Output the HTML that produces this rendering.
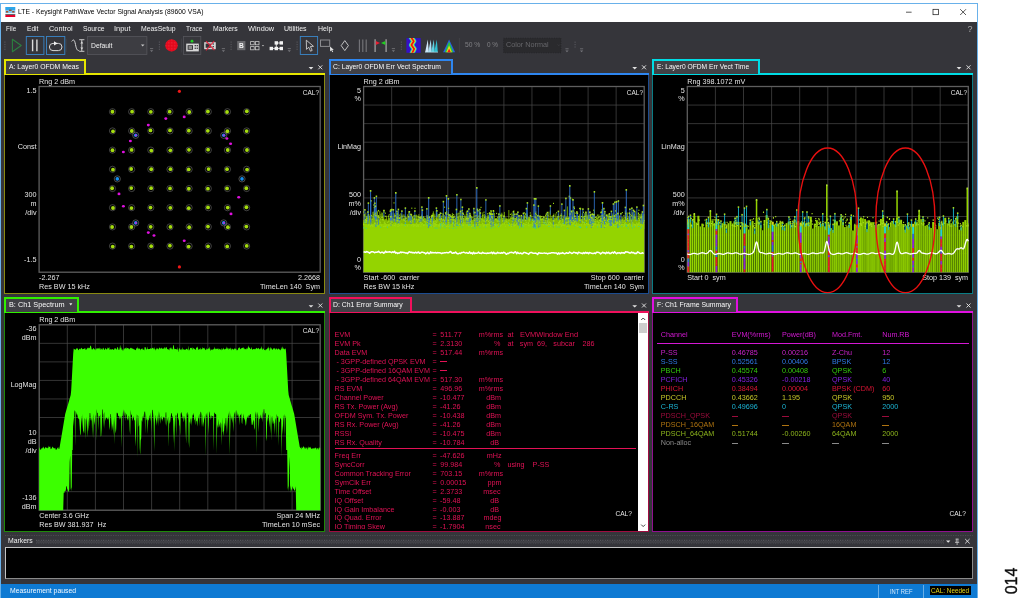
<!DOCTYPE html>
<html><head><meta charset="utf-8"><title>LTE - Keysight PathWave Vector Signal Analysis (89600 VSA)</title>
<style>
html,body{margin:0;padding:0;background:#fff;}
body{width:1024px;height:601px;position:relative;overflow:hidden;font-family:"Liberation Sans",sans-serif;}
.t{position:absolute;white-space:pre;line-height:1;display:block;}
.b{position:absolute;box-sizing:border-box;}
svg{position:absolute;left:0;top:0;overflow:visible;}
#root{position:absolute;left:0;top:0;width:1024px;height:601px;will-change:transform;}
</style></head><body><div id="root">
<div class="b" style="left:0.00px;top:3.00px;width:978.00px;height:595.00px;background:#35353a;border:1px solid #69b1ea;"></div>
<div class="b" style="left:1.00px;top:4.00px;width:976.00px;height:18.00px;background:#ffffff;"></div>
<svg width="1024" height="601"><g><rect x="5.3" y="7" width="10" height="3" fill="#2ea6ea"/><rect x="5.3" y="10" width="10" height="3" fill="#7fc4ee"/><rect x="6" y="11" width="2.2" height="1.6" fill="#a0522d"/><rect x="12.2" y="11" width="2.2" height="1.6" fill="#a0522d"/><rect x="9" y="9.6" width="2.6" height="1.4" fill="#8b5a3c"/><rect x="5.3" y="13" width="10" height="1.2" fill="#e8f4fb"/><rect x="5.3" y="14.2" width="10" height="0.9" fill="#40484c"/><rect x="5.3" y="15.1" width="10" height="1.9" rx="0.6" fill="#e4002b"/></g></svg>
<span class="t" style="top:8.30px;font-size:7.5px;color:#000;left:18.20px;transform:scaleX(0.9007);transform-origin:0 0;">LTE - Keysight PathWave Vector Signal Analysis (89600 VSA)</span>
<svg width="1024" height="601" fill="none" stroke="#111" stroke-width="0.7"><path d="M906 12.2h5.6"/><rect x="933" y="9.3" width="5.4" height="5.4"/><path d="M960.2 9.2l5.8 5.8M966 9.2l-5.8 5.8"/></svg>
<span class="t" style="top:24.69px;font-size:7.4px;color:#f1f1f1;left:5.70px;transform:scaleX(0.8554);transform-origin:0 0;">File</span>
<span class="t" style="top:24.69px;font-size:7.4px;color:#f1f1f1;left:26.70px;transform:scaleX(0.8940);transform-origin:0 0;">Edit</span>
<span class="t" style="top:24.69px;font-size:7.4px;color:#f1f1f1;left:48.90px;transform:scaleX(0.9935);transform-origin:0 0;">Control</span>
<span class="t" style="top:24.69px;font-size:7.4px;color:#f1f1f1;left:82.50px;transform:scaleX(0.9212);transform-origin:0 0;">Source</span>
<span class="t" style="top:24.69px;font-size:7.4px;color:#f1f1f1;left:114.30px;transform:scaleX(1.0025);transform-origin:0 0;">Input</span>
<span class="t" style="top:24.69px;font-size:7.4px;color:#f1f1f1;left:141.00px;transform:scaleX(0.9269);transform-origin:0 0;">MeasSetup</span>
<span class="t" style="top:24.69px;font-size:7.4px;color:#f1f1f1;left:186.00px;transform:scaleX(0.8851);transform-origin:0 0;">Trace</span>
<span class="t" style="top:24.69px;font-size:7.4px;color:#f1f1f1;left:212.70px;transform:scaleX(0.9280);transform-origin:0 0;">Markers</span>
<span class="t" style="top:24.69px;font-size:7.4px;color:#f1f1f1;left:247.90px;transform:scaleX(0.9955);transform-origin:0 0;">Window</span>
<span class="t" style="top:24.69px;font-size:7.4px;color:#f1f1f1;left:284.40px;transform:scaleX(0.9477);transform-origin:0 0;">Utilities</span>
<span class="t" style="top:24.69px;font-size:7.4px;color:#f1f1f1;left:317.70px;transform:scaleX(0.9396);transform-origin:0 0;">Help</span>
<span class="t" style="top:25.13px;font-size:9px;color:#a8a8a8;left:967.50px;">?</span>
<svg width="1024" height="601"><defs><pattern id="dots" width="1.5" height="1.5" patternUnits="userSpaceOnUse"><rect width="0.6" height="0.6" fill="#ff5060" opacity="0.55"/></pattern></defs><rect x="4.3" y="41.5" width="1.2" height="1.2" fill="#55555a"/><rect x="4.3" y="43.9" width="1.2" height="1.2" fill="#55555a"/><rect x="4.3" y="46.3" width="1.2" height="1.2" fill="#55555a"/><rect x="4.3" y="48.7" width="1.2" height="1.2" fill="#55555a"/><path d="M12.4 39.3L21.2 45.5L12.4 51.7Z" fill="none" stroke="#2c8040" stroke-width="1.1" stroke-linejoin="round"/><rect x="26.3" y="36.5" width="17.6" height="18" fill="#35353a" stroke="#3a86c8" stroke-width="0.9"/><path d="M32.6 39.6v11.6M36.9 39.6v11.6" stroke="#dcdcdc" stroke-width="1.4"/><rect x="46.5" y="36.5" width="18.3" height="18" fill="#35353a" stroke="#3a86c8" stroke-width="0.9"/><rect x="49.4" y="43.4" width="12.6" height="7.2" rx="3.6" fill="none" stroke="#d8d8d8" stroke-width="1"/><path d="M54 41.3l3.6 2.1L54 45.6z" fill="#f0f0f0"/><path d="M66.5 39v13" stroke="#3f3f46" stroke-width="0.7"/><path d="M71.7 41.4c1.8-2.6 2.9-1.6 3.8 3.2s2.2 6.6 3.6 5.8" fill="none" stroke="#d8d8d8" stroke-width="1"/><path d="M79.2 39.7h5.2M79.2 51.3h5.2M81.8 39.9v11.2" stroke="#d8d8d8" stroke-width="0.9"/><path d="M80.3 43.4l1.5-2.2 1.5 2.2zM80.3 47.6l1.5 2.2 1.5-2.2z" fill="#d8d8d8"/><rect x="87.4" y="36.6" width="59.5" height="17.8" fill="#3d3d42" stroke="#56565c" stroke-width="0.8"/><path d="M140.9 44.4h3.6l-1.8 2.2z" fill="#c8c8c8"/><path d="M150.0 48.6h3.2" stroke="#77777c" stroke-width="0.8"/><path d="M150.0 50.2h3.2l-1.6 1.8z" fill="#77777c"/><rect x="158.8" y="41.5" width="1.2" height="1.2" fill="#55555a"/><rect x="158.8" y="43.9" width="1.2" height="1.2" fill="#55555a"/><rect x="158.8" y="46.3" width="1.2" height="1.2" fill="#55555a"/><rect x="158.8" y="48.7" width="1.2" height="1.2" fill="#55555a"/><circle cx="171.5" cy="45.4" r="6.2" fill="#e3081c"/><circle cx="171.5" cy="45.4" r="6.2" fill="url(#dots)"/><path d="M181.7 38.5v14" stroke="#46464c" stroke-width="0.7"/><rect x="183.4" y="36.5" width="17.4" height="18" fill="#37373c" stroke="#56565c" stroke-width="0.8"/><circle cx="192" cy="41.2" r="1.4" fill="#22d022"/><rect x="186.2" y="43.6" width="12.6" height="7.8" fill="#d6d6d6"/><rect x="187.6" y="45.2" width="5.4" height="4.6" fill="#37373c"/><rect x="188.6" y="46" width="3.4" height="3" fill="#8a8a8a"/><rect x="194.6" y="45" width="1.3" height="1.3" fill="#37373c"/><rect x="196.6" y="45" width="1.3" height="1.3" fill="#37373c"/><rect x="194.6" y="47.6" width="1.3" height="1.3" fill="#37373c"/><rect x="196.6" y="47.6" width="1.3" height="1.3" fill="#37373c"/><rect x="204.2" y="42.2" width="11.6" height="7" fill="#d6d6d6"/><rect x="205.6" y="43.6" width="5.2" height="4.2" fill="#35353a"/><rect x="212.6" y="43.4" width="1.3" height="1.3" fill="#35353a"/><rect x="212.6" y="46" width="1.3" height="1.3" fill="#35353a"/><path d="M206 41.2l8.4 9M214.2 41l-8.2 9.4" stroke="#e3203a" stroke-width="1.1"/><path d="M221.8 48.6h3.2" stroke="#77777c" stroke-width="0.8"/><path d="M221.8 50.2h3.2l-1.6 1.8z" fill="#77777c"/><rect x="230.5" y="41.5" width="1.2" height="1.2" fill="#55555a"/><rect x="230.5" y="43.9" width="1.2" height="1.2" fill="#55555a"/><rect x="230.5" y="46.3" width="1.2" height="1.2" fill="#55555a"/><rect x="230.5" y="48.7" width="1.2" height="1.2" fill="#55555a"/><rect x="237.2" y="41" width="8.2" height="9.2" fill="#6a6a6e"/><rect x="250.6" y="41.6" width="3.6" height="3.2" fill="none" stroke="#c8c8c8" stroke-width="0.8"/><rect x="250.6" y="46.6" width="3.6" height="3.2" fill="none" stroke="#c8c8c8" stroke-width="0.8"/><rect x="255.4" y="41.6" width="3.6" height="3.2" fill="none" stroke="#c8c8c8" stroke-width="0.8"/><rect x="255.4" y="46.6" width="3.6" height="3.2" fill="none" stroke="#c8c8c8" stroke-width="0.8"/><path d="M261.8 45h2.4l-1.2 1.4z" fill="#b0b0b0"/><path d="M271.5 48.4h9.6M276.3 43v5.4M276.3 43h4.8" stroke="#e8e8e8" stroke-width="0.9" fill="none"/><rect x="269.6" y="46.8" width="3.4" height="3.4" fill="#f2f2f2"/><rect x="274.6" y="46.8" width="3.4" height="3.4" fill="#f2f2f2"/><rect x="279.6" y="46.8" width="3.4" height="3.4" fill="#f2f2f2"/><rect x="274.6" y="41.2" width="3.4" height="3.4" fill="#f2f2f2"/><rect x="279.6" y="41.2" width="3.4" height="3.4" fill="#f2f2f2"/><path d="M287.7 48.6h3.2" stroke="#77777c" stroke-width="0.8"/><path d="M287.7 50.2h3.2l-1.6 1.8z" fill="#77777c"/><rect x="296.5" y="41.5" width="1.2" height="1.2" fill="#55555a"/><rect x="296.5" y="43.9" width="1.2" height="1.2" fill="#55555a"/><rect x="296.5" y="46.3" width="1.2" height="1.2" fill="#55555a"/><rect x="296.5" y="48.7" width="1.2" height="1.2" fill="#55555a"/><rect x="300.3" y="36.5" width="17.3" height="18" fill="#35353a" stroke="#3a86c8" stroke-width="0.9"/><path d="M306.3 40.2l0.2 9.2 2.2-2.2 1.8 4 1.7-0.8-1.8-3.9 3.1-0.2z" fill="#35353a" stroke="#e0e0e0" stroke-width="0.8" stroke-linejoin="round"/><rect x="320.5" y="40" width="9.2" height="6.4" fill="none" stroke="#8c8c90" stroke-width="1"/><path d="M330 46.4l0.1 5 1.2-1.1 1 2 0.9-0.5-1-1.9 1.6-0.1z" fill="#e0e0e0"/><path d="M344.8 40.6l3.6 5-3.6 5-3.6-5z" fill="none" stroke="#d0d0d0" stroke-width="0.9"/><path d="M359.4 39.4v12.6" stroke="#77777b" stroke-width="1.1"/><path d="M362.8 39.4v12.6" stroke="#77777b" stroke-width="1.1"/><path d="M366.2 39.4v12.6" stroke="#77777b" stroke-width="1.1"/><path d="M375.1 39.2v12.8M386.1 39.2v12.8" stroke="#a0a0a0" stroke-width="1.3"/><path d="M375.8 41l4.2 2-4.2 2z" fill="#e81c30"/><path d="M385.4 41l-4.4 2 4.4 2z" fill="#20d020"/><path d="M391.79999999999995 48.6h3.2" stroke="#77777c" stroke-width="0.8"/><path d="M391.79999999999995 50.2h3.2l-1.6 1.8z" fill="#77777c"/><rect x="400.8" y="41.5" width="1.2" height="1.2" fill="#55555a"/><rect x="400.8" y="43.9" width="1.2" height="1.2" fill="#55555a"/><rect x="400.8" y="46.3" width="1.2" height="1.2" fill="#55555a"/><rect x="400.8" y="48.7" width="1.2" height="1.2" fill="#55555a"/><rect x="406.4" y="38.1" width="14.3" height="14.7" fill="#3510c8"/><clipPath id="cpz"><rect x="406.4" y="38.1" width="14.3" height="14.7"/></clipPath><g clip-path="url(#cpz)"><path d="M410.6 36.6l3.2 4.6-2.4 3.8 2.8 3.9-2.6 5.4" fill="none" stroke="#20c8c8" stroke-width="5.0" stroke-linejoin="round"/><path d="M410.6 36.6l3.2 4.6-2.4 3.8 2.8 3.9-2.6 5.4" fill="none" stroke="#e8e020" stroke-width="3.3" stroke-linejoin="round"/><path d="M410.6 36.6l3.2 4.6-2.4 3.8 2.8 3.9-2.6 5.4" fill="none" stroke="#f01010" stroke-width="1.7" stroke-linejoin="round"/></g><path d="M425.2 52l2.6-12.6 1 12.6z" fill="#d0e8f8"/><path d="M428.2 52l2.6-12.6 1 12.6z" fill="#a8dcf0"/><path d="M431.2 52l2.6-12.6 1 12.6z" fill="#60d0e0"/><path d="M434.2 52l2.6-12.6 1 12.6z" fill="#30c0d0"/><path d="M425 52.2h13" stroke="#b0e0f0" stroke-width="0.7"/><path d="M449.1 39.4l6 12.8h-12z" fill="#2860e0"/><path d="M449.1 41.6l4.2 10.6h-8.4z" fill="#28c838"/><path d="M449.1 45.4l2.8 6.8h-5.6z" fill="#e8d820"/><path d="M449.1 48.6l1.7 3.6h-3.4z" fill="#f01818"/><path d="M459.4 38v14.6" stroke="#46464c" stroke-width="0.7"/><rect x="503.6" y="38.2" width="57.4" height="14.6" fill="#2a2a2d" stroke="#222225" stroke-width="0.8" stroke-dasharray="0.8 1.6"/><path d="M557.6 44.4l1.2 1.4 1.2-1.4" fill="none" stroke="#3c3c40" stroke-width="0.7"/><path d="M565.4 48.8h3.2" stroke="#77777c" stroke-width="0.8"/><path d="M565.4 50.4h3.2l-1.6 1.8z" fill="#77777c"/><rect x="574.5" y="41.6" width="1.2" height="1.2" fill="#55555a"/><rect x="574.5" y="44.0" width="1.2" height="1.2" fill="#55555a"/><rect x="574.5" y="46.4" width="1.2" height="1.2" fill="#55555a"/><path d="M580.0 48.8h3.2" stroke="#77777c" stroke-width="0.8"/><path d="M580.0 50.4h3.2l-1.6 1.8z" fill="#77777c"/></svg>
<span class="t" style="top:41.56px;font-size:7.2px;color:#f1f1f1;left:91.00px;transform:scaleX(0.9424);transform-origin:0 0;">Default</span>
<span class="t" style="top:42.76px;font-size:6.6px;color:#f4f4f4;left:238.90px;font-weight:bold;">B</span>
<span class="t" style="top:41.26px;font-size:7.2px;color:#808084;left:464.70px;transform:scaleX(0.9323);transform-origin:0 0;">50 %</span>
<span class="t" style="top:41.26px;font-size:7.2px;color:#808084;left:487.00px;transform:scaleX(0.8866);transform-origin:0 0;">0 %</span>
<span class="t" style="top:41.46px;font-size:7.2px;color:#66666a;left:506.00px;transform:scaleX(1.0045);transform-origin:0 0;">Color Normal</span>
<div class="b" style="left:4.00px;top:73.80px;width:321.20px;height:220.20px;background:#000;border:1px solid #8a8a10;border-top:none;"></div>
<div class="b" style="left:4.00px;top:72.70px;width:321.20px;height:2.20px;background:#e6e600;"></div>
<div class="b" style="left:4.00px;top:59.00px;width:82.20px;height:15.30px;background:#414146;border:2px solid #e6e600;border-bottom:none;"></div>
<span class="t" style="top:62.52px;font-size:7.6px;color:#fafafa;left:8.90px;transform:scaleX(0.9008);transform-origin:0 0;">A: Layer0 OFDM Meas</span>
<svg width="1024" height="601"><path d="M308.6 67.0h4.8l-2.4 2.4z" fill="#e0e0e0"/><path d="M318.3 65.3l4.0 4.0M322.3 65.3l-4.0 4.0" stroke="#e8e8e8" stroke-width="0.9"/></svg>
<div class="b" style="left:328.50px;top:73.80px;width:320.70px;height:220.20px;background:#000;border:1px solid #1c4c90;border-top:none;"></div>
<div class="b" style="left:328.50px;top:72.70px;width:320.70px;height:2.20px;background:#2e86f0;"></div>
<div class="b" style="left:328.50px;top:59.00px;width:124.50px;height:15.30px;background:#414146;border:2px solid #2e86f0;border-bottom:none;"></div>
<span class="t" style="top:62.52px;font-size:7.6px;color:#fafafa;left:333.40px;transform:scaleX(0.8910);transform-origin:0 0;">C: Layer0 OFDM Err Vect Spectrum</span>
<svg width="1024" height="601"><path d="M632.3000000000001 67.0h4.8l-2.4 2.4z" fill="#e0e0e0"/><path d="M642.0 65.3l4.0 4.0M646.0 65.3l-4.0 4.0" stroke="#e8e8e8" stroke-width="0.9"/></svg>
<div class="b" style="left:652.00px;top:73.80px;width:321.40px;height:220.20px;background:#000;border:1px solid #0a7c84;border-top:none;"></div>
<div class="b" style="left:652.00px;top:72.70px;width:321.40px;height:2.20px;background:#00dce4;"></div>
<div class="b" style="left:652.00px;top:59.00px;width:108.20px;height:15.30px;background:#414146;border:2px solid #00dce4;border-bottom:none;"></div>
<span class="t" style="top:62.52px;font-size:7.6px;color:#fafafa;left:656.90px;transform:scaleX(0.8803);transform-origin:0 0;">E: Layer0 OFDM Err Vect Time</span>
<svg width="1024" height="601"><path d="M956.6 67.0h4.8l-2.4 2.4z" fill="#e0e0e0"/><path d="M966.5 65.3l4.0 4.0M970.5 65.3l-4.0 4.0" stroke="#e8e8e8" stroke-width="0.9"/></svg>
<div class="b" style="left:4.00px;top:312.00px;width:321.20px;height:220.00px;background:#000;border:1px solid #1e8a08;border-top:none;"></div>
<div class="b" style="left:4.00px;top:310.90px;width:321.20px;height:2.20px;background:#30f000;"></div>
<div class="b" style="left:4.00px;top:297.20px;width:75.20px;height:15.30px;background:#414146;border:2px solid #30f000;border-bottom:none;"></div>
<span class="t" style="top:300.72px;font-size:7.6px;color:#fafafa;left:8.90px;transform:scaleX(0.9608);transform-origin:0 0;">B: Ch1 Spectrum</span>
<svg width="1024" height="601"><path d="M308.6 305.2h4.8l-2.4 2.4z" fill="#e0e0e0"/><path d="M318.3 303.5l4.0 4.0M322.3 303.5l-4.0 4.0" stroke="#e8e8e8" stroke-width="0.9"/></svg>
<div class="b" style="left:328.50px;top:312.00px;width:320.70px;height:220.00px;background:#000;border:1px solid #a00c40;border-top:none;"></div>
<div class="b" style="left:328.50px;top:310.90px;width:320.70px;height:2.20px;background:#f0105c;"></div>
<div class="b" style="left:328.50px;top:297.20px;width:83.30px;height:15.30px;background:#414146;border:2px solid #f0105c;border-bottom:none;"></div>
<span class="t" style="top:300.72px;font-size:7.6px;color:#fafafa;left:333.40px;transform:scaleX(0.9032);transform-origin:0 0;">D: Ch1 Error Summary</span>
<svg width="1024" height="601"><path d="M632.3000000000001 305.2h4.8l-2.4 2.4z" fill="#e0e0e0"/><path d="M642.0 303.5l4.0 4.0M646.0 303.5l-4.0 4.0" stroke="#e8e8e8" stroke-width="0.9"/></svg>
<div class="b" style="left:652.00px;top:312.00px;width:321.40px;height:220.00px;background:#000;border:1px solid #901090;border-top:none;"></div>
<div class="b" style="left:652.00px;top:310.90px;width:321.40px;height:2.20px;background:#e010e0;"></div>
<div class="b" style="left:652.00px;top:297.20px;width:85.60px;height:15.30px;background:#414146;border:2px solid #e010e0;border-bottom:none;"></div>
<span class="t" style="top:300.72px;font-size:7.6px;color:#fafafa;left:656.90px;transform:scaleX(0.9079);transform-origin:0 0;">F: Ch1 Frame Summary</span>
<svg width="1024" height="601"><path d="M956.6 305.2h4.8l-2.4 2.4z" fill="#e0e0e0"/><path d="M966.5 303.5l4.0 4.0M970.5 303.5l-4.0 4.0" stroke="#e8e8e8" stroke-width="0.9"/></svg>
<svg width="1024" height="601"><path d="M69.2 303.2h3.2l-1.6 2.2z" fill="#e8e8e8"/></svg>
<svg width="1024" height="601"><circle cx="112.50" cy="111.70" r="3.1" fill="none" stroke="#6a6a6a" stroke-width="0.6"/><circle cx="112.45" cy="111.76" r="1.9" fill="#a4dc10"/><circle cx="131.66" cy="111.70" r="3.1" fill="none" stroke="#6a6a6a" stroke-width="0.6"/><circle cx="132.08" cy="111.67" r="1.9" fill="#a4dc10"/><circle cx="150.82" cy="111.70" r="3.1" fill="none" stroke="#6a6a6a" stroke-width="0.6"/><circle cx="150.83" cy="111.79" r="1.9" fill="#a4dc10"/><circle cx="169.98" cy="111.70" r="3.1" fill="none" stroke="#6a6a6a" stroke-width="0.6"/><circle cx="169.66" cy="111.71" r="1.9" fill="#a4dc10"/><circle cx="189.14" cy="111.70" r="3.1" fill="none" stroke="#6a6a6a" stroke-width="0.6"/><circle cx="189.27" cy="111.99" r="1.9" fill="#a4dc10"/><circle cx="208.30" cy="111.70" r="3.1" fill="none" stroke="#6a6a6a" stroke-width="0.6"/><circle cx="207.89" cy="111.50" r="1.9" fill="#a4dc10"/><circle cx="227.46" cy="111.70" r="3.1" fill="none" stroke="#6a6a6a" stroke-width="0.6"/><circle cx="227.05" cy="112.01" r="1.9" fill="#a4dc10"/><circle cx="246.62" cy="111.70" r="3.1" fill="none" stroke="#6a6a6a" stroke-width="0.6"/><circle cx="246.81" cy="111.24" r="1.9" fill="#a4dc10"/><circle cx="112.50" cy="130.90" r="3.1" fill="none" stroke="#6a6a6a" stroke-width="0.6"/><circle cx="112.98" cy="131.36" r="1.9" fill="#a4dc10"/><circle cx="131.66" cy="130.90" r="3.1" fill="none" stroke="#6a6a6a" stroke-width="0.6"/><circle cx="131.81" cy="131.02" r="1.9" fill="#a4dc10"/><circle cx="150.82" cy="130.90" r="3.1" fill="none" stroke="#6a6a6a" stroke-width="0.6"/><circle cx="150.48" cy="130.42" r="1.9" fill="#a4dc10"/><circle cx="169.98" cy="130.90" r="3.1" fill="none" stroke="#6a6a6a" stroke-width="0.6"/><circle cx="170.01" cy="130.46" r="1.9" fill="#a4dc10"/><circle cx="189.14" cy="130.90" r="3.1" fill="none" stroke="#6a6a6a" stroke-width="0.6"/><circle cx="188.83" cy="130.64" r="1.9" fill="#a4dc10"/><circle cx="208.30" cy="130.90" r="3.1" fill="none" stroke="#6a6a6a" stroke-width="0.6"/><circle cx="207.83" cy="130.86" r="1.9" fill="#a4dc10"/><circle cx="227.46" cy="130.90" r="3.1" fill="none" stroke="#6a6a6a" stroke-width="0.6"/><circle cx="227.40" cy="131.24" r="1.9" fill="#a4dc10"/><circle cx="246.62" cy="130.90" r="3.1" fill="none" stroke="#6a6a6a" stroke-width="0.6"/><circle cx="246.64" cy="131.04" r="1.9" fill="#a4dc10"/><circle cx="112.50" cy="150.10" r="3.1" fill="none" stroke="#6a6a6a" stroke-width="0.6"/><circle cx="112.50" cy="150.26" r="1.9" fill="#a4dc10"/><circle cx="131.66" cy="150.10" r="3.1" fill="none" stroke="#6a6a6a" stroke-width="0.6"/><circle cx="131.62" cy="149.88" r="1.9" fill="#a4dc10"/><circle cx="150.82" cy="150.10" r="3.1" fill="none" stroke="#6a6a6a" stroke-width="0.6"/><circle cx="151.32" cy="150.60" r="1.9" fill="#a4dc10"/><circle cx="169.98" cy="150.10" r="3.1" fill="none" stroke="#6a6a6a" stroke-width="0.6"/><circle cx="170.32" cy="150.31" r="1.9" fill="#a4dc10"/><circle cx="189.14" cy="150.10" r="3.1" fill="none" stroke="#6a6a6a" stroke-width="0.6"/><circle cx="188.96" cy="149.83" r="1.9" fill="#a4dc10"/><circle cx="208.30" cy="150.10" r="3.1" fill="none" stroke="#6a6a6a" stroke-width="0.6"/><circle cx="208.09" cy="149.67" r="1.9" fill="#a4dc10"/><circle cx="227.46" cy="150.10" r="3.1" fill="none" stroke="#6a6a6a" stroke-width="0.6"/><circle cx="227.73" cy="150.00" r="1.9" fill="#a4dc10"/><circle cx="246.62" cy="150.10" r="3.1" fill="none" stroke="#6a6a6a" stroke-width="0.6"/><circle cx="246.97" cy="149.99" r="1.9" fill="#a4dc10"/><circle cx="112.50" cy="169.30" r="3.1" fill="none" stroke="#6a6a6a" stroke-width="0.6"/><circle cx="112.96" cy="169.65" r="1.9" fill="#a4dc10"/><circle cx="131.66" cy="169.30" r="3.1" fill="none" stroke="#6a6a6a" stroke-width="0.6"/><circle cx="131.16" cy="169.01" r="1.9" fill="#a4dc10"/><circle cx="150.82" cy="169.30" r="3.1" fill="none" stroke="#6a6a6a" stroke-width="0.6"/><circle cx="151.23" cy="169.27" r="1.9" fill="#a4dc10"/><circle cx="169.98" cy="169.30" r="3.1" fill="none" stroke="#6a6a6a" stroke-width="0.6"/><circle cx="170.46" cy="169.20" r="1.9" fill="#a4dc10"/><circle cx="189.14" cy="169.30" r="3.1" fill="none" stroke="#6a6a6a" stroke-width="0.6"/><circle cx="188.71" cy="169.43" r="1.9" fill="#a4dc10"/><circle cx="208.30" cy="169.30" r="3.1" fill="none" stroke="#6a6a6a" stroke-width="0.6"/><circle cx="208.58" cy="169.07" r="1.9" fill="#a4dc10"/><circle cx="227.46" cy="169.30" r="3.1" fill="none" stroke="#6a6a6a" stroke-width="0.6"/><circle cx="227.05" cy="169.13" r="1.9" fill="#a4dc10"/><circle cx="246.62" cy="169.30" r="3.1" fill="none" stroke="#6a6a6a" stroke-width="0.6"/><circle cx="247.08" cy="169.56" r="1.9" fill="#a4dc10"/><circle cx="112.50" cy="188.50" r="3.1" fill="none" stroke="#6a6a6a" stroke-width="0.6"/><circle cx="112.12" cy="188.25" r="1.9" fill="#a4dc10"/><circle cx="131.66" cy="188.50" r="3.1" fill="none" stroke="#6a6a6a" stroke-width="0.6"/><circle cx="131.26" cy="188.06" r="1.9" fill="#a4dc10"/><circle cx="150.82" cy="188.50" r="3.1" fill="none" stroke="#6a6a6a" stroke-width="0.6"/><circle cx="151.12" cy="188.18" r="1.9" fill="#a4dc10"/><circle cx="169.98" cy="188.50" r="3.1" fill="none" stroke="#6a6a6a" stroke-width="0.6"/><circle cx="170.04" cy="188.45" r="1.9" fill="#a4dc10"/><circle cx="189.14" cy="188.50" r="3.1" fill="none" stroke="#6a6a6a" stroke-width="0.6"/><circle cx="188.83" cy="188.73" r="1.9" fill="#a4dc10"/><circle cx="208.30" cy="188.50" r="3.1" fill="none" stroke="#6a6a6a" stroke-width="0.6"/><circle cx="207.93" cy="188.64" r="1.9" fill="#a4dc10"/><circle cx="227.46" cy="188.50" r="3.1" fill="none" stroke="#6a6a6a" stroke-width="0.6"/><circle cx="227.08" cy="188.42" r="1.9" fill="#a4dc10"/><circle cx="246.62" cy="188.50" r="3.1" fill="none" stroke="#6a6a6a" stroke-width="0.6"/><circle cx="246.33" cy="188.27" r="1.9" fill="#a4dc10"/><circle cx="112.50" cy="207.70" r="3.1" fill="none" stroke="#6a6a6a" stroke-width="0.6"/><circle cx="112.97" cy="208.00" r="1.9" fill="#a4dc10"/><circle cx="131.66" cy="207.70" r="3.1" fill="none" stroke="#6a6a6a" stroke-width="0.6"/><circle cx="131.46" cy="208.08" r="1.9" fill="#a4dc10"/><circle cx="150.82" cy="207.70" r="3.1" fill="none" stroke="#6a6a6a" stroke-width="0.6"/><circle cx="150.53" cy="207.59" r="1.9" fill="#a4dc10"/><circle cx="169.98" cy="207.70" r="3.1" fill="none" stroke="#6a6a6a" stroke-width="0.6"/><circle cx="170.33" cy="207.84" r="1.9" fill="#a4dc10"/><circle cx="189.14" cy="207.70" r="3.1" fill="none" stroke="#6a6a6a" stroke-width="0.6"/><circle cx="188.74" cy="208.19" r="1.9" fill="#a4dc10"/><circle cx="208.30" cy="207.70" r="3.1" fill="none" stroke="#6a6a6a" stroke-width="0.6"/><circle cx="208.01" cy="207.46" r="1.9" fill="#a4dc10"/><circle cx="227.46" cy="207.70" r="3.1" fill="none" stroke="#6a6a6a" stroke-width="0.6"/><circle cx="227.73" cy="207.53" r="1.9" fill="#a4dc10"/><circle cx="246.62" cy="207.70" r="3.1" fill="none" stroke="#6a6a6a" stroke-width="0.6"/><circle cx="246.42" cy="207.27" r="1.9" fill="#a4dc10"/><circle cx="112.50" cy="226.90" r="3.1" fill="none" stroke="#6a6a6a" stroke-width="0.6"/><circle cx="112.09" cy="226.98" r="1.9" fill="#a4dc10"/><circle cx="131.66" cy="226.90" r="3.1" fill="none" stroke="#6a6a6a" stroke-width="0.6"/><circle cx="131.40" cy="227.00" r="1.9" fill="#a4dc10"/><circle cx="150.82" cy="226.90" r="3.1" fill="none" stroke="#6a6a6a" stroke-width="0.6"/><circle cx="150.69" cy="226.85" r="1.9" fill="#a4dc10"/><circle cx="169.98" cy="226.90" r="3.1" fill="none" stroke="#6a6a6a" stroke-width="0.6"/><circle cx="170.44" cy="226.88" r="1.9" fill="#a4dc10"/><circle cx="189.14" cy="226.90" r="3.1" fill="none" stroke="#6a6a6a" stroke-width="0.6"/><circle cx="189.21" cy="227.27" r="1.9" fill="#a4dc10"/><circle cx="208.30" cy="226.90" r="3.1" fill="none" stroke="#6a6a6a" stroke-width="0.6"/><circle cx="207.98" cy="226.55" r="1.9" fill="#a4dc10"/><circle cx="227.46" cy="226.90" r="3.1" fill="none" stroke="#6a6a6a" stroke-width="0.6"/><circle cx="227.87" cy="227.22" r="1.9" fill="#a4dc10"/><circle cx="246.62" cy="226.90" r="3.1" fill="none" stroke="#6a6a6a" stroke-width="0.6"/><circle cx="246.37" cy="226.59" r="1.9" fill="#a4dc10"/><circle cx="112.50" cy="246.10" r="3.1" fill="none" stroke="#6a6a6a" stroke-width="0.6"/><circle cx="112.74" cy="246.54" r="1.9" fill="#a4dc10"/><circle cx="131.66" cy="246.10" r="3.1" fill="none" stroke="#6a6a6a" stroke-width="0.6"/><circle cx="131.36" cy="246.55" r="1.9" fill="#a4dc10"/><circle cx="150.82" cy="246.10" r="3.1" fill="none" stroke="#6a6a6a" stroke-width="0.6"/><circle cx="151.20" cy="246.20" r="1.9" fill="#a4dc10"/><circle cx="169.98" cy="246.10" r="3.1" fill="none" stroke="#6a6a6a" stroke-width="0.6"/><circle cx="169.90" cy="245.70" r="1.9" fill="#a4dc10"/><circle cx="189.14" cy="246.10" r="3.1" fill="none" stroke="#6a6a6a" stroke-width="0.6"/><circle cx="188.68" cy="246.56" r="1.9" fill="#a4dc10"/><circle cx="208.30" cy="246.10" r="3.1" fill="none" stroke="#6a6a6a" stroke-width="0.6"/><circle cx="208.04" cy="246.30" r="1.9" fill="#a4dc10"/><circle cx="227.46" cy="246.10" r="3.1" fill="none" stroke="#6a6a6a" stroke-width="0.6"/><circle cx="227.22" cy="246.42" r="1.9" fill="#a4dc10"/><circle cx="246.62" cy="246.10" r="3.1" fill="none" stroke="#6a6a6a" stroke-width="0.6"/><circle cx="246.72" cy="245.89" r="1.9" fill="#a4dc10"/><ellipse cx="148.3" cy="125.1" rx="1.5" ry="1.3" fill="#e010e0"/><ellipse cx="165.8" cy="118.6" rx="1.5" ry="1.3" fill="#e010e0"/><ellipse cx="184.2" cy="116.9" rx="1.5" ry="1.3" fill="#e010e0"/><ellipse cx="130.4" cy="141" rx="1.5" ry="1.3" fill="#e010e0"/><ellipse cx="123.4" cy="152" rx="1.5" ry="1.3" fill="#e010e0"/><ellipse cx="226.9" cy="138.5" rx="1.5" ry="1.3" fill="#e010e0"/><ellipse cx="230.6" cy="143.8" rx="1.5" ry="1.3" fill="#e010e0"/><ellipse cx="119" cy="193.9" rx="1.5" ry="1.3" fill="#e010e0"/><ellipse cx="123.4" cy="206.2" rx="1.5" ry="1.3" fill="#e010e0"/><ellipse cx="238.7" cy="197.2" rx="1.5" ry="1.3" fill="#e010e0"/><ellipse cx="231" cy="213.9" rx="1.5" ry="1.3" fill="#e010e0"/><ellipse cx="148.3" cy="232.6" rx="1.5" ry="1.3" fill="#e010e0"/><ellipse cx="154" cy="235.5" rx="1.5" ry="1.3" fill="#e010e0"/><ellipse cx="184.2" cy="240.8" rx="1.5" ry="1.3" fill="#e010e0"/><circle cx="135.7" cy="135.3" r="3.1" fill="none" stroke="#7a7a7a" stroke-width="0.6"/><circle cx="135.7" cy="135.3" r="1.8" fill="#1890f0"/><circle cx="136.0" cy="135.3" r="1.1" fill="#b030e0"/><circle cx="223.7" cy="135.3" r="3.1" fill="none" stroke="#7a7a7a" stroke-width="0.6"/><circle cx="223.7" cy="135.3" r="1.8" fill="#1890f0"/><circle cx="224.0" cy="135.3" r="1.1" fill="#b030e0"/><circle cx="117.3" cy="178.9" r="3.1" fill="none" stroke="#7a7a7a" stroke-width="0.6"/><circle cx="117.3" cy="178.9" r="1.8" fill="#1890f0"/><circle cx="242" cy="178.9" r="3.1" fill="none" stroke="#7a7a7a" stroke-width="0.6"/><circle cx="242" cy="178.9" r="1.8" fill="#1890f0"/><circle cx="135.7" cy="222.9" r="3.1" fill="none" stroke="#7a7a7a" stroke-width="0.6"/><circle cx="135.7" cy="222.9" r="1.8" fill="#1890f0"/><circle cx="136.0" cy="222.9" r="1.1" fill="#b030e0"/><circle cx="223.7" cy="222.9" r="3.1" fill="none" stroke="#7a7a7a" stroke-width="0.6"/><circle cx="223.7" cy="222.9" r="1.8" fill="#1890f0"/><circle cx="224.0" cy="222.9" r="1.1" fill="#b030e0"/><circle cx="179.4" cy="91.3" r="1.6" fill="#f01818"/><circle cx="179.4" cy="266.9" r="1.6" fill="#f01818"/></svg>
<svg width="1024" height="601"><rect x="39.1" y="86.5" width="281.09999999999997" height="185.7" fill="none" stroke="#5e5e5e" stroke-width="1.3"/></svg>
<span class="t" style="top:78.36px;font-size:7.2px;color:#e4e4e4;left:39.10px;">Rng 2 dBm</span>
<span class="t" style="top:87.36px;font-size:7.2px;color:#e4e4e4;right:987.50px;">1.5</span>
<span class="t" style="top:143.16px;font-size:7.2px;color:#e4e4e4;right:987.50px;">Const</span>
<span class="t" style="top:190.86px;font-size:7.2px;color:#e4e4e4;right:987.50px;">300</span>
<span class="t" style="top:200.06px;font-size:7.2px;color:#e4e4e4;right:987.50px;">m</span>
<span class="t" style="top:208.86px;font-size:7.2px;color:#e4e4e4;right:987.50px;">/div</span>
<span class="t" style="top:255.66px;font-size:7.2px;color:#e4e4e4;right:987.50px;">-1.5</span>
<span class="t" style="top:88.86px;font-size:7.2px;color:#e4e4e4;right:705.40px;transform:scaleX(0.8994);transform-origin:100% 0;">CAL?</span>
<span class="t" style="top:274.06px;font-size:7.2px;color:#e4e4e4;left:39.10px;">-2.267</span>
<span class="t" style="top:274.06px;font-size:7.2px;color:#e4e4e4;right:704.00px;">2.2668</span>
<span class="t" style="top:283.26px;font-size:7.2px;color:#e4e4e4;left:39.10px;">Res BW 15 kHz</span>
<span class="t" style="top:283.26px;font-size:7.2px;color:#e4e4e4;right:704.00px;">TimeLen 140  Sym</span>
<svg width="1024" height="601"><path d="M391.66 86.5V272.2" stroke="#4a4a4a" stroke-width="0.7"/><path d="M363.6 105.07H644.2" stroke="#4a4a4a" stroke-width="0.7"/><path d="M419.72 86.5V272.2" stroke="#4a4a4a" stroke-width="0.7"/><path d="M363.6 123.64H644.2" stroke="#4a4a4a" stroke-width="0.7"/><path d="M447.78 86.5V272.2" stroke="#4a4a4a" stroke-width="0.7"/><path d="M363.6 142.21H644.2" stroke="#4a4a4a" stroke-width="0.7"/><path d="M475.84 86.5V272.2" stroke="#4a4a4a" stroke-width="0.7"/><path d="M363.6 160.78H644.2" stroke="#4a4a4a" stroke-width="0.7"/><path d="M503.90 86.5V272.2" stroke="#4a4a4a" stroke-width="0.7"/><path d="M363.6 179.35H644.2" stroke="#4a4a4a" stroke-width="0.7"/><path d="M531.96 86.5V272.2" stroke="#4a4a4a" stroke-width="0.7"/><path d="M363.6 197.92H644.2" stroke="#4a4a4a" stroke-width="0.7"/><path d="M560.02 86.5V272.2" stroke="#4a4a4a" stroke-width="0.7"/><path d="M363.6 216.49H644.2" stroke="#4a4a4a" stroke-width="0.7"/><path d="M588.08 86.5V272.2" stroke="#4a4a4a" stroke-width="0.7"/><path d="M363.6 235.06H644.2" stroke="#4a4a4a" stroke-width="0.7"/><path d="M616.14 86.5V272.2" stroke="#4a4a4a" stroke-width="0.7"/><path d="M363.6 253.63H644.2" stroke="#4a4a4a" stroke-width="0.7"/><rect x="363.6" y="86.5" width="280.6" height="185.7" fill="none" stroke="#5e5e5e" stroke-width="1.3"/></svg>
<svg width="1024" height="601"><rect x="363.6" y="224" width="280.6" height="48.19999999999999" fill="#94d400"/><path d="M363.85 220.1V229M364.35 215.3V229M364.85 219.4V229M365.35 219.4V229M365.85 212.5V229M366.35 219.0V229M366.85 216.9V229M367.35 215.5V229M367.85 220.1V229M368.35 213.9V229M368.85 215.4V229M369.35 215.6V229M369.85 219.0V229M370.35 215.9V229M370.85 218.5V229M371.35 219.1V229M371.85 216.0V229M372.35 220.3V229M372.85 211.8V229M373.35 215.4V229M373.85 211.6V229M374.35 209.2V229M374.85 213.7V229M375.35 217.4V229M375.85 219.0V229M376.35 215.9V229M376.85 210.7V229M377.35 211.4V229M377.85 219.8V229M378.35 218.7V229M378.85 219.7V229M379.35 219.3V229M379.85 210.8V229M380.35 217.9V229M380.85 213.8V229M381.35 219.7V229M381.85 212.4V229M382.35 212.9V229M382.85 219.9V229M383.35 217.2V229M383.85 214.8V229M384.35 219.7V229M384.85 219.4V229M385.35 219.3V229M385.85 218.7V229M386.35 216.7V229M386.85 218.9V229M387.35 220.3V229M387.85 220.5V229M388.35 215.7V229M388.85 218.0V229M389.35 217.7V229M389.85 219.2V229M390.35 216.6V229M390.85 219.2V229M391.35 213.1V229M391.85 212.9V229M392.35 217.4V229M392.85 220.2V229M393.35 218.5V229M393.85 219.2V229M394.35 213.3V229M394.85 219.3V229M395.35 218.8V229M395.85 220.0V229M396.35 216.9V229M396.85 213.0V229M397.35 215.7V229M397.85 211.7V229M398.35 216.7V229M398.85 217.3V229M399.35 220.1V229M399.85 220.1V229M400.35 219.4V229M400.85 213.2V229M401.35 216.7V229M401.85 214.2V229M402.35 220.0V229M402.85 215.6V229M403.35 218.5V229M403.85 217.7V229M404.35 217.2V229M404.85 219.0V229M405.35 216.0V229M405.85 220.3V229M406.35 220.1V229M406.85 217.6V229M407.35 219.6V229M407.85 216.7V229M408.35 218.5V229M408.85 211.1V229M409.35 216.2V229M409.85 217.2V229M410.35 216.1V229M410.85 219.3V229M411.35 217.3V229M411.85 219.7V229M412.35 216.9V229M412.85 217.2V229M413.35 219.0V229M413.85 215.4V229M414.35 217.7V229M414.85 214.8V229M415.35 219.2V229M415.85 214.8V229M416.35 214.7V229M416.85 218.6V229M417.35 220.1V229M417.85 215.4V229M418.35 216.1V229M418.85 218.9V229M419.35 219.8V229M419.85 219.0V229M420.35 219.6V229M420.85 217.3V229M421.35 215.8V229M421.85 214.5V229M422.35 217.3V229M422.85 218.3V229M423.35 216.1V229M423.85 219.3V229M424.35 217.9V229M424.85 217.6V229M425.35 218.2V229M425.85 219.1V229M426.35 219.7V229M426.85 215.1V229M427.35 217.2V229M427.85 215.1V229M428.35 219.9V229M428.85 216.4V229M429.35 220.1V229M429.85 219.4V229M430.35 218.0V229M430.85 218.8V229M431.35 214.8V229M431.85 217.9V229M432.35 219.0V229M432.85 213.2V229M433.35 211.3V229M433.85 213.4V229M434.35 219.1V229M434.85 214.4V229M435.35 219.8V229M435.85 219.5V229M436.35 210.8V229M436.85 213.2V229M437.35 218.6V229M437.85 215.3V229M438.35 214.1V229M438.85 218.9V229M439.35 216.8V229M439.85 217.3V229M440.35 216.5V229M440.85 219.2V229M441.35 215.5V229M441.85 218.6V229M442.35 220.0V229M442.85 214.2V229M443.35 215.1V229M443.85 220.3V229M444.35 217.1V229M444.85 219.4V229M445.35 217.5V229M445.85 218.1V229M446.35 216.0V229M446.85 218.1V229M447.35 219.4V229M447.85 216.7V229M448.35 212.4V229M448.85 219.4V229M449.35 214.8V229M449.85 216.9V229M450.35 219.5V229M450.85 220.2V229M451.35 216.3V229M451.85 220.4V229M452.35 212.9V229M452.85 215.9V229M453.35 217.3V229M453.85 219.2V229M454.35 218.7V229M454.85 219.3V229M455.35 217.8V229M455.85 217.5V229M456.35 213.6V229M456.85 217.7V229M457.35 219.2V229M457.85 216.2V229M458.35 216.6V229M458.85 213.7V229M459.35 219.5V229M459.85 214.4V229M460.35 219.9V229M460.85 215.6V229M461.35 219.8V229M461.85 210.3V229M462.35 216.0V229M462.85 218.5V229M463.35 218.1V229M463.85 219.7V229M464.35 218.3V229M464.85 214.5V229M465.35 217.5V229M465.85 217.1V229M466.35 211.5V229M466.85 220.3V229M467.35 215.8V229M467.85 215.3V229M468.35 217.7V229M468.85 220.3V229M469.35 216.5V229M469.85 215.2V229M470.35 219.5V229M470.85 218.6V229M471.35 217.0V229M471.85 219.7V229M472.35 220.2V229M472.85 220.1V229M473.35 219.3V229M473.85 210.6V229M474.35 218.8V229M474.85 219.4V229M475.35 218.9V229M475.85 217.5V229M476.35 219.2V229M476.85 218.4V229M477.35 215.6V229M477.85 219.6V229M478.35 220.5V229M478.85 217.4V229M479.35 210.7V229M479.85 212.7V229M480.35 216.0V229M480.85 217.9V229M481.35 218.3V229M481.85 217.7V229M482.35 214.9V229M482.85 212.4V229M483.35 217.7V229M483.85 219.6V229M484.35 213.9V229M484.85 217.6V229M485.35 215.2V229M485.85 217.2V229M486.35 217.6V229M486.85 218.2V229M487.35 218.9V229M487.85 214.9V229M488.35 215.2V229M488.85 220.1V229M489.35 217.1V229M489.85 218.8V229M490.35 219.7V229M490.85 219.2V229M491.35 210.6V229M491.85 219.4V229M492.35 215.9V229M492.85 219.2V229M493.35 219.5V229M493.85 219.9V229M494.35 212.8V229M494.85 218.8V229M495.35 219.9V229M495.85 219.5V229M496.35 218.1V229M496.85 220.3V229M497.35 219.0V229M497.85 216.2V229M498.35 218.4V229M498.85 217.4V229M499.35 216.3V229M499.85 218.2V229M500.35 219.2V229M500.85 213.8V229M501.35 214.8V229M501.85 212.7V229M502.35 217.9V229M502.85 219.9V229M503.35 216.7V229M503.85 218.2V229M504.35 211.9V229M504.85 219.8V229M505.35 219.7V229M505.85 217.3V229M506.35 219.1V229M506.85 220.1V229M507.35 218.8V229M507.85 218.6V229M508.35 219.5V229M508.85 210.0V229M509.35 218.9V229M509.85 218.8V229M510.35 217.7V229M510.85 217.0V229M511.35 219.6V229M511.85 212.8V229M512.35 218.7V229M512.85 220.2V229M513.35 213.6V229M513.85 210.2V229M514.35 218.2V229M514.85 218.1V229M515.35 220.0V229M515.85 217.8V229M516.35 218.7V229M516.85 217.9V229M517.35 219.0V229M517.85 219.5V229M518.35 217.8V229M518.85 217.6V229M519.35 219.5V229M519.85 215.0V229M520.35 219.4V229M520.85 217.4V229M521.35 218.1V229M521.85 216.8V229M522.35 219.4V229M522.85 219.1V229M523.35 216.6V229M523.85 216.3V229M524.35 214.8V229M524.85 215.6V229M525.35 219.6V229M525.85 219.4V229M526.35 214.6V229M526.85 212.8V229M527.35 214.6V229M527.85 218.9V229M528.35 217.6V229M528.85 217.4V229M529.35 219.4V229M529.85 218.5V229M530.35 218.4V229M530.85 214.3V229M531.35 219.5V229M531.85 220.3V229M532.35 220.1V229M532.85 217.8V229M533.35 219.2V229M533.85 219.4V229M534.35 220.2V229M534.85 219.7V229M535.35 219.5V229M535.85 211.3V229M536.35 217.6V229M536.85 217.5V229M537.35 218.1V229M537.85 219.1V229M538.35 218.9V229M538.85 220.4V229M539.35 216.9V229M539.85 219.5V229M540.35 217.3V229M540.85 215.9V229M541.35 219.4V229M541.85 219.2V229M542.35 218.3V229M542.85 219.1V229M543.35 218.6V229M543.85 219.0V229M544.35 217.9V229M544.85 220.0V229M545.35 220.1V229M545.85 214.7V229M546.35 220.2V229M546.85 216.5V229M547.35 217.9V229M547.85 218.2V229M548.35 218.1V229M548.85 211.7V229M549.35 219.4V229M549.85 218.1V229M550.35 210.4V229M550.85 218.6V229M551.35 218.0V229M551.85 215.9V229M552.35 219.9V229M552.85 216.5V229M553.35 219.8V229M553.85 213.5V229M554.35 217.8V229M554.85 218.7V229M555.35 218.5V229M555.85 213.5V229M556.35 217.3V229M556.85 219.1V229M557.35 216.2V229M557.85 215.9V229M558.35 214.0V229M558.85 219.5V229M559.35 219.3V229M559.85 215.7V229M560.35 219.6V229M560.85 219.9V229M561.35 213.0V229M561.85 214.8V229M562.35 218.3V229M562.85 219.9V229M563.35 217.9V229M563.85 219.6V229M564.35 220.0V229M564.85 216.5V229M565.35 217.1V229M565.85 218.0V229M566.35 216.5V229M566.85 220.2V229M567.35 206.4V229M567.85 218.6V229M568.35 216.8V229M568.85 218.2V229M569.35 218.4V229M569.85 218.7V229M570.35 219.6V229M570.85 219.3V229M571.35 216.7V229M571.85 219.3V229M572.35 210.2V229M572.85 220.0V229M573.35 218.9V229M573.85 217.2V229M574.35 211.7V229M574.85 218.0V229M575.35 218.6V229M575.85 219.7V229M576.35 219.2V229M576.85 219.0V229M577.35 217.5V229M577.85 219.6V229M578.35 217.7V229M578.85 217.3V229M579.35 214.3V229M579.85 215.7V229M580.35 217.2V229M580.85 217.7V229M581.35 219.0V229M581.85 219.2V229M582.35 213.3V229M582.85 216.0V229M583.35 220.4V229M583.85 216.8V229M584.35 217.5V229M584.85 213.0V229M585.35 218.6V229M585.85 214.3V229M586.35 216.9V229M586.85 214.3V229M587.35 215.5V229M587.85 217.2V229M588.35 215.0V229M588.85 215.6V229M589.35 219.8V229M589.85 217.0V229M590.35 219.1V229M590.85 218.9V229M591.35 219.7V229M591.85 217.4V229M592.35 217.1V229M592.85 213.6V229M593.35 214.2V229M593.85 219.7V229M594.35 210.6V229M594.85 219.1V229M595.35 219.5V229M595.85 219.8V229M596.35 216.2V229M596.85 220.3V229M597.35 218.1V229M597.85 216.7V229M598.35 220.3V229M598.85 214.4V229M599.35 220.3V229M599.85 220.3V229M600.35 215.4V229M600.85 218.1V229M601.35 219.8V229M601.85 216.7V229M602.35 215.1V229M602.85 219.8V229M603.35 218.2V229M603.85 213.7V229M604.35 219.8V229M604.85 220.2V229M605.35 220.1V229M605.85 217.9V229M606.35 218.3V229M606.85 215.4V229M607.35 219.4V229M607.85 214.2V229M608.35 215.8V229M608.85 214.4V229M609.35 218.3V229M609.85 219.9V229M610.35 216.0V229M610.85 220.3V229M611.35 219.6V229M611.85 220.0V229M612.35 215.2V229M612.85 213.4V229M613.35 217.5V229M613.85 218.4V229M614.35 219.7V229M614.85 215.6V229M615.35 220.5V229M615.85 213.8V229M616.35 220.3V229M616.85 214.5V229M617.35 218.6V229M617.85 219.4V229M618.35 217.1V229M618.85 220.3V229M619.35 215.4V229M619.85 219.3V229M620.35 219.3V229M620.85 220.1V229M621.35 220.4V229M621.85 216.8V229M622.35 219.0V229M622.85 217.2V229M623.35 219.9V229M623.85 217.5V229M624.35 220.0V229M624.85 220.1V229M625.35 210.7V229M625.85 215.9V229M626.35 217.8V229M626.85 220.2V229M627.35 212.5V229M627.85 219.5V229M628.35 220.0V229M628.85 216.5V229M629.35 215.8V229M629.85 216.6V229M630.35 215.7V229M630.85 218.2V229M631.35 219.5V229M631.85 218.7V229M632.35 212.2V229M632.85 216.2V229M633.35 215.5V229M633.85 215.4V229M634.35 214.0V229M634.85 218.8V229M635.35 216.7V229M635.85 211.3V229M636.35 219.4V229M636.85 217.4V229M637.35 220.0V229M637.85 219.4V229M638.35 212.4V229M638.85 219.5V229M639.35 215.9V229M639.85 217.3V229M640.35 220.4V229M640.85 220.4V229M641.35 213.5V229M641.85 213.5V229M642.35 215.8V229M642.85 220.2V229M643.35 217.4V229M643.85 214.1V229" stroke="#94d400" stroke-width="0.75" fill="none"/><path d="M364.85 209.9V223.1M367.85 212.1V224.3M368.35 203.2V221.0M370.85 200.9V224.9M374.35 198.0V217.5M374.85 203.4V217.7M375.35 206.3V220.0M375.85 215.7V227.1M376.35 196.4V220.2M378.35 216.1V225.0M383.85 210.7V216.9M390.35 211.3V220.8M390.85 216.8V226.1M391.35 209.9V220.9M391.85 209.6V221.1M393.35 209.9V221.7M396.85 211.5V221.2M398.35 209.5V223.3M399.35 218.3V224.1M401.85 211.2V219.8M405.35 208.2V223.7M408.35 216.8V221.4M409.35 211.9V220.4M410.85 214.5V223.9M411.35 215.0V223.6M414.85 211.1V222.9M419.35 217.7V222.1M420.35 218.0V222.4M421.85 207.2V221.5M422.35 210.2V219.7M426.85 208.9V221.8M428.35 218.0V228.0M429.35 217.3V226.2M431.85 216.3V222.6M432.35 215.7V226.4M436.35 208.2V217.5M436.85 210.9V216.5M439.35 214.9V220.8M440.35 213.3V221.9M443.35 201.7V222.5M445.85 213.7V225.2M448.35 198.9V216.8M449.85 215.1V224.2M450.85 216.5V222.5M453.85 217.2V226.7M456.35 209.6V219.3M456.85 194.9V226.0M460.35 211.5V225.3M460.85 199.6V222.1M462.35 207.3V218.4M462.85 213.4V222.7M466.85 218.6V223.7M467.35 211.3V221.6M468.85 209.1V224.9M469.85 213.7V222.7M470.35 215.5V223.0M470.85 217.0V221.8M473.85 208.7V213.8M474.85 212.6V226.9M477.35 209.4V221.7M477.85 210.8V226.1M479.85 209.7V221.3M480.35 213.1V218.8M485.85 200.0V224.5M489.35 213.6V219.8M489.85 213.1V221.2M490.35 214.1V221.8M490.85 214.4V226.7M491.85 217.1V227.1M492.35 214.3V219.3M493.35 210.9V226.0M498.85 214.2V221.8M499.85 206.0V226.3M503.85 216.3V222.2M512.85 218.1V225.9M513.35 211.9V221.0M514.85 214.4V220.5M516.85 214.2V224.7M517.85 212.3V225.0M518.85 216.0V225.9M521.35 215.8V227.1M523.35 213.5V221.4M526.35 208.7V220.2M527.35 203.0V219.3M530.35 215.8V220.9M533.85 205.2V227.7M534.35 198.9V226.7M535.35 217.2V227.6M537.85 215.8V221.6M538.35 206.2V227.8M539.85 216.4V227.0M543.85 217.3V223.9M547.35 212.7V223.4M550.35 206.1V214.7M553.35 216.0V227.2M558.35 211.5V220.3M561.85 204.2V220.1M564.35 210.5V223.9M565.85 198.5V220.5M566.85 218.6V225.1M569.35 196.5V224.1M569.85 214.1V224.5M570.35 198.1V225.3M571.35 211.4V221.2M573.85 207.2V220.1M574.85 216.3V222.7M576.85 212.0V221.8M577.35 213.3V221.2M580.35 209.0V222.6M582.85 209.2V223.1M585.85 212.4V220.1M588.35 209.0V219.5M589.85 212.3V224.1M590.35 215.5V223.9M590.85 214.7V224.4M591.35 217.7V228.0M592.35 214.3V225.7M593.85 214.8V223.1M594.35 191.9V217.7M601.35 212.2V228.0M602.35 210.0V223.5M603.85 208.7V219.9M604.35 217.7V228.0M604.85 211.8V225.4M606.35 215.3V221.5M609.35 214.0V222.7M609.85 216.7V225.7M610.85 216.9V226.2M611.35 211.5V226.2M613.35 204.1V223.9M614.35 216.1V222.5M614.85 202.4V217.7M617.85 213.6V228.0M618.35 201.1V219.7M620.85 213.8V225.0M625.35 207.5V214.4M625.85 213.6V219.1M629.35 213.3V222.1M629.85 209.3V221.3M631.85 208.3V225.7M633.35 210.4V219.5M634.35 211.5V218.9M636.85 207.2V221.0M640.85 217.7V223.4M642.35 212.1V224.1M643.35 205.6V224.0" stroke="#3278d8" stroke-width="0.8" fill="none"/><rect x="364.15" y="209.0" width="1.5" height="1.6" fill="#a8dc20"/><rect x="367.15" y="211.2" width="1.5" height="1.6" fill="#a8dc20"/><rect x="367.65" y="202.3" width="1.5" height="1.6" fill="#a8dc20"/><rect x="370.15" y="200.0" width="1.5" height="1.6" fill="#a8dc20"/><rect x="373.65" y="197.1" width="1.5" height="1.6" fill="#a8dc20"/><rect x="374.15" y="202.5" width="1.5" height="1.6" fill="#a8dc20"/><rect x="374.65" y="205.4" width="1.5" height="1.6" fill="#a8dc20"/><rect x="375.15" y="214.8" width="1.5" height="1.6" fill="#a8dc20"/><rect x="375.65" y="195.5" width="1.5" height="1.6" fill="#a8dc20"/><rect x="377.65" y="215.2" width="1.5" height="1.6" fill="#a8dc20"/><rect x="383.15" y="209.8" width="1.5" height="1.6" fill="#a8dc20"/><rect x="389.65" y="210.4" width="1.5" height="1.6" fill="#a8dc20"/><rect x="390.15" y="215.9" width="1.5" height="1.6" fill="#a8dc20"/><rect x="390.65" y="209.0" width="1.5" height="1.6" fill="#a8dc20"/><rect x="391.15" y="208.7" width="1.5" height="1.6" fill="#a8dc20"/><rect x="392.65" y="209.0" width="1.5" height="1.6" fill="#a8dc20"/><rect x="396.15" y="210.6" width="1.5" height="1.6" fill="#a8dc20"/><rect x="397.65" y="208.6" width="1.5" height="1.6" fill="#a8dc20"/><rect x="398.65" y="217.4" width="1.5" height="1.6" fill="#a8dc20"/><rect x="401.15" y="210.3" width="1.5" height="1.6" fill="#a8dc20"/><rect x="404.65" y="207.3" width="1.5" height="1.6" fill="#a8dc20"/><rect x="407.65" y="215.9" width="1.5" height="1.6" fill="#a8dc20"/><rect x="408.65" y="211.0" width="1.5" height="1.6" fill="#a8dc20"/><rect x="410.15" y="213.6" width="1.5" height="1.6" fill="#a8dc20"/><rect x="410.65" y="214.1" width="1.5" height="1.6" fill="#a8dc20"/><rect x="414.15" y="210.2" width="1.5" height="1.6" fill="#a8dc20"/><rect x="418.65" y="216.8" width="1.5" height="1.6" fill="#a8dc20"/><rect x="419.65" y="217.1" width="1.5" height="1.6" fill="#a8dc20"/><rect x="421.15" y="206.3" width="1.5" height="1.6" fill="#a8dc20"/><rect x="421.65" y="209.3" width="1.5" height="1.6" fill="#a8dc20"/><rect x="426.15" y="208.0" width="1.5" height="1.6" fill="#a8dc20"/><rect x="427.65" y="217.1" width="1.5" height="1.6" fill="#a8dc20"/><rect x="428.65" y="216.4" width="1.5" height="1.6" fill="#a8dc20"/><rect x="431.15" y="215.4" width="1.5" height="1.6" fill="#a8dc20"/><rect x="431.65" y="214.8" width="1.5" height="1.6" fill="#a8dc20"/><rect x="435.65" y="207.3" width="1.5" height="1.6" fill="#a8dc20"/><rect x="436.15" y="210.0" width="1.5" height="1.6" fill="#a8dc20"/><rect x="438.65" y="214.0" width="1.5" height="1.6" fill="#a8dc20"/><rect x="439.65" y="212.4" width="1.5" height="1.6" fill="#a8dc20"/><rect x="442.65" y="200.8" width="1.5" height="1.6" fill="#a8dc20"/><rect x="445.15" y="212.8" width="1.5" height="1.6" fill="#a8dc20"/><rect x="447.65" y="198.0" width="1.5" height="1.6" fill="#a8dc20"/><rect x="449.15" y="214.2" width="1.5" height="1.6" fill="#a8dc20"/><rect x="450.15" y="215.6" width="1.5" height="1.6" fill="#a8dc20"/><rect x="453.15" y="216.3" width="1.5" height="1.6" fill="#a8dc20"/><rect x="455.65" y="208.7" width="1.5" height="1.6" fill="#a8dc20"/><rect x="456.15" y="194.0" width="1.5" height="1.6" fill="#a8dc20"/><rect x="459.65" y="210.6" width="1.5" height="1.6" fill="#a8dc20"/><rect x="460.15" y="198.7" width="1.5" height="1.6" fill="#a8dc20"/><rect x="461.65" y="206.4" width="1.5" height="1.6" fill="#a8dc20"/><rect x="462.15" y="212.5" width="1.5" height="1.6" fill="#a8dc20"/><rect x="466.15" y="217.7" width="1.5" height="1.6" fill="#a8dc20"/><rect x="466.65" y="210.4" width="1.5" height="1.6" fill="#a8dc20"/><rect x="468.15" y="208.2" width="1.5" height="1.6" fill="#a8dc20"/><rect x="469.15" y="212.8" width="1.5" height="1.6" fill="#a8dc20"/><rect x="469.65" y="214.6" width="1.5" height="1.6" fill="#a8dc20"/><rect x="470.15" y="216.1" width="1.5" height="1.6" fill="#a8dc20"/><rect x="473.15" y="207.8" width="1.5" height="1.6" fill="#a8dc20"/><rect x="474.15" y="211.7" width="1.5" height="1.6" fill="#a8dc20"/><rect x="476.65" y="208.5" width="1.5" height="1.6" fill="#a8dc20"/><rect x="477.15" y="209.9" width="1.5" height="1.6" fill="#a8dc20"/><rect x="479.15" y="208.8" width="1.5" height="1.6" fill="#a8dc20"/><rect x="479.65" y="212.2" width="1.5" height="1.6" fill="#a8dc20"/><rect x="485.15" y="199.1" width="1.5" height="1.6" fill="#a8dc20"/><rect x="488.65" y="212.7" width="1.5" height="1.6" fill="#a8dc20"/><rect x="489.15" y="212.2" width="1.5" height="1.6" fill="#a8dc20"/><rect x="489.65" y="213.2" width="1.5" height="1.6" fill="#a8dc20"/><rect x="490.15" y="213.5" width="1.5" height="1.6" fill="#a8dc20"/><rect x="491.15" y="216.2" width="1.5" height="1.6" fill="#a8dc20"/><rect x="491.65" y="213.4" width="1.5" height="1.6" fill="#a8dc20"/><rect x="492.65" y="210.0" width="1.5" height="1.6" fill="#a8dc20"/><rect x="498.15" y="213.3" width="1.5" height="1.6" fill="#a8dc20"/><rect x="499.15" y="205.1" width="1.5" height="1.6" fill="#a8dc20"/><rect x="503.15" y="215.4" width="1.5" height="1.6" fill="#a8dc20"/><rect x="512.15" y="217.2" width="1.5" height="1.6" fill="#a8dc20"/><rect x="512.65" y="211.0" width="1.5" height="1.6" fill="#a8dc20"/><rect x="514.15" y="213.5" width="1.5" height="1.6" fill="#a8dc20"/><rect x="516.15" y="213.3" width="1.5" height="1.6" fill="#a8dc20"/><rect x="517.15" y="211.4" width="1.5" height="1.6" fill="#a8dc20"/><rect x="518.15" y="215.1" width="1.5" height="1.6" fill="#a8dc20"/><rect x="520.65" y="214.9" width="1.5" height="1.6" fill="#a8dc20"/><rect x="522.65" y="212.6" width="1.5" height="1.6" fill="#a8dc20"/><rect x="525.65" y="207.8" width="1.5" height="1.6" fill="#a8dc20"/><rect x="526.65" y="202.1" width="1.5" height="1.6" fill="#a8dc20"/><rect x="529.65" y="214.9" width="1.5" height="1.6" fill="#a8dc20"/><rect x="533.15" y="204.3" width="1.5" height="1.6" fill="#a8dc20"/><rect x="533.65" y="198.0" width="1.5" height="1.6" fill="#a8dc20"/><rect x="534.65" y="216.3" width="1.5" height="1.6" fill="#a8dc20"/><rect x="537.15" y="214.9" width="1.5" height="1.6" fill="#a8dc20"/><rect x="537.65" y="205.3" width="1.5" height="1.6" fill="#a8dc20"/><rect x="539.15" y="215.5" width="1.5" height="1.6" fill="#a8dc20"/><rect x="543.15" y="216.4" width="1.5" height="1.6" fill="#a8dc20"/><rect x="546.65" y="211.8" width="1.5" height="1.6" fill="#a8dc20"/><rect x="549.65" y="205.2" width="1.5" height="1.6" fill="#a8dc20"/><rect x="552.65" y="215.1" width="1.5" height="1.6" fill="#a8dc20"/><rect x="557.65" y="210.6" width="1.5" height="1.6" fill="#a8dc20"/><rect x="561.15" y="203.3" width="1.5" height="1.6" fill="#a8dc20"/><rect x="563.65" y="209.6" width="1.5" height="1.6" fill="#a8dc20"/><rect x="565.15" y="197.6" width="1.5" height="1.6" fill="#a8dc20"/><rect x="566.15" y="217.7" width="1.5" height="1.6" fill="#a8dc20"/><rect x="568.65" y="195.6" width="1.5" height="1.6" fill="#a8dc20"/><rect x="569.15" y="213.2" width="1.5" height="1.6" fill="#a8dc20"/><rect x="569.65" y="197.2" width="1.5" height="1.6" fill="#a8dc20"/><rect x="570.65" y="210.5" width="1.5" height="1.6" fill="#a8dc20"/><rect x="573.15" y="206.3" width="1.5" height="1.6" fill="#a8dc20"/><rect x="574.15" y="215.4" width="1.5" height="1.6" fill="#a8dc20"/><rect x="576.15" y="211.1" width="1.5" height="1.6" fill="#a8dc20"/><rect x="576.65" y="212.4" width="1.5" height="1.6" fill="#a8dc20"/><rect x="579.65" y="208.1" width="1.5" height="1.6" fill="#a8dc20"/><rect x="582.15" y="208.3" width="1.5" height="1.6" fill="#a8dc20"/><rect x="585.15" y="211.5" width="1.5" height="1.6" fill="#a8dc20"/><rect x="587.65" y="208.1" width="1.5" height="1.6" fill="#a8dc20"/><rect x="589.15" y="211.4" width="1.5" height="1.6" fill="#a8dc20"/><rect x="589.65" y="214.6" width="1.5" height="1.6" fill="#a8dc20"/><rect x="590.15" y="213.8" width="1.5" height="1.6" fill="#a8dc20"/><rect x="590.65" y="216.8" width="1.5" height="1.6" fill="#a8dc20"/><rect x="591.65" y="213.4" width="1.5" height="1.6" fill="#a8dc20"/><rect x="593.15" y="213.9" width="1.5" height="1.6" fill="#a8dc20"/><rect x="593.65" y="191.0" width="1.5" height="1.6" fill="#a8dc20"/><rect x="600.65" y="211.3" width="1.5" height="1.6" fill="#a8dc20"/><rect x="601.65" y="209.1" width="1.5" height="1.6" fill="#a8dc20"/><rect x="603.15" y="207.8" width="1.5" height="1.6" fill="#a8dc20"/><rect x="603.65" y="216.8" width="1.5" height="1.6" fill="#a8dc20"/><rect x="604.15" y="210.9" width="1.5" height="1.6" fill="#a8dc20"/><rect x="605.65" y="214.4" width="1.5" height="1.6" fill="#a8dc20"/><rect x="608.65" y="213.1" width="1.5" height="1.6" fill="#a8dc20"/><rect x="609.15" y="215.8" width="1.5" height="1.6" fill="#a8dc20"/><rect x="610.15" y="216.0" width="1.5" height="1.6" fill="#a8dc20"/><rect x="610.65" y="210.6" width="1.5" height="1.6" fill="#a8dc20"/><rect x="612.65" y="203.2" width="1.5" height="1.6" fill="#a8dc20"/><rect x="613.65" y="215.2" width="1.5" height="1.6" fill="#a8dc20"/><rect x="614.15" y="201.5" width="1.5" height="1.6" fill="#a8dc20"/><rect x="617.15" y="212.7" width="1.5" height="1.6" fill="#a8dc20"/><rect x="617.65" y="200.2" width="1.5" height="1.6" fill="#a8dc20"/><rect x="620.15" y="212.9" width="1.5" height="1.6" fill="#a8dc20"/><rect x="624.65" y="206.6" width="1.5" height="1.6" fill="#a8dc20"/><rect x="625.15" y="212.7" width="1.5" height="1.6" fill="#a8dc20"/><rect x="628.65" y="212.4" width="1.5" height="1.6" fill="#a8dc20"/><rect x="629.15" y="208.4" width="1.5" height="1.6" fill="#a8dc20"/><rect x="631.15" y="207.4" width="1.5" height="1.6" fill="#a8dc20"/><rect x="632.65" y="209.5" width="1.5" height="1.6" fill="#a8dc20"/><rect x="633.65" y="210.6" width="1.5" height="1.6" fill="#a8dc20"/><rect x="636.15" y="206.3" width="1.5" height="1.6" fill="#a8dc20"/><rect x="640.15" y="216.8" width="1.5" height="1.6" fill="#a8dc20"/><rect x="641.65" y="211.2" width="1.5" height="1.6" fill="#a8dc20"/><rect x="642.65" y="204.7" width="1.5" height="1.6" fill="#a8dc20"/><path d="M370.6 191V222" stroke="#3278d8" stroke-width="0.9"/><rect x="369.8" y="190" width="1.6" height="1.7" fill="#a8dc20"/><path d="M395.8 193V222" stroke="#3278d8" stroke-width="0.9"/><rect x="395.0" y="192" width="1.6" height="1.7" fill="#a8dc20"/><path d="M428.7 198V222" stroke="#3278d8" stroke-width="0.9"/><rect x="427.9" y="197" width="1.6" height="1.7" fill="#a8dc20"/><path d="M446.5 196V222" stroke="#3278d8" stroke-width="0.9"/><rect x="445.7" y="195" width="1.6" height="1.7" fill="#a8dc20"/><path d="M476.8 188V222" stroke="#3278d8" stroke-width="0.9"/><rect x="476.0" y="187" width="1.6" height="1.7" fill="#a8dc20"/><path d="M535.8 199V222" stroke="#3278d8" stroke-width="0.9"/><rect x="535.0" y="198" width="1.6" height="1.7" fill="#a8dc20"/><path d="M569.8 186V222" stroke="#3278d8" stroke-width="0.9"/><rect x="569.0" y="185" width="1.6" height="1.7" fill="#a8dc20"/><path d="M573 200V222" stroke="#3278d8" stroke-width="0.9"/><rect x="572.2" y="199" width="1.6" height="1.7" fill="#a8dc20"/><path d="M626.3 190V222" stroke="#3278d8" stroke-width="0.9"/><rect x="625.5" y="189" width="1.6" height="1.7" fill="#a8dc20"/><path d="M602.5 203V222" stroke="#3278d8" stroke-width="0.9"/><rect x="601.7" y="202" width="1.6" height="1.7" fill="#a8dc20"/><path d="M616.5 202V222" stroke="#3278d8" stroke-width="0.9"/><rect x="615.7" y="201" width="1.6" height="1.7" fill="#a8dc20"/><path d="M460.4 215.9v1.2M547.2 221.9v1.2M398.4 223.2v1.2M525.1 213.0v1.2M460.1 223.6v1.2M411.2 224.5v1.2M452.5 222.7v1.2M516.0 221.1v1.2M445.2 222.5v1.2M500.1 224.7v1.2M579.1 218.4v1.2M499.0 223.1v1.2M601.4 223.1v1.2M498.1 220.2v1.2M601.1 220.3v1.2M468.9 221.8v1.2M366.6 220.6v1.2M516.5 218.5v1.2M490.3 225.0v1.2M496.2 225.1v1.2M639.0 221.9v1.2M395.8 223.2v1.2M586.7 223.0v1.2M436.7 218.8v1.2M599.0 222.0v1.2M600.8 212.1v1.2M378.5 210.2v1.2M470.0 217.1v1.2M490.3 219.2v1.2M572.4 217.5v1.2M553.5 202.8v1.2M609.2 223.1v1.2M613.6 225.1v1.2M389.2 214.2v1.2M442.3 219.4v1.2M549.5 221.6v1.2M564.4 225.1v1.2M374.2 207.1v1.2M423.7 225.0v1.2M561.4 225.6v1.2M578.6 215.9v1.2M559.5 221.6v1.2M514.1 225.6v1.2M635.7 224.2v1.2M399.6 217.4v1.2M601.2 218.0v1.2M551.4 223.3v1.2M401.9 224.4v1.2M604.8 213.1v1.2M442.6 225.6v1.2M616.0 221.7v1.2M486.5 219.9v1.2M559.6 220.8v1.2M452.9 219.2v1.2M581.5 216.0v1.2M446.6 211.4v1.2M568.4 217.9v1.2M530.3 212.4v1.2M484.4 216.7v1.2M424.4 221.1v1.2M532.2 222.4v1.2M465.9 216.3v1.2M492.2 222.9v1.2M548.9 218.8v1.2M502.6 220.6v1.2M510.4 213.8v1.2M417.4 225.3v1.2M584.0 222.1v1.2M384.0 211.5v1.2M499.7 216.4v1.2M420.4 222.4v1.2M437.2 220.3v1.2M525.4 219.8v1.2M363.7 223.9v1.2M632.2 222.1v1.2M491.3 221.1v1.2M548.7 223.8v1.2M591.7 225.8v1.2M486.9 225.7v1.2M500.8 215.0v1.2M453.1 222.2v1.2M445.9 219.4v1.2M502.9 219.9v1.2M604.7 219.4v1.2M381.7 225.1v1.2M518.7 220.7v1.2M461.1 218.9v1.2M365.5 221.9v1.2M390.0 225.0v1.2M602.5 221.4v1.2M563.0 223.4v1.2M541.6 216.0v1.2M427.8 221.9v1.2M643.5 222.6v1.2M433.5 221.8v1.2M605.5 222.0v1.2M405.4 218.2v1.2M483.9 225.3v1.2M622.0 223.7v1.2M599.7 216.3v1.2M536.9 221.8v1.2M637.2 225.4v1.2M398.2 220.3v1.2M414.2 225.1v1.2M572.4 222.5v1.2M474.8 218.0v1.2M556.3 218.3v1.2M600.7 220.7v1.2M467.0 224.5v1.2M484.1 219.6v1.2M571.3 211.3v1.2M624.2 223.9v1.2M506.1 220.2v1.2M573.6 223.0v1.2M463.3 219.5v1.2M536.0 224.2v1.2M363.6 211.4v1.2M545.6 221.7v1.2M523.6 225.6v1.2M496.6 212.9v1.2M528.2 222.8v1.2M608.1 222.7v1.2M595.8 223.3v1.2M597.4 214.6v1.2M473.6 225.4v1.2M421.5 223.4v1.2M576.1 221.7v1.2M524.8 223.2v1.2M448.6 219.9v1.2M617.4 222.3v1.2M520.9 220.6v1.2M485.8 221.1v1.2M443.7 219.5v1.2M638.5 217.8v1.2M441.7 218.5v1.2M418.1 224.6v1.2M546.8 214.0v1.2M423.5 224.5v1.2M468.4 217.7v1.2M528.9 217.1v1.2M574.5 222.4v1.2M639.4 219.5v1.2M628.9 220.5v1.2M548.0 214.8v1.2M372.4 218.6v1.2M586.0 219.8v1.2M450.8 219.0v1.2M537.4 220.4v1.2M435.9 220.3v1.2M625.0 223.5v1.2M575.4 217.7v1.2M471.6 222.1v1.2M604.3 225.4v1.2M578.0 225.8v1.2M593.5 223.3v1.2M367.0 218.1v1.2M380.2 222.3v1.2M481.9 219.1v1.2M451.8 219.1v1.2M592.1 217.4v1.2M476.1 215.0v1.2M385.4 223.1v1.2M434.6 225.6v1.2M580.0 219.4v1.2M604.7 220.0v1.2M529.1 219.7v1.2M595.3 216.9v1.2M526.2 222.0v1.2M477.9 221.9v1.2M641.9 225.6v1.2M418.7 225.9v1.2M426.8 224.8v1.2M411.1 221.8v1.2M578.5 216.2v1.2M491.4 210.4v1.2M615.7 223.9v1.2M584.1 221.9v1.2M480.0 225.7v1.2M560.9 223.9v1.2M521.0 222.0v1.2M418.9 214.4v1.2M488.4 220.8v1.2M611.8 222.4v1.2M503.9 223.3v1.2M544.4 222.1v1.2M441.5 224.2v1.2M607.4 224.3v1.2M538.1 223.3v1.2M383.0 219.4v1.2M411.9 225.0v1.2M394.5 224.9v1.2M583.1 216.5v1.2M598.6 216.7v1.2M519.3 218.9v1.2M520.0 218.9v1.2M483.0 223.2v1.2M433.7 225.6v1.2M492.9 213.5v1.2M525.4 214.1v1.2M571.4 221.5v1.2M612.3 222.7v1.2M632.4 225.6v1.2M588.1 222.6v1.2M613.3 223.7v1.2M532.6 219.6v1.2M395.6 225.3v1.2M572.6 217.6v1.2M388.5 224.4v1.2M635.7 225.3v1.2M430.1 221.0v1.2M631.4 215.1v1.2M495.5 224.3v1.2M597.3 220.7v1.2M394.1 219.1v1.2M381.0 218.8v1.2M627.7 225.0v1.2M436.3 223.7v1.2M371.3 223.6v1.2M641.0 216.0v1.2M540.8 218.7v1.2M564.1 215.2v1.2M471.5 226.0v1.2M517.1 222.2v1.2M420.9 225.6v1.2M526.1 220.3v1.2M516.9 223.4v1.2M435.5 223.3v1.2M556.8 223.7v1.2M634.4 216.5v1.2M472.8 217.1v1.2M628.6 223.8v1.2M511.3 225.8v1.2M418.4 216.2v1.2M508.9 219.7v1.2M548.8 222.5v1.2M618.7 222.4v1.2M403.9 214.5v1.2M560.9 214.7v1.2M364.3 213.9v1.2M412.0 219.8v1.2M561.6 225.0v1.2M529.6 220.4v1.2M521.3 221.8v1.2M640.0 214.8v1.2M448.8 223.3v1.2M563.3 216.6v1.2M610.4 218.5v1.2M386.0 215.7v1.2M436.5 224.1v1.2M493.9 222.1v1.2M598.7 223.2v1.2M563.1 223.2v1.2M394.0 222.9v1.2M470.0 215.3v1.2M447.3 225.7v1.2M570.5 220.2v1.2M584.6 223.2v1.2M384.3 221.8v1.2M375.6 223.1v1.2M497.8 217.1v1.2M468.9 224.8v1.2M624.4 225.2v1.2M364.9 221.9v1.2M633.1 223.4v1.2M413.5 224.4v1.2M560.1 223.1v1.2M553.5 220.4v1.2M462.5 215.7v1.2M586.1 212.8v1.2M539.9 222.1v1.2M543.3 222.0v1.2M545.7 219.5v1.2M574.5 221.2v1.2M421.0 221.9v1.2M373.7 204.4v1.2M434.3 223.3v1.2M593.1 225.8v1.2M526.6 217.7v1.2M365.7 221.6v1.2M601.9 220.8v1.2M615.5 210.3v1.2M401.9 222.9v1.2M576.2 223.5v1.2M390.4 222.8v1.2M604.6 224.4v1.2M432.9 222.9v1.2M518.4 219.7v1.2M479.5 220.4v1.2M497.1 224.1v1.2M605.5 225.8v1.2M598.3 221.8v1.2M452.3 214.9v1.2M468.2 217.9v1.2M457.0 213.3v1.2M487.8 218.1v1.2M459.6 223.6v1.2M608.8 221.2v1.2M400.3 217.3v1.2M509.6 222.9v1.2M504.6 222.6v1.2M594.0 223.4v1.2M615.3 220.9v1.2M619.6 223.9v1.2M420.2 221.7v1.2M596.9 217.7v1.2M524.2 212.1v1.2M407.4 214.5v1.2M460.0 212.5v1.2M575.7 225.0v1.2M384.9 221.3v1.2M366.6 220.0v1.2M585.0 224.1v1.2M491.0 225.1v1.2M616.6 223.0v1.2M582.2 221.0v1.2M487.4 213.2v1.2M604.5 225.8v1.2M562.0 222.4v1.2M525.9 216.7v1.2M499.1 220.9v1.2M419.1 223.7v1.2M619.6 223.8v1.2M637.6 223.7v1.2M506.9 223.3v1.2M405.4 220.7v1.2M456.9 222.9v1.2M619.6 221.1v1.2M449.0 222.3v1.2M488.1 223.5v1.2M399.8 221.2v1.2M466.0 219.1v1.2M514.4 224.8v1.2M453.9 219.5v1.2M615.7 219.4v1.2M603.4 222.4v1.2M524.1 225.2v1.2M394.0 202.3v1.2M402.0 219.0v1.2M604.6 225.2v1.2M442.8 223.3v1.2M385.4 212.6v1.2M368.5 224.3v1.2M511.6 223.6v1.2M404.2 215.7v1.2M490.7 218.4v1.2M440.3 218.6v1.2M379.6 217.2v1.2M430.9 220.5v1.2M440.4 220.5v1.2M548.3 225.5v1.2M462.3 209.8v1.2M425.8 223.0v1.2M424.1 224.4v1.2M611.3 219.0v1.2M632.9 222.5v1.2M634.8 225.5v1.2M455.5 220.3v1.2M505.3 225.7v1.2M423.2 220.0v1.2M431.3 226.0v1.2M488.6 217.2v1.2M496.0 218.5v1.2M370.0 218.3v1.2M600.2 219.8v1.2M632.6 224.6v1.2M575.9 225.0v1.2M486.3 224.8v1.2M487.0 223.9v1.2M525.4 223.9v1.2M435.1 225.4v1.2M445.8 217.4v1.2M595.4 223.4v1.2M442.1 225.1v1.2M378.4 209.9v1.2M627.5 219.8v1.2M546.6 223.3v1.2M420.6 222.0v1.2M468.2 225.1v1.2M500.9 224.9v1.2M483.0 219.6v1.2M475.0 215.5v1.2M532.7 225.0v1.2M541.8 218.9v1.2M378.3 216.4v1.2M415.1 225.3v1.2M433.4 223.3v1.2M417.6 220.6v1.2M443.5 219.1v1.2M462.1 225.0v1.2M454.1 224.1v1.2M531.9 218.5v1.2M388.6 220.7v1.2M638.2 223.0v1.2M626.8 219.1v1.2M460.5 217.4v1.2M394.8 215.3v1.2M584.4 215.8v1.2M542.2 217.8v1.2M553.3 224.9v1.2M546.7 217.9v1.2M449.0 214.8v1.2M421.9 217.7v1.2M462.7 223.2v1.2M605.1 219.6v1.2M513.8 217.9v1.2M558.7 221.9v1.2M399.3 214.6v1.2M617.1 221.9v1.2M417.0 222.3v1.2M531.9 216.2v1.2M391.1 223.5v1.2M609.2 218.8v1.2M570.8 222.2v1.2M533.7 220.9v1.2M494.3 224.2v1.2M372.4 225.5v1.2M397.3 213.4v1.2M387.7 221.8v1.2M512.3 220.9v1.2M528.4 224.9v1.2M579.7 219.9v1.2M363.8 222.5v1.2M539.1 221.4v1.2M448.8 226.0v1.2M532.6 219.7v1.2M453.6 219.4v1.2M420.0 216.2v1.2M575.8 220.7v1.2M417.1 224.3v1.2M624.9 222.6v1.2M581.2 225.2v1.2M624.6 225.0v1.2M447.0 213.6v1.2M584.5 218.5v1.2M398.6 225.6v1.2M546.7 224.3v1.2M376.2 219.6v1.2M389.0 224.5v1.2M572.3 198.7v1.2M615.0 226.0v1.2M471.9 222.4v1.2M630.2 214.0v1.2M593.7 209.6v1.2M563.1 224.7v1.2M484.0 211.6v1.2M373.0 225.5v1.2M440.1 225.0v1.2M529.1 225.2v1.2M390.2 220.6v1.2M464.1 216.3v1.2M628.2 225.1v1.2M383.4 225.9v1.2M624.6 223.3v1.2M540.9 219.4v1.2M364.3 215.1v1.2M617.1 221.0v1.2M476.9 218.0v1.2M572.8 223.9v1.2M433.7 221.0v1.2M567.0 221.7v1.2M463.3 224.8v1.2M523.0 219.9v1.2M600.1 219.3v1.2M543.2 224.2v1.2M607.6 220.0v1.2M627.6 224.6v1.2M387.7 225.7v1.2M576.1 217.7v1.2M506.1 218.3v1.2M515.2 219.4v1.2M644.2 220.2v1.2M421.3 216.3v1.2M546.0 217.9v1.2M462.0 225.1v1.2M623.9 215.1v1.2M609.9 216.0v1.2M591.3 219.7v1.2M468.9 225.8v1.2M419.9 219.6v1.2M363.7 224.1v1.2M375.6 212.6v1.2M381.0 223.7v1.2M568.9 221.0v1.2M416.9 218.9v1.2M461.5 221.1v1.2M603.4 218.1v1.2M550.5 223.0v1.2M477.1 219.7v1.2M574.5 208.0v1.2M516.7 217.0v1.2M446.4 225.8v1.2M384.0 209.9v1.2M391.3 221.7v1.2M638.9 209.7v1.2M579.5 207.8v1.2M440.0 222.8v1.2M638.5 212.8v1.2M589.5 218.9v1.2M583.1 221.7v1.2M594.4 223.2v1.2M595.7 221.3v1.2M631.2 225.2v1.2M416.5 225.6v1.2M546.3 213.1v1.2M543.7 219.4v1.2M559.9 221.2v1.2M562.9 218.9v1.2M620.8 221.6v1.2M504.4 223.1v1.2M638.3 223.9v1.2M414.6 224.7v1.2M568.9 220.3v1.2M595.7 216.7v1.2M590.4 216.3v1.2M587.6 223.5v1.2M560.8 217.7v1.2M535.8 217.0v1.2M606.6 222.6v1.2M443.6 225.1v1.2M625.3 222.1v1.2M608.6 218.8v1.2M555.9 224.1v1.2M506.1 218.9v1.2M385.2 224.6v1.2M514.3 222.4v1.2M511.3 217.7v1.2M392.1 221.6v1.2M471.8 218.5v1.2M404.2 224.8v1.2M627.5 218.0v1.2M487.7 216.7v1.2M455.4 222.7v1.2M508.1 221.6v1.2M543.0 215.9v1.2M378.0 225.5v1.2M491.5 213.8v1.2M467.1 221.9v1.2M399.6 224.7v1.2M414.2 215.1v1.2M613.9 224.9v1.2M558.3 215.9v1.2M431.6 216.9v1.2M439.1 224.9v1.2M512.9 214.6v1.2M443.3 213.6v1.2M412.4 217.2v1.2M500.3 225.6v1.2M619.7 223.5v1.2M495.9 218.6v1.2M419.2 219.2v1.2M468.9 223.9v1.2M580.6 207.7v1.2M424.8 224.5v1.2M468.0 223.3v1.2M388.7 225.0v1.2M381.8 216.8v1.2M485.1 224.1v1.2M391.2 209.2v1.2M556.6 212.2v1.2M619.6 220.5v1.2M413.9 223.7v1.2M448.8 221.9v1.2M376.9 219.7v1.2M375.0 213.5v1.2M592.2 218.3v1.2M462.3 217.1v1.2M584.5 223.5v1.2M448.8 216.8v1.2M599.6 225.3v1.2M461.6 218.3v1.2M611.6 225.8v1.2M412.7 223.6v1.2M439.7 223.5v1.2M538.9 220.3v1.2M528.3 221.7v1.2M472.5 225.5v1.2M441.9 212.9v1.2M577.1 225.6v1.2M529.5 217.3v1.2M522.9 225.4v1.2M439.6 215.8v1.2M546.0 224.2v1.2M615.0 218.1v1.2M451.8 216.6v1.2M532.9 223.3v1.2M415.2 224.4v1.2M513.2 223.2v1.2M490.2 221.7v1.2M639.8 213.9v1.2M428.0 219.8v1.2M505.1 222.1v1.2M375.0 222.3v1.2M441.5 222.3v1.2M449.2 225.4v1.2M444.5 220.3v1.2M513.1 219.0v1.2M625.3 217.4v1.2M625.1 218.8v1.2M569.2 217.4v1.2M567.0 221.9v1.2M576.3 223.0v1.2M547.7 220.3v1.2M382.5 216.5v1.2M583.5 211.7v1.2M395.6 215.2v1.2M557.6 225.3v1.2M534.8 222.5v1.2M416.8 225.7v1.2M442.5 224.4v1.2M602.0 215.2v1.2M635.9 220.0v1.2M406.1 218.0v1.2M545.7 214.7v1.2M457.3 222.2v1.2M468.1 219.4v1.2M436.7 221.7v1.2M436.1 217.7v1.2M412.0 215.8v1.2M550.3 225.9v1.2M543.4 217.3v1.2M487.7 219.4v1.2M572.9 222.2v1.2M410.5 220.9v1.2M469.5 223.7v1.2M448.9 214.0v1.2M515.6 218.2v1.2M489.6 222.0v1.2M579.1 224.5v1.2M634.4 224.4v1.2M411.8 207.6v1.2M425.9 221.8v1.2M445.4 216.6v1.2M575.9 212.6v1.2M634.7 223.8v1.2M580.8 219.9v1.2M463.6 222.3v1.2M560.1 219.7v1.2M452.4 216.8v1.2M586.5 222.9v1.2M495.5 218.7v1.2M492.9 222.0v1.2M568.9 222.1v1.2M374.4 222.9v1.2M479.5 220.9v1.2M542.1 218.8v1.2M626.1 223.6v1.2M425.9 221.1v1.2M514.4 224.9v1.2M385.8 215.8v1.2M473.3 225.1v1.2M405.5 221.1v1.2M573.6 220.0v1.2M535.6 212.9v1.2M613.0 217.6v1.2M436.0 224.5v1.2M379.9 220.6v1.2M386.4 224.5v1.2M625.3 217.4v1.2M621.5 223.9v1.2M569.0 225.6v1.2M547.8 220.7v1.2M554.5 225.2v1.2M506.4 221.1v1.2M380.3 222.0v1.2M406.0 217.0v1.2M526.2 223.7v1.2M484.2 224.5v1.2M585.8 215.8v1.2M429.1 223.1v1.2M643.7 221.9v1.2M366.7 217.8v1.2M463.4 218.1v1.2M413.3 225.9v1.2M432.2 224.8v1.2M443.1 222.4v1.2M505.0 220.5v1.2M629.9 219.7v1.2M566.0 222.5v1.2M549.0 225.1v1.2M431.2 219.0v1.2M566.2 222.4v1.2M581.4 223.9v1.2M591.1 223.8v1.2M593.4 224.7v1.2M370.4 225.3v1.2M588.4 223.9v1.2M553.8 220.1v1.2M590.3 215.2v1.2M638.0 225.5v1.2M607.5 220.0v1.2M533.8 221.3v1.2M395.6 223.4v1.2M477.3 216.7v1.2M377.5 222.5v1.2M622.0 219.7v1.2M495.9 223.2v1.2M434.7 222.9v1.2M430.0 223.3v1.2M467.0 213.9v1.2M453.4 222.5v1.2M610.2 218.6v1.2M558.8 222.5v1.2M474.4 219.9v1.2M490.5 210.4v1.2M522.8 224.8v1.2M502.1 214.5v1.2M534.8 220.4v1.2M479.2 222.4v1.2M562.5 219.1v1.2M439.0 225.2v1.2M502.8 218.3v1.2M365.6 219.5v1.2M562.6 223.4v1.2M470.7 221.0v1.2M418.4 225.5v1.2M578.1 223.1v1.2M444.6 206.6v1.2M414.1 218.5v1.2M508.3 225.1v1.2M582.8 221.9v1.2M378.5 217.1v1.2M623.8 225.9v1.2M412.3 221.2v1.2M528.6 222.8v1.2M435.7 221.3v1.2M366.7 216.3v1.2M397.2 220.1v1.2M431.2 225.9v1.2M402.0 215.6v1.2M640.8 223.9v1.2M453.7 214.0v1.2M634.8 217.3v1.2M639.3 222.7v1.2M597.8 224.4v1.2M422.3 222.9v1.2M397.1 219.7v1.2M497.3 220.6v1.2M467.1 218.5v1.2M567.1 225.8v1.2M480.2 217.6v1.2M607.2 215.4v1.2M574.0 222.1v1.2M599.4 219.7v1.2M463.6 221.5v1.2M595.0 224.0v1.2M457.2 216.7v1.2M388.6 215.6v1.2M365.5 219.0v1.2M395.2 222.6v1.2M473.7 224.3v1.2M622.3 212.0v1.2M586.6 220.4v1.2M489.3 223.2v1.2M371.5 224.8v1.2M582.5 220.6v1.2M553.2 225.4v1.2M489.9 220.1v1.2M418.3 219.2v1.2M427.6 225.5v1.2M435.0 223.5v1.2M478.9 215.5v1.2M370.6 225.5v1.2M391.8 220.5v1.2M574.8 221.0v1.2M516.5 223.2v1.2M612.7 219.2v1.2M407.4 225.3v1.2M371.4 214.9v1.2M414.6 218.5v1.2M544.7 222.2v1.2M469.2 215.4v1.2M558.9 223.3v1.2M523.3 225.4v1.2M547.2 224.3v1.2M439.3 225.5v1.2M566.2 217.8v1.2M604.6 224.9v1.2M563.0 224.9v1.2M600.8 218.5v1.2M499.0 215.6v1.2M405.2 225.6v1.2M492.7 217.7v1.2M557.9 224.9v1.2M439.7 218.7v1.2M392.6 224.7v1.2M584.4 217.8v1.2M478.8 223.9v1.2M467.3 219.6v1.2M439.8 224.1v1.2M629.7 223.0v1.2M548.5 222.6v1.2M365.1 220.4v1.2M593.5 219.3v1.2M448.6 207.8v1.2M366.8 219.8v1.2M481.0 206.8v1.2M463.6 224.4v1.2M431.5 224.6v1.2M404.4 219.8v1.2M616.0 214.2v1.2M441.2 225.1v1.2M550.6 222.0v1.2M631.8 223.5v1.2M443.5 222.7v1.2M493.7 210.8v1.2M624.9 220.3v1.2M623.0 221.6v1.2M532.6 222.5v1.2M513.7 224.8v1.2M458.9 212.7v1.2M455.1 220.9v1.2M617.3 222.9v1.2M482.4 222.9v1.2M595.5 218.9v1.2M434.2 221.3v1.2M511.7 225.5v1.2M365.7 219.1v1.2M368.8 214.2v1.2M432.0 221.4v1.2M536.3 214.2v1.2M535.6 222.9v1.2M565.7 218.7v1.2M592.5 223.0v1.2M452.9 222.6v1.2M621.0 224.4v1.2M441.5 218.0v1.2M399.9 222.7v1.2M483.3 225.3v1.2M482.0 221.3v1.2M625.1 216.8v1.2M373.9 214.2v1.2M636.6 222.6v1.2M640.2 224.6v1.2M398.1 224.3v1.2M385.5 225.8v1.2M496.3 219.3v1.2M592.9 220.5v1.2M394.0 225.1v1.2M631.5 220.3v1.2M539.2 224.7v1.2M620.1 222.5v1.2M444.8 224.1v1.2M583.0 219.2v1.2M454.2 215.6v1.2M432.9 224.4v1.2M396.9 217.1v1.2M553.9 220.3v1.2M423.1 219.2v1.2M561.0 215.1v1.2M415.0 207.7v1.2M562.7 220.6v1.2M440.3 225.5v1.2M540.4 217.4v1.2M464.3 222.5v1.2M471.4 220.3v1.2M454.6 224.7v1.2M445.4 212.1v1.2M384.6 225.8v1.2M463.5 213.7v1.2M366.6 221.6v1.2M382.5 218.9v1.2M573.3 210.4v1.2M597.9 225.4v1.2M594.7 221.2v1.2M590.6 221.6v1.2M502.5 223.4v1.2M539.1 222.3v1.2M384.3 222.9v1.2M523.4 222.9v1.2M599.9 219.7v1.2M483.0 214.7v1.2M383.3 219.3v1.2M606.2 225.4v1.2M478.6 218.4v1.2M516.7 223.1v1.2M582.4 222.5v1.2M512.9 223.9v1.2M390.1 223.3v1.2M465.8 222.5v1.2M529.2 218.5v1.2M586.0 214.3v1.2M457.0 214.5v1.2M506.9 221.4v1.2M542.1 221.6v1.2M529.8 218.8v1.2M616.0 218.2v1.2M423.7 216.6v1.2M445.1 224.2v1.2M390.4 209.5v1.2M444.3 215.3v1.2M549.2 224.0v1.2M397.7 217.7v1.2M403.7 219.4v1.2M397.8 225.9v1.2M385.9 225.8v1.2M416.3 222.9v1.2M484.1 220.8v1.2M515.4 224.6v1.2M417.9 224.8v1.2M476.4 223.8v1.2" stroke="#9cd810" stroke-width="1" fill="none"/><path d="M485.7 226.5v1M523.2 225.1v1M380.7 226.8v1M619.2 225.9v1M535.7 227.9v1M428.1 225.1v1M641.5 226.6v1M523.1 226.7v1M498.6 226.2v1M580.6 226.8v1M508.5 222.7v1M625.9 224.4v1M631.7 225.4v1M585.3 221.8v1M580.0 227.0v1M446.0 223.2v1M468.5 224.5v1M462.0 226.6v1M437.0 227.7v1M640.5 227.9v1M365.2 221.7v1M449.9 225.0v1M628.3 227.7v1M632.4 227.4v1M621.8 226.2v1M586.6 226.8v1M366.3 227.9v1M556.8 226.4v1M457.1 224.4v1M441.0 225.5v1M535.4 225.4v1M479.8 226.7v1M549.0 225.9v1M626.4 225.6v1M544.9 222.5v1M428.6 223.6v1M405.3 223.0v1M396.9 222.6v1M469.9 224.5v1M363.9 227.2v1M496.8 223.8v1M404.9 224.9v1M440.4 223.6v1M453.0 228.0v1M534.7 227.3v1M440.5 224.5v1M453.5 222.3v1M443.8 225.4v1M376.8 225.0v1M472.9 227.3v1M597.6 226.4v1M559.0 226.6v1M567.7 227.9v1M470.1 224.3v1M430.9 224.6v1M574.6 225.3v1M586.8 226.2v1M456.1 227.4v1M535.7 227.2v1M440.4 227.4v1M580.6 227.1v1M441.9 223.3v1M593.2 222.3v1M426.5 223.4v1M601.1 226.3v1M618.4 226.6v1M615.3 224.9v1M445.1 227.2v1M519.7 227.4v1M449.7 227.5v1M475.2 227.8v1M563.4 222.8v1M546.0 223.9v1M608.4 221.2v1M532.7 226.6v1M475.5 225.6v1M435.1 227.5v1M509.4 224.8v1M387.5 226.7v1M638.9 226.0v1M461.4 224.5v1M519.5 226.4v1M532.9 219.9v1M626.7 225.4v1M458.4 225.1v1M634.5 226.3v1M579.1 226.2v1M430.5 224.9v1M493.9 226.7v1M491.2 227.7v1" stroke="#20c8c0" stroke-width="0.8" fill="none"/><path d="M363.6 252.41L364.6 251.84L365.6 252.27L366.6 251.56L367.6 251.95L368.6 252.44L369.6 253.19L370.6 252.43L371.6 251.69L372.6 251.81L373.6 252.03L374.6 252.74L375.6 252.18L376.6 252.33L377.6 252.06L378.6 251.21L379.6 252.44L380.6 252.91L381.6 252.24L382.6 252.14L383.6 253.14L384.6 252.74L385.6 251.23L386.6 252.31L387.6 252.05L388.6 251.90L389.6 251.71L390.6 252.20L391.6 252.68L392.6 251.77L393.6 252.45L394.6 251.23L395.6 253.13L396.6 252.52L397.6 253.47L398.6 252.93L399.6 253.09L400.6 251.92L401.6 252.64L402.6 252.16L403.6 252.51L404.6 252.58L405.6 253.04L406.6 252.87L407.6 253.50L408.6 252.23L409.6 251.80L410.6 252.42L411.6 252.24L412.6 252.78L413.6 252.58L414.6 253.05L415.6 252.16L416.6 253.07L417.6 252.52L418.6 252.01L419.6 253.14L420.6 252.96L421.6 252.15L422.6 252.13L423.6 252.70L424.6 252.74L425.6 253.86L426.6 253.16L427.6 252.35L428.6 253.40L429.6 253.55L430.6 251.81L431.6 252.91L432.6 252.52L433.6 252.83L434.6 252.72L435.6 252.47L436.6 253.05L437.6 252.62L438.6 252.73L439.6 252.80L440.6 252.92L441.6 253.55L442.6 253.00L443.6 252.93L444.6 252.87L445.6 252.83L446.6 252.41L447.6 252.77L448.6 252.83L449.6 251.99L450.6 251.56L451.6 252.79L452.6 253.30L453.6 252.75L454.6 252.98L455.6 252.01L456.6 253.23L457.6 253.75L458.6 253.67L459.6 253.05L460.6 253.54L461.6 252.43L462.6 252.62L463.6 252.12L464.6 252.67L465.6 253.04L466.6 252.56L467.6 253.23L468.6 253.34L469.6 251.87L470.6 253.40L471.6 252.83L472.6 253.86L473.6 252.19L474.6 253.62L475.6 253.03L476.6 253.13L477.6 253.07L478.6 252.14L479.6 253.25L480.6 253.16L481.6 253.40L482.6 252.28L483.6 253.04L484.6 253.21L485.6 253.21L486.6 253.46L487.6 253.02L488.6 253.33L489.6 252.96L490.6 253.01L491.6 252.20L492.6 253.63L493.6 252.23L494.6 253.45L495.6 253.19L496.6 253.40L497.6 252.32L498.6 253.10L499.6 252.90L500.6 253.31L501.6 252.55L502.6 253.19L503.6 252.32L504.6 252.61L505.6 253.56L506.6 254.30L507.6 253.24L508.6 253.59L509.6 252.47L510.6 252.50L511.6 252.33L512.6 252.66L513.6 253.20L514.6 252.11L515.6 251.78L516.6 253.72L517.6 252.33L518.6 253.30L519.6 253.47L520.6 252.93L521.6 253.76L522.6 253.69L523.6 252.62L524.6 252.57L525.6 252.78L526.6 253.27L527.6 253.46L528.6 254.27L529.6 252.94L530.6 252.60L531.6 252.40L532.6 253.10L533.6 253.20L534.6 253.19L535.6 253.10L536.6 253.54L537.6 254.57L538.6 252.75L539.6 252.91L540.6 253.18L541.6 253.15L542.6 253.39L543.6 253.12L544.6 252.94L545.6 253.38L546.6 253.21L547.6 253.87L548.6 253.31L549.6 253.32L550.6 253.17L551.6 252.67L552.6 252.80L553.6 252.79L554.6 253.09L555.6 253.04L556.6 252.98L557.6 254.21L558.6 252.91L559.6 253.88L560.6 253.18L561.6 253.38L562.6 252.58L563.6 253.40L564.6 253.78L565.6 253.27L566.6 252.67L567.6 253.37L568.6 253.19L569.6 251.98L570.6 252.74L571.6 253.39L572.6 253.25L573.6 252.22L574.6 252.38L575.6 253.08L576.6 252.66L577.6 253.88L578.6 252.18L579.6 252.63L580.6 253.08L581.6 253.34L582.6 253.63L583.6 252.60L584.6 253.44L585.6 252.28L586.6 253.22L587.6 252.63L588.6 253.65L589.6 252.58L590.6 252.87L591.6 253.33L592.6 253.48L593.6 253.38L594.6 252.94L595.6 253.60L596.6 252.14L597.6 252.20L598.6 252.41L599.6 252.84L600.6 254.00L601.6 253.21L602.6 252.23L603.6 252.95L604.6 252.70L605.6 253.80L606.6 252.20L607.6 253.09L608.6 252.22L609.6 253.57L610.6 253.62L611.6 252.66L612.6 252.29L613.6 253.14L614.6 251.69L615.6 252.95L616.6 253.70L617.6 252.82L618.6 252.95L619.6 252.76L620.6 253.58L621.6 252.45L622.6 252.89L623.6 252.75L624.6 253.19L625.6 251.78L626.6 252.09L627.6 252.06L628.6 252.42L629.6 253.01L630.6 253.02L631.6 251.97L632.6 252.80L633.6 252.60L634.6 253.51L635.6 253.20L636.6 253.44L637.6 251.78L638.6 252.45L639.6 253.15L640.6 253.39L641.6 253.21L642.6 252.78L643.6 253.57" stroke="#ffffff" stroke-width="1.5" fill="none" stroke-linejoin="round"/></svg>
<span class="t" style="top:78.36px;font-size:7.2px;color:#e4e4e4;left:363.60px;">Rng 2 dBm</span>
<span class="t" style="top:86.86px;font-size:7.2px;color:#e4e4e4;right:663.00px;">5</span>
<span class="t" style="top:95.26px;font-size:7.2px;color:#e4e4e4;right:663.00px;">%</span>
<span class="t" style="top:143.16px;font-size:7.2px;color:#e4e4e4;right:663.00px;">LinMag</span>
<span class="t" style="top:190.86px;font-size:7.2px;color:#e4e4e4;right:663.00px;">500</span>
<span class="t" style="top:200.06px;font-size:7.2px;color:#e4e4e4;right:663.00px;">m%</span>
<span class="t" style="top:208.86px;font-size:7.2px;color:#e4e4e4;right:663.00px;">/div</span>
<span class="t" style="top:255.66px;font-size:7.2px;color:#e4e4e4;right:663.00px;">0</span>
<span class="t" style="top:264.06px;font-size:7.2px;color:#e4e4e4;right:663.00px;">%</span>
<span class="t" style="top:88.86px;font-size:7.2px;color:#e4e4e4;right:381.40px;transform:scaleX(0.8994);transform-origin:100% 0;">CAL?</span>
<span class="t" style="top:274.06px;font-size:7.2px;color:#e4e4e4;left:363.60px;">Start -600  carrier</span>
<span class="t" style="top:274.06px;font-size:7.2px;color:#e4e4e4;right:380.00px;">Stop 600  carrier</span>
<span class="t" style="top:283.26px;font-size:7.2px;color:#e4e4e4;left:363.60px;">Res BW 15 kHz</span>
<span class="t" style="top:283.26px;font-size:7.2px;color:#e4e4e4;right:380.00px;">TimeLen 140  Sym</span>
<svg width="1024" height="601"><path d="M715.40 86.5V272.2" stroke="#4a4a4a" stroke-width="0.7"/><path d="M687.3 105.07H968.3" stroke="#4a4a4a" stroke-width="0.7"/><path d="M743.50 86.5V272.2" stroke="#4a4a4a" stroke-width="0.7"/><path d="M687.3 123.64H968.3" stroke="#4a4a4a" stroke-width="0.7"/><path d="M771.60 86.5V272.2" stroke="#4a4a4a" stroke-width="0.7"/><path d="M687.3 142.21H968.3" stroke="#4a4a4a" stroke-width="0.7"/><path d="M799.70 86.5V272.2" stroke="#4a4a4a" stroke-width="0.7"/><path d="M687.3 160.78H968.3" stroke="#4a4a4a" stroke-width="0.7"/><path d="M827.80 86.5V272.2" stroke="#4a4a4a" stroke-width="0.7"/><path d="M687.3 179.35H968.3" stroke="#4a4a4a" stroke-width="0.7"/><path d="M855.90 86.5V272.2" stroke="#4a4a4a" stroke-width="0.7"/><path d="M687.3 197.92H968.3" stroke="#4a4a4a" stroke-width="0.7"/><path d="M884.00 86.5V272.2" stroke="#4a4a4a" stroke-width="0.7"/><path d="M687.3 216.49H968.3" stroke="#4a4a4a" stroke-width="0.7"/><path d="M912.10 86.5V272.2" stroke="#4a4a4a" stroke-width="0.7"/><path d="M687.3 235.06H968.3" stroke="#4a4a4a" stroke-width="0.7"/><path d="M940.20 86.5V272.2" stroke="#4a4a4a" stroke-width="0.7"/><path d="M687.3 253.63H968.3" stroke="#4a4a4a" stroke-width="0.7"/><rect x="687.3" y="86.5" width="281.0" height="185.7" fill="none" stroke="#5e5e5e" stroke-width="1.3"/></svg>
<svg width="1024" height="601"><rect x="687.30" y="219.2" width="2.06" height="53.0" fill="#94d400"/><rect x="689.31" y="219.3" width="2.06" height="52.9" fill="#94d400"/><rect x="691.31" y="225.1" width="2.06" height="47.1" fill="#94d400"/><rect x="693.32" y="215.7" width="2.06" height="56.5" fill="#94d400"/><rect x="693.57" y="214.0" width="1.5" height="2.7" fill="#94d400"/><rect x="695.33" y="222.5" width="2.06" height="49.7" fill="#94d400"/><rect x="697.34" y="215.8" width="2.06" height="56.4" fill="#94d400"/><rect x="699.34" y="226.5" width="2.06" height="45.7" fill="#94d400"/><rect x="701.35" y="223.6" width="2.06" height="48.6" fill="#94d400"/><rect x="703.36" y="227.3" width="2.06" height="44.9" fill="#94d400"/><rect x="705.36" y="221.4" width="2.06" height="50.8" fill="#94d400"/><rect x="707.37" y="224.3" width="2.06" height="47.9" fill="#94d400"/><rect x="709.38" y="222.1" width="2.06" height="50.1" fill="#94d400"/><rect x="709.63" y="211.0" width="1.5" height="12.1" fill="#94d400"/><rect x="711.39" y="220.6" width="2.06" height="51.6" fill="#94d400"/><rect x="713.39" y="223.5" width="2.06" height="48.7" fill="#94d400"/><rect x="715.40" y="219.0" width="2.06" height="53.2" fill="#94d400"/><rect x="717.41" y="221.9" width="2.06" height="50.3" fill="#94d400"/><rect x="719.41" y="225.2" width="2.06" height="47.0" fill="#94d400"/><rect x="721.42" y="223.2" width="2.06" height="49.0" fill="#94d400"/><rect x="723.43" y="221.7" width="2.06" height="50.5" fill="#94d400"/><rect x="725.44" y="230.0" width="2.06" height="42.2" fill="#94d400"/><rect x="727.44" y="223.2" width="2.06" height="49.0" fill="#94d400"/><rect x="729.45" y="221.1" width="2.06" height="51.1" fill="#94d400"/><rect x="731.46" y="223.5" width="2.06" height="48.7" fill="#94d400"/><rect x="733.46" y="221.3" width="2.06" height="50.9" fill="#94d400"/><rect x="735.47" y="221.8" width="2.06" height="50.4" fill="#94d400"/><rect x="737.48" y="221.9" width="2.06" height="50.3" fill="#94d400"/><rect x="739.49" y="229.5" width="2.06" height="42.7" fill="#94d400"/><rect x="741.49" y="223.1" width="2.06" height="49.1" fill="#94d400"/><rect x="743.50" y="223.6" width="2.06" height="48.6" fill="#94d400"/><rect x="745.51" y="225.2" width="2.06" height="47.0" fill="#94d400"/><rect x="747.51" y="229.5" width="2.06" height="42.7" fill="#94d400"/><rect x="749.52" y="222.3" width="2.06" height="49.9" fill="#94d400"/><rect x="751.53" y="221.0" width="2.06" height="51.2" fill="#94d400"/><rect x="753.54" y="230.9" width="2.06" height="41.3" fill="#94d400"/><rect x="755.54" y="218.3" width="2.06" height="53.9" fill="#94d400"/><rect x="755.80" y="200.0" width="1.5" height="19.3" fill="#94d400"/><rect x="757.55" y="221.8" width="2.06" height="50.4" fill="#94d400"/><rect x="759.56" y="225.1" width="2.06" height="47.1" fill="#94d400"/><rect x="761.56" y="230.3" width="2.06" height="41.9" fill="#94d400"/><rect x="763.57" y="220.0" width="2.06" height="52.2" fill="#94d400"/><rect x="765.58" y="215.2" width="2.06" height="57.0" fill="#94d400"/><rect x="767.59" y="225.1" width="2.06" height="47.1" fill="#94d400"/><rect x="769.59" y="221.3" width="2.06" height="50.9" fill="#94d400"/><rect x="771.60" y="221.8" width="2.06" height="50.4" fill="#94d400"/><rect x="773.61" y="224.5" width="2.06" height="47.7" fill="#94d400"/><rect x="775.61" y="223.7" width="2.06" height="48.5" fill="#94d400"/><rect x="777.62" y="223.9" width="2.06" height="48.3" fill="#94d400"/><rect x="779.63" y="221.6" width="2.06" height="50.6" fill="#94d400"/><rect x="781.64" y="227.1" width="2.06" height="45.1" fill="#94d400"/><rect x="783.64" y="227.8" width="2.06" height="44.4" fill="#94d400"/><rect x="785.65" y="223.1" width="2.06" height="49.1" fill="#94d400"/><rect x="787.66" y="221.6" width="2.06" height="50.6" fill="#94d400"/><rect x="789.66" y="225.3" width="2.06" height="46.9" fill="#94d400"/><rect x="791.67" y="224.5" width="2.06" height="47.7" fill="#94d400"/><rect x="793.68" y="219.7" width="2.06" height="52.5" fill="#94d400"/><rect x="795.69" y="221.5" width="2.06" height="50.7" fill="#94d400"/><rect x="797.69" y="226.4" width="2.06" height="45.8" fill="#94d400"/><rect x="799.70" y="222.7" width="2.06" height="49.5" fill="#94d400"/><rect x="801.71" y="221.9" width="2.06" height="50.3" fill="#94d400"/><rect x="803.71" y="223.7" width="2.06" height="48.5" fill="#94d400"/><rect x="805.72" y="222.9" width="2.06" height="49.3" fill="#94d400"/><rect x="807.73" y="223.0" width="2.06" height="49.2" fill="#94d400"/><rect x="809.74" y="216.8" width="2.06" height="55.4" fill="#94d400"/><rect x="811.74" y="228.6" width="2.06" height="43.6" fill="#94d400"/><rect x="813.75" y="223.6" width="2.06" height="48.6" fill="#94d400"/><rect x="815.76" y="220.2" width="2.06" height="52.0" fill="#94d400"/><rect x="817.76" y="226.1" width="2.06" height="46.1" fill="#94d400"/><rect x="819.77" y="224.0" width="2.06" height="48.2" fill="#94d400"/><rect x="821.78" y="223.1" width="2.06" height="49.1" fill="#94d400"/><rect x="823.79" y="226.4" width="2.06" height="45.8" fill="#94d400"/><rect x="825.79" y="230.2" width="2.06" height="42.0" fill="#94d400"/><rect x="826.05" y="185.4" width="1.5" height="45.8" fill="#94d400"/><rect x="827.80" y="224.8" width="2.06" height="47.4" fill="#94d400"/><rect x="829.81" y="228.1" width="2.06" height="44.1" fill="#94d400"/><rect x="831.81" y="229.9" width="2.06" height="42.3" fill="#94d400"/><rect x="833.82" y="219.7" width="2.06" height="52.5" fill="#94d400"/><rect x="835.83" y="221.3" width="2.06" height="50.9" fill="#94d400"/><rect x="837.84" y="225.5" width="2.06" height="46.7" fill="#94d400"/><rect x="839.84" y="217.5" width="2.06" height="54.7" fill="#94d400"/><rect x="841.85" y="222.1" width="2.06" height="50.1" fill="#94d400"/><rect x="843.86" y="227.1" width="2.06" height="45.1" fill="#94d400"/><rect x="845.86" y="226.3" width="2.06" height="45.9" fill="#94d400"/><rect x="847.87" y="224.9" width="2.06" height="47.3" fill="#94d400"/><rect x="849.88" y="216.9" width="2.06" height="55.3" fill="#94d400"/><rect x="851.89" y="230.5" width="2.06" height="41.7" fill="#94d400"/><rect x="853.89" y="224.8" width="2.06" height="47.4" fill="#94d400"/><rect x="855.90" y="225.5" width="2.06" height="46.7" fill="#94d400"/><rect x="857.91" y="224.6" width="2.06" height="47.6" fill="#94d400"/><rect x="859.91" y="217.5" width="2.06" height="54.7" fill="#94d400"/><rect x="861.92" y="218.4" width="2.06" height="53.8" fill="#94d400"/><rect x="863.93" y="219.1" width="2.06" height="53.1" fill="#94d400"/><rect x="865.94" y="229.1" width="2.06" height="43.1" fill="#94d400"/><rect x="867.94" y="220.3" width="2.06" height="51.9" fill="#94d400"/><rect x="869.95" y="222.2" width="2.06" height="50.0" fill="#94d400"/><rect x="871.96" y="222.2" width="2.06" height="50.0" fill="#94d400"/><rect x="873.96" y="224.8" width="2.06" height="47.4" fill="#94d400"/><rect x="875.97" y="224.6" width="2.06" height="47.6" fill="#94d400"/><rect x="877.98" y="223.9" width="2.06" height="48.3" fill="#94d400"/><rect x="879.99" y="219.0" width="2.06" height="53.2" fill="#94d400"/><rect x="881.99" y="215.0" width="2.06" height="57.2" fill="#94d400"/><rect x="884.00" y="223.5" width="2.06" height="48.7" fill="#94d400"/><rect x="886.01" y="223.9" width="2.06" height="48.3" fill="#94d400"/><rect x="888.01" y="226.9" width="2.06" height="45.3" fill="#94d400"/><rect x="890.02" y="222.7" width="2.06" height="49.5" fill="#94d400"/><rect x="892.03" y="221.0" width="2.06" height="51.2" fill="#94d400"/><rect x="894.04" y="224.3" width="2.06" height="47.9" fill="#94d400"/><rect x="896.04" y="218.0" width="2.06" height="54.2" fill="#94d400"/><rect x="896.30" y="191.4" width="1.5" height="27.6" fill="#94d400"/><rect x="898.05" y="219.7" width="2.06" height="52.5" fill="#94d400"/><rect x="900.06" y="219.8" width="2.06" height="52.4" fill="#94d400"/><rect x="902.06" y="223.9" width="2.06" height="48.3" fill="#94d400"/><rect x="904.07" y="229.7" width="2.06" height="42.5" fill="#94d400"/><rect x="906.08" y="225.4" width="2.06" height="46.8" fill="#94d400"/><rect x="908.09" y="226.7" width="2.06" height="45.5" fill="#94d400"/><rect x="910.09" y="223.8" width="2.06" height="48.4" fill="#94d400"/><rect x="912.10" y="223.9" width="2.06" height="48.3" fill="#94d400"/><rect x="914.11" y="221.6" width="2.06" height="50.6" fill="#94d400"/><rect x="916.11" y="222.1" width="2.06" height="50.1" fill="#94d400"/><rect x="918.12" y="215.2" width="2.06" height="57.0" fill="#94d400"/><rect x="918.37" y="210.8" width="1.5" height="5.4" fill="#94d400"/><rect x="920.13" y="219.2" width="2.06" height="53.0" fill="#94d400"/><rect x="922.14" y="218.9" width="2.06" height="53.3" fill="#94d400"/><rect x="924.14" y="225.7" width="2.06" height="46.5" fill="#94d400"/><rect x="926.15" y="225.1" width="2.06" height="47.1" fill="#94d400"/><rect x="928.16" y="226.7" width="2.06" height="45.5" fill="#94d400"/><rect x="930.16" y="228.0" width="2.06" height="44.2" fill="#94d400"/><rect x="932.17" y="222.0" width="2.06" height="50.2" fill="#94d400"/><rect x="934.18" y="226.4" width="2.06" height="45.8" fill="#94d400"/><rect x="936.19" y="229.3" width="2.06" height="42.9" fill="#94d400"/><rect x="938.19" y="223.0" width="2.06" height="49.2" fill="#94d400"/><rect x="940.20" y="226.5" width="2.06" height="45.7" fill="#94d400"/><rect x="942.21" y="222.5" width="2.06" height="49.7" fill="#94d400"/><rect x="944.21" y="217.8" width="2.06" height="54.4" fill="#94d400"/><rect x="946.22" y="223.4" width="2.06" height="48.8" fill="#94d400"/><rect x="948.23" y="220.4" width="2.06" height="51.8" fill="#94d400"/><rect x="950.24" y="223.3" width="2.06" height="48.9" fill="#94d400"/><rect x="952.24" y="221.5" width="2.06" height="50.7" fill="#94d400"/><rect x="954.25" y="224.0" width="2.06" height="48.2" fill="#94d400"/><rect x="956.26" y="216.2" width="2.06" height="56.0" fill="#94d400"/><rect x="958.26" y="229.7" width="2.06" height="42.5" fill="#94d400"/><rect x="960.27" y="227.4" width="2.06" height="44.8" fill="#94d400"/><rect x="962.28" y="221.9" width="2.06" height="50.3" fill="#94d400"/><rect x="964.29" y="220.1" width="2.06" height="52.1" fill="#94d400"/><rect x="966.29" y="223.0" width="2.06" height="49.2" fill="#94d400"/><rect x="966.55" y="188.5" width="1.5" height="35.5" fill="#94d400"/><path d="M689.31 219.3V272.2" stroke="#2a4c00" stroke-width="0.6" opacity="0.9"/><path d="M691.31 225.1V272.2" stroke="#2a4c00" stroke-width="0.6" opacity="0.7"/><path d="M693.32 225.1V272.2" stroke="#2a4c00" stroke-width="0.6" opacity="0.9"/><path d="M695.33 222.5V272.2" stroke="#2a4c00" stroke-width="0.6" opacity="0.5"/><path d="M697.34 222.5V272.2" stroke="#2a4c00" stroke-width="0.6" opacity="0.9"/><path d="M699.34 226.5V272.2" stroke="#2a4c00" stroke-width="0.6" opacity="0.7"/><path d="M701.35 226.5V272.2" stroke="#2a4c00" stroke-width="0.6" opacity="1.0"/><path d="M703.36 227.3V272.2" stroke="#2a4c00" stroke-width="0.6" opacity="0.5"/><path d="M705.36 227.3V272.2" stroke="#2a4c00" stroke-width="0.6" opacity="0.9"/><path d="M707.37 224.3V272.2" stroke="#2a4c00" stroke-width="0.6" opacity="0.9"/><path d="M709.38 224.3V272.2" stroke="#2a4c00" stroke-width="0.6" opacity="0.9"/><path d="M711.39 222.1V272.2" stroke="#2a4c00" stroke-width="0.6" opacity="1.0"/><path d="M713.39 223.5V272.2" stroke="#2a4c00" stroke-width="0.6" opacity="0.7"/><path d="M715.40 223.5V272.2" stroke="#2a4c00" stroke-width="0.6" opacity="0.3"/><path d="M717.41 221.9V272.2" stroke="#2a4c00" stroke-width="0.6" opacity="1.0"/><path d="M719.41 225.2V272.2" stroke="#2a4c00" stroke-width="0.6" opacity="0.3"/><path d="M721.42 225.2V272.2" stroke="#2a4c00" stroke-width="0.6" opacity="0.7"/><path d="M723.43 223.2V272.2" stroke="#2a4c00" stroke-width="0.6" opacity="0.5"/><path d="M725.44 230.0V272.2" stroke="#2a4c00" stroke-width="0.6" opacity="0.7"/><path d="M727.44 230.0V272.2" stroke="#2a4c00" stroke-width="0.6" opacity="0.9"/><path d="M729.45 223.2V272.2" stroke="#2a4c00" stroke-width="0.6" opacity="0.5"/><path d="M731.46 223.5V272.2" stroke="#2a4c00" stroke-width="0.6" opacity="0.7"/><path d="M733.46 223.5V272.2" stroke="#2a4c00" stroke-width="0.6" opacity="0.3"/><path d="M735.47 221.8V272.2" stroke="#2a4c00" stroke-width="0.6" opacity="1.0"/><path d="M737.48 221.9V272.2" stroke="#2a4c00" stroke-width="0.6" opacity="0.9"/><path d="M739.49 229.5V272.2" stroke="#2a4c00" stroke-width="0.6" opacity="0.9"/><path d="M741.49 229.5V272.2" stroke="#2a4c00" stroke-width="0.6" opacity="0.9"/><path d="M743.50 223.6V272.2" stroke="#2a4c00" stroke-width="0.6" opacity="1.0"/><path d="M745.51 225.2V272.2" stroke="#2a4c00" stroke-width="0.6" opacity="0.7"/><path d="M747.51 229.5V272.2" stroke="#2a4c00" stroke-width="0.6" opacity="1.0"/><path d="M749.52 229.5V272.2" stroke="#2a4c00" stroke-width="0.6" opacity="0.3"/><path d="M751.53 222.3V272.2" stroke="#2a4c00" stroke-width="0.6" opacity="0.7"/><path d="M753.54 230.9V272.2" stroke="#2a4c00" stroke-width="0.6" opacity="1.0"/><path d="M755.54 230.9V272.2" stroke="#2a4c00" stroke-width="0.6" opacity="1.0"/><path d="M757.55 221.8V272.2" stroke="#2a4c00" stroke-width="0.6" opacity="0.3"/><path d="M759.56 225.1V272.2" stroke="#2a4c00" stroke-width="0.6" opacity="1.0"/><path d="M761.56 230.3V272.2" stroke="#2a4c00" stroke-width="0.6" opacity="1.0"/><path d="M763.57 230.3V272.2" stroke="#2a4c00" stroke-width="0.6" opacity="0.9"/><path d="M765.58 220.0V272.2" stroke="#2a4c00" stroke-width="0.6" opacity="0.9"/><path d="M767.59 225.1V272.2" stroke="#2a4c00" stroke-width="0.6" opacity="0.7"/><path d="M769.59 225.1V272.2" stroke="#2a4c00" stroke-width="0.6" opacity="0.3"/><path d="M771.60 221.8V272.2" stroke="#2a4c00" stroke-width="0.6" opacity="0.9"/><path d="M773.61 224.5V272.2" stroke="#2a4c00" stroke-width="0.6" opacity="0.9"/><path d="M775.61 224.5V272.2" stroke="#2a4c00" stroke-width="0.6" opacity="0.3"/><path d="M777.62 223.9V272.2" stroke="#2a4c00" stroke-width="0.6" opacity="0.3"/><path d="M779.63 223.9V272.2" stroke="#2a4c00" stroke-width="0.6" opacity="0.5"/><path d="M781.64 227.1V272.2" stroke="#2a4c00" stroke-width="0.6" opacity="0.9"/><path d="M783.64 227.8V272.2" stroke="#2a4c00" stroke-width="0.6" opacity="0.5"/><path d="M785.65 227.8V272.2" stroke="#2a4c00" stroke-width="0.6" opacity="0.9"/><path d="M787.66 223.1V272.2" stroke="#2a4c00" stroke-width="0.6" opacity="0.7"/><path d="M789.66 225.3V272.2" stroke="#2a4c00" stroke-width="0.6" opacity="1.0"/><path d="M791.67 225.3V272.2" stroke="#2a4c00" stroke-width="0.6" opacity="1.0"/><path d="M793.68 224.5V272.2" stroke="#2a4c00" stroke-width="0.6" opacity="0.3"/><path d="M795.69 221.5V272.2" stroke="#2a4c00" stroke-width="0.6" opacity="1.0"/><path d="M797.69 226.4V272.2" stroke="#2a4c00" stroke-width="0.6" opacity="0.5"/><path d="M799.70 226.4V272.2" stroke="#2a4c00" stroke-width="0.6" opacity="0.7"/><path d="M801.71 222.7V272.2" stroke="#2a4c00" stroke-width="0.6" opacity="0.3"/><path d="M803.71 223.7V272.2" stroke="#2a4c00" stroke-width="0.6" opacity="0.5"/><path d="M805.72 223.7V272.2" stroke="#2a4c00" stroke-width="0.6" opacity="0.5"/><path d="M807.73 223.0V272.2" stroke="#2a4c00" stroke-width="0.6" opacity="0.9"/><path d="M809.74 223.0V272.2" stroke="#2a4c00" stroke-width="0.6" opacity="0.7"/><path d="M811.74 228.6V272.2" stroke="#2a4c00" stroke-width="0.6" opacity="0.9"/><path d="M813.75 228.6V272.2" stroke="#2a4c00" stroke-width="0.6" opacity="0.7"/><path d="M815.76 223.6V272.2" stroke="#2a4c00" stroke-width="0.6" opacity="1.0"/><path d="M817.76 226.1V272.2" stroke="#2a4c00" stroke-width="0.6" opacity="0.5"/><path d="M819.77 226.1V272.2" stroke="#2a4c00" stroke-width="0.6" opacity="0.9"/><path d="M821.78 224.0V272.2" stroke="#2a4c00" stroke-width="0.6" opacity="0.5"/><path d="M823.79 226.4V272.2" stroke="#2a4c00" stroke-width="0.6" opacity="0.7"/><path d="M825.79 230.2V272.2" stroke="#2a4c00" stroke-width="0.6" opacity="1.0"/><path d="M827.80 230.2V272.2" stroke="#2a4c00" stroke-width="0.6" opacity="0.7"/><path d="M829.81 228.1V272.2" stroke="#2a4c00" stroke-width="0.6" opacity="0.9"/><path d="M831.81 229.9V272.2" stroke="#2a4c00" stroke-width="0.6" opacity="0.7"/><path d="M833.82 229.9V272.2" stroke="#2a4c00" stroke-width="0.6" opacity="0.5"/><path d="M835.83 221.3V272.2" stroke="#2a4c00" stroke-width="0.6" opacity="0.3"/><path d="M837.84 225.5V272.2" stroke="#2a4c00" stroke-width="0.6" opacity="0.7"/><path d="M839.84 225.5V272.2" stroke="#2a4c00" stroke-width="0.6" opacity="0.5"/><path d="M841.85 222.1V272.2" stroke="#2a4c00" stroke-width="0.6" opacity="0.9"/><path d="M843.86 227.1V272.2" stroke="#2a4c00" stroke-width="0.6" opacity="0.3"/><path d="M845.86 227.1V272.2" stroke="#2a4c00" stroke-width="0.6" opacity="0.9"/><path d="M847.87 226.3V272.2" stroke="#2a4c00" stroke-width="0.6" opacity="0.7"/><path d="M849.88 224.9V272.2" stroke="#2a4c00" stroke-width="0.6" opacity="0.9"/><path d="M851.89 230.5V272.2" stroke="#2a4c00" stroke-width="0.6" opacity="1.0"/><path d="M853.89 230.5V272.2" stroke="#2a4c00" stroke-width="0.6" opacity="0.3"/><path d="M855.90 225.5V272.2" stroke="#2a4c00" stroke-width="0.6" opacity="0.5"/><path d="M857.91 225.5V272.2" stroke="#2a4c00" stroke-width="0.6" opacity="0.3"/><path d="M859.91 224.6V272.2" stroke="#2a4c00" stroke-width="0.6" opacity="0.3"/><path d="M861.92 218.4V272.2" stroke="#2a4c00" stroke-width="0.6" opacity="0.5"/><path d="M863.93 219.1V272.2" stroke="#2a4c00" stroke-width="0.6" opacity="0.9"/><path d="M865.94 229.1V272.2" stroke="#2a4c00" stroke-width="0.6" opacity="0.9"/><path d="M867.94 229.1V272.2" stroke="#2a4c00" stroke-width="0.6" opacity="0.5"/><path d="M869.95 222.2V272.2" stroke="#2a4c00" stroke-width="0.6" opacity="0.7"/><path d="M871.96 222.2V272.2" stroke="#2a4c00" stroke-width="0.6" opacity="0.5"/><path d="M873.96 224.8V272.2" stroke="#2a4c00" stroke-width="0.6" opacity="0.5"/><path d="M875.97 224.8V272.2" stroke="#2a4c00" stroke-width="0.6" opacity="0.9"/><path d="M877.98 224.6V272.2" stroke="#2a4c00" stroke-width="0.6" opacity="0.5"/><path d="M879.99 223.9V272.2" stroke="#2a4c00" stroke-width="0.6" opacity="0.9"/><path d="M881.99 219.0V272.2" stroke="#2a4c00" stroke-width="0.6" opacity="0.5"/><path d="M884.00 223.5V272.2" stroke="#2a4c00" stroke-width="0.6" opacity="0.5"/><path d="M886.01 223.9V272.2" stroke="#2a4c00" stroke-width="0.6" opacity="1.0"/><path d="M888.01 226.9V272.2" stroke="#2a4c00" stroke-width="0.6" opacity="0.7"/><path d="M890.02 226.9V272.2" stroke="#2a4c00" stroke-width="0.6" opacity="1.0"/><path d="M892.03 222.7V272.2" stroke="#2a4c00" stroke-width="0.6" opacity="1.0"/><path d="M894.04 224.3V272.2" stroke="#2a4c00" stroke-width="0.6" opacity="0.7"/><path d="M896.04 224.3V272.2" stroke="#2a4c00" stroke-width="0.6" opacity="0.3"/><path d="M898.05 219.7V272.2" stroke="#2a4c00" stroke-width="0.6" opacity="0.9"/><path d="M900.06 219.8V272.2" stroke="#2a4c00" stroke-width="0.6" opacity="0.5"/><path d="M902.06 223.9V272.2" stroke="#2a4c00" stroke-width="0.6" opacity="0.5"/><path d="M904.07 229.7V272.2" stroke="#2a4c00" stroke-width="0.6" opacity="0.3"/><path d="M906.08 229.7V272.2" stroke="#2a4c00" stroke-width="0.6" opacity="0.5"/><path d="M908.09 226.7V272.2" stroke="#2a4c00" stroke-width="0.6" opacity="0.3"/><path d="M910.09 226.7V272.2" stroke="#2a4c00" stroke-width="0.6" opacity="1.0"/><path d="M912.10 223.9V272.2" stroke="#2a4c00" stroke-width="0.6" opacity="0.5"/><path d="M914.11 223.9V272.2" stroke="#2a4c00" stroke-width="0.6" opacity="0.7"/><path d="M916.11 222.1V272.2" stroke="#2a4c00" stroke-width="0.6" opacity="0.3"/><path d="M918.12 222.1V272.2" stroke="#2a4c00" stroke-width="0.6" opacity="0.9"/><path d="M920.13 219.2V272.2" stroke="#2a4c00" stroke-width="0.6" opacity="0.5"/><path d="M922.14 219.2V272.2" stroke="#2a4c00" stroke-width="0.6" opacity="0.9"/><path d="M924.14 225.7V272.2" stroke="#2a4c00" stroke-width="0.6" opacity="0.7"/><path d="M926.15 225.7V272.2" stroke="#2a4c00" stroke-width="0.6" opacity="0.5"/><path d="M928.16 226.7V272.2" stroke="#2a4c00" stroke-width="0.6" opacity="0.7"/><path d="M930.16 228.0V272.2" stroke="#2a4c00" stroke-width="0.6" opacity="0.3"/><path d="M932.17 228.0V272.2" stroke="#2a4c00" stroke-width="0.6" opacity="0.9"/><path d="M934.18 226.4V272.2" stroke="#2a4c00" stroke-width="0.6" opacity="0.3"/><path d="M936.19 229.3V272.2" stroke="#2a4c00" stroke-width="0.6" opacity="1.0"/><path d="M938.19 229.3V272.2" stroke="#2a4c00" stroke-width="0.6" opacity="0.9"/><path d="M940.20 226.5V272.2" stroke="#2a4c00" stroke-width="0.6" opacity="1.0"/><path d="M942.21 226.5V272.2" stroke="#2a4c00" stroke-width="0.6" opacity="0.5"/><path d="M944.21 222.5V272.2" stroke="#2a4c00" stroke-width="0.6" opacity="0.7"/><path d="M946.22 223.4V272.2" stroke="#2a4c00" stroke-width="0.6" opacity="1.0"/><path d="M948.23 223.4V272.2" stroke="#2a4c00" stroke-width="0.6" opacity="0.5"/><path d="M950.24 223.3V272.2" stroke="#2a4c00" stroke-width="0.6" opacity="0.7"/><path d="M952.24 223.3V272.2" stroke="#2a4c00" stroke-width="0.6" opacity="1.0"/><path d="M954.25 224.0V272.2" stroke="#2a4c00" stroke-width="0.6" opacity="0.9"/><path d="M956.26 224.0V272.2" stroke="#2a4c00" stroke-width="0.6" opacity="1.0"/><path d="M958.26 229.7V272.2" stroke="#2a4c00" stroke-width="0.6" opacity="1.0"/><path d="M960.27 229.7V272.2" stroke="#2a4c00" stroke-width="0.6" opacity="0.7"/><path d="M962.28 227.4V272.2" stroke="#2a4c00" stroke-width="0.6" opacity="0.7"/><path d="M964.29 221.9V272.2" stroke="#2a4c00" stroke-width="0.6" opacity="0.3"/><path d="M966.29 223.0V272.2" stroke="#2a4c00" stroke-width="0.6" opacity="0.5"/><rect x="687.40" y="219.2" width="1.81" height="3" fill="#d8d020"/><rect x="687.40" y="222.2" width="1.81" height="7" fill="#20d0d8"/><rect x="687.40" y="229.2" width="1.81" height="4.5" fill="#e81828"/><rect x="687.40" y="233.7" width="1.81" height="1.4" fill="#9020d0"/><rect x="687.40" y="235.2" width="1.81" height="4.1" fill="#e81828"/><rect x="687.40" y="239.3" width="1.81" height="3.4" fill="#e81828"/><rect x="687.40" y="242.7" width="1.81" height="4.1" fill="#e81828"/><rect x="687.40" y="246.8" width="1.81" height="3.3" fill="#e81828"/><rect x="687.40" y="250.2" width="1.81" height="2.3" fill="#8a20e0"/><rect x="687.40" y="252.4" width="1.81" height="2.2" fill="#e81828"/><rect x="687.40" y="254.6" width="1.81" height="3.9" fill="#e81828"/><rect x="687.40" y="258.5" width="1.81" height="3.7" fill="#3060e0"/><rect x="687.40" y="262.2" width="1.81" height="4.4" fill="#8a20e0"/><rect x="687.40" y="266.7" width="1.81" height="3.3" fill="#e81828"/><rect x="687.40" y="269.9" width="1.81" height="2.3" fill="#e81828"/><rect x="715.50" y="219.0" width="1.81" height="3" fill="#d8d020"/><rect x="715.50" y="222.0" width="1.81" height="7" fill="#20d0d8"/><rect x="715.50" y="229.0" width="1.81" height="1.9" fill="#9020d0"/><rect x="715.50" y="230.9" width="1.81" height="3.8" fill="#e81828"/><rect x="715.50" y="234.7" width="1.81" height="3.9" fill="#8a20e0"/><rect x="715.50" y="238.6" width="1.81" height="4.9" fill="#8a20e0"/><rect x="715.50" y="243.5" width="1.81" height="1.4" fill="#8a20e0"/><rect x="715.50" y="244.9" width="1.81" height="1.6" fill="#8a20e0"/><rect x="715.50" y="246.6" width="1.81" height="3.0" fill="#3060e0"/><rect x="715.50" y="249.6" width="1.81" height="1.3" fill="#8a20e0"/><rect x="715.50" y="250.9" width="1.81" height="2.5" fill="#e81828"/><rect x="715.50" y="253.5" width="1.81" height="3.5" fill="#3060e0"/><rect x="715.50" y="257.0" width="1.81" height="2.0" fill="#e81828"/><rect x="715.50" y="259.0" width="1.81" height="4.6" fill="#e81828"/><rect x="715.50" y="263.6" width="1.81" height="2.5" fill="#e81828"/><rect x="715.50" y="266.1" width="1.81" height="4.5" fill="#9020d0"/><rect x="715.50" y="270.6" width="1.81" height="1.6" fill="#9020d0"/><rect x="743.60" y="223.6" width="1.81" height="3" fill="#d8d020"/><rect x="743.60" y="226.6" width="1.81" height="7" fill="#20d0d8"/><rect x="743.60" y="233.6" width="1.81" height="2.8" fill="#e81828"/><rect x="743.60" y="236.3" width="1.81" height="4.8" fill="#e81828"/><rect x="743.60" y="241.1" width="1.81" height="3.1" fill="#e81828"/><rect x="743.60" y="244.2" width="1.81" height="1.7" fill="#e81828"/><rect x="743.60" y="245.9" width="1.81" height="1.7" fill="#3060e0"/><rect x="743.60" y="247.6" width="1.81" height="4.9" fill="#8a20e0"/><rect x="743.60" y="252.5" width="1.81" height="2.3" fill="#9020d0"/><rect x="743.60" y="254.8" width="1.81" height="1.7" fill="#8a20e0"/><rect x="743.60" y="256.5" width="1.81" height="1.3" fill="#3060e0"/><rect x="743.60" y="257.7" width="1.81" height="3.3" fill="#8a20e0"/><rect x="743.60" y="261.1" width="1.81" height="4.8" fill="#9020d0"/><rect x="743.60" y="265.8" width="1.81" height="1.3" fill="#8a20e0"/><rect x="743.60" y="267.2" width="1.81" height="2.2" fill="#8a20e0"/><rect x="743.60" y="269.4" width="1.81" height="2.8" fill="#e81828"/><rect x="771.70" y="221.8" width="1.81" height="3" fill="#d8d020"/><rect x="771.70" y="224.8" width="1.81" height="7" fill="#20d0d8"/><rect x="771.70" y="231.8" width="1.81" height="3.7" fill="#8a20e0"/><rect x="771.70" y="235.4" width="1.81" height="4.7" fill="#8a20e0"/><rect x="771.70" y="240.1" width="1.81" height="1.8" fill="#e81828"/><rect x="771.70" y="241.9" width="1.81" height="3.3" fill="#8a20e0"/><rect x="771.70" y="245.2" width="1.81" height="4.9" fill="#3060e0"/><rect x="771.70" y="250.1" width="1.81" height="1.8" fill="#3060e0"/><rect x="771.70" y="251.9" width="1.81" height="3.3" fill="#e81828"/><rect x="771.70" y="255.1" width="1.81" height="1.5" fill="#8a20e0"/><rect x="771.70" y="256.6" width="1.81" height="2.2" fill="#e81828"/><rect x="771.70" y="258.8" width="1.81" height="4.2" fill="#e81828"/><rect x="771.70" y="263.0" width="1.81" height="4.8" fill="#e81828"/><rect x="771.70" y="267.8" width="1.81" height="3.9" fill="#e81828"/><rect x="799.80" y="222.7" width="1.81" height="3" fill="#d8d020"/><rect x="799.80" y="225.7" width="1.81" height="7" fill="#20d0d8"/><rect x="799.80" y="232.7" width="1.81" height="1.7" fill="#8a20e0"/><rect x="799.80" y="234.4" width="1.81" height="4.5" fill="#8a20e0"/><rect x="799.80" y="238.9" width="1.81" height="4.0" fill="#8a20e0"/><rect x="799.80" y="242.9" width="1.81" height="1.7" fill="#e81828"/><rect x="799.80" y="244.6" width="1.81" height="3.7" fill="#e81828"/><rect x="799.80" y="248.3" width="1.81" height="3.4" fill="#e81828"/><rect x="799.80" y="251.6" width="1.81" height="1.5" fill="#e81828"/><rect x="799.80" y="253.2" width="1.81" height="3.1" fill="#8a20e0"/><rect x="799.80" y="256.3" width="1.81" height="2.1" fill="#8a20e0"/><rect x="799.80" y="258.4" width="1.81" height="3.0" fill="#e81828"/><rect x="799.80" y="261.5" width="1.81" height="1.6" fill="#3060e0"/><rect x="799.80" y="263.1" width="1.81" height="1.3" fill="#e81828"/><rect x="799.80" y="264.4" width="1.81" height="2.7" fill="#9020d0"/><rect x="799.80" y="267.0" width="1.81" height="1.8" fill="#8a20e0"/><rect x="799.80" y="268.8" width="1.81" height="3.4" fill="#8a20e0"/><rect x="827.90" y="224.8" width="1.81" height="3" fill="#d8d020"/><rect x="827.90" y="227.8" width="1.81" height="7" fill="#20d0d8"/><rect x="827.90" y="234.8" width="1.81" height="1.8" fill="#e81828"/><rect x="827.90" y="236.6" width="1.81" height="4.5" fill="#9020d0"/><rect x="827.90" y="241.1" width="1.81" height="4.5" fill="#8a20e0"/><rect x="827.90" y="245.6" width="1.81" height="3.3" fill="#e81828"/><rect x="827.90" y="248.9" width="1.81" height="2.3" fill="#8a20e0"/><rect x="827.90" y="251.2" width="1.81" height="4.1" fill="#e81828"/><rect x="827.90" y="255.2" width="1.81" height="2.1" fill="#8a20e0"/><rect x="827.90" y="257.3" width="1.81" height="4.6" fill="#e81828"/><rect x="827.90" y="261.9" width="1.81" height="4.7" fill="#e81828"/><rect x="827.90" y="266.6" width="1.81" height="2.4" fill="#e81828"/><rect x="827.90" y="269.0" width="1.81" height="3.2" fill="#e81828"/><rect x="856.00" y="225.5" width="1.81" height="3" fill="#d8d020"/><rect x="856.00" y="228.5" width="1.81" height="7" fill="#20d0d8"/><rect x="856.00" y="235.5" width="1.81" height="3.1" fill="#8a20e0"/><rect x="856.00" y="238.5" width="1.81" height="1.4" fill="#8a20e0"/><rect x="856.00" y="239.9" width="1.81" height="3.6" fill="#8a20e0"/><rect x="856.00" y="243.6" width="1.81" height="2.7" fill="#e81828"/><rect x="856.00" y="246.3" width="1.81" height="1.4" fill="#9020d0"/><rect x="856.00" y="247.7" width="1.81" height="2.7" fill="#e81828"/><rect x="856.00" y="250.4" width="1.81" height="3.6" fill="#e81828"/><rect x="856.00" y="254.0" width="1.81" height="4.8" fill="#8a20e0"/><rect x="856.00" y="258.9" width="1.81" height="1.9" fill="#3060e0"/><rect x="856.00" y="260.7" width="1.81" height="3.6" fill="#8a20e0"/><rect x="856.00" y="264.4" width="1.81" height="3.2" fill="#e81828"/><rect x="856.00" y="267.6" width="1.81" height="4.6" fill="#9020d0"/><rect x="884.10" y="223.5" width="1.81" height="3" fill="#d8d020"/><rect x="884.10" y="226.5" width="1.81" height="7" fill="#20d0d8"/><rect x="884.10" y="233.5" width="1.81" height="4.6" fill="#e81828"/><rect x="884.10" y="238.1" width="1.81" height="1.5" fill="#9020d0"/><rect x="884.10" y="239.6" width="1.81" height="2.4" fill="#9020d0"/><rect x="884.10" y="242.0" width="1.81" height="4.1" fill="#e81828"/><rect x="884.10" y="246.1" width="1.81" height="4.6" fill="#e81828"/><rect x="884.10" y="250.7" width="1.81" height="4.8" fill="#8a20e0"/><rect x="884.10" y="255.5" width="1.81" height="3.4" fill="#8a20e0"/><rect x="884.10" y="258.8" width="1.81" height="1.7" fill="#e81828"/><rect x="884.10" y="260.6" width="1.81" height="3.7" fill="#e81828"/><rect x="884.10" y="264.3" width="1.81" height="4.0" fill="#e81828"/><rect x="884.10" y="268.2" width="1.81" height="2.8" fill="#e81828"/><rect x="884.10" y="271.1" width="1.81" height="1.1" fill="#8a20e0"/><rect x="912.20" y="223.9" width="1.81" height="3" fill="#d8d020"/><rect x="912.20" y="226.9" width="1.81" height="7" fill="#20d0d8"/><rect x="912.20" y="233.9" width="1.81" height="4.9" fill="#3060e0"/><rect x="912.20" y="238.8" width="1.81" height="1.2" fill="#8a20e0"/><rect x="912.20" y="240.0" width="1.81" height="4.3" fill="#8a20e0"/><rect x="912.20" y="244.3" width="1.81" height="3.8" fill="#8a20e0"/><rect x="912.20" y="248.1" width="1.81" height="4.9" fill="#e81828"/><rect x="912.20" y="253.0" width="1.81" height="4.7" fill="#8a20e0"/><rect x="912.20" y="257.7" width="1.81" height="3.0" fill="#e81828"/><rect x="912.20" y="260.7" width="1.81" height="2.7" fill="#8a20e0"/><rect x="912.20" y="263.4" width="1.81" height="2.0" fill="#9020d0"/><rect x="912.20" y="265.3" width="1.81" height="2.0" fill="#3060e0"/><rect x="912.20" y="267.3" width="1.81" height="3.2" fill="#9020d0"/><rect x="912.20" y="270.5" width="1.81" height="1.7" fill="#8a20e0"/><rect x="940.30" y="226.5" width="1.81" height="3" fill="#d8d020"/><rect x="940.30" y="229.5" width="1.81" height="7" fill="#20d0d8"/><rect x="940.30" y="236.5" width="1.81" height="2.7" fill="#9020d0"/><rect x="940.30" y="239.2" width="1.81" height="4.3" fill="#e81828"/><rect x="940.30" y="243.5" width="1.81" height="3.3" fill="#e81828"/><rect x="940.30" y="246.8" width="1.81" height="3.2" fill="#9020d0"/><rect x="940.30" y="250.1" width="1.81" height="2.8" fill="#3060e0"/><rect x="940.30" y="252.8" width="1.81" height="1.3" fill="#9020d0"/><rect x="940.30" y="254.1" width="1.81" height="3.2" fill="#e81828"/><rect x="940.30" y="257.3" width="1.81" height="2.3" fill="#e81828"/><rect x="940.30" y="259.6" width="1.81" height="1.5" fill="#e81828"/><rect x="940.30" y="261.1" width="1.81" height="3.5" fill="#9020d0"/><rect x="940.30" y="264.6" width="1.81" height="4.1" fill="#e81828"/><rect x="940.30" y="268.7" width="1.81" height="2.8" fill="#e81828"/><rect x="940.30" y="271.5" width="1.81" height="0.7" fill="#e81828"/><path d="M688.64 216.6V222.2M690.52 215.4V222.3M692.60 220.0V228.1M706.57 219.6V224.4M708.47 217.5V227.3M716.55 214.4V222.0M718.55 220.2V224.9M720.96 221.2V228.2M724.60 214.3V224.7M726.30 227.9V233.0M734.97 218.4V224.3M736.95 216.8V224.8M738.47 207.2V224.9M742.08 214.8V226.1M744.50 208.2V226.6M746.53 206.5V228.2M750.26 220.3V225.3M754.76 227.9V233.9M759.06 218.2V224.8M760.93 221.7V228.1M766.85 209.7V218.2M768.35 218.6V228.1M776.76 221.8V226.7M782.54 222.3V230.1M784.71 225.5V230.8M788.95 217.1V224.6M790.44 221.9V228.3M792.86 221.5V227.5M794.77 216.9V222.7M796.75 210.1V224.5M798.40 222.0V229.4M802.70 212.0V224.9M804.54 218.7V226.7M806.97 212.1V225.9M808.56 217.0V226.0M820.40 222.4V227.0M822.76 213.9V226.1M825.26 222.6V229.4M828.39 222.9V227.8M830.35 216.4V231.1M833.09 224.5V232.9M834.92 213.8V222.7M841.13 214.9V220.5M843.06 219.7V225.1M849.21 223.1V227.9M851.29 215.3V219.9M858.50 208.3V227.6M866.97 222.5V232.1M875.30 223.0V227.8M876.47 222.6V227.6M882.69 211.1V218.0M886.61 222.1V226.9M888.46 224.1V229.9M893.60 219.1V224.0M895.58 221.8V227.3M898.88 217.4V222.7M905.23 224.9V232.7M907.44 214.2V228.4M908.76 223.1V229.7M911.42 220.2V226.8M915.69 219.1V224.6M923.01 217.0V221.9M929.20 222.9V229.7M939.33 217.5V226.0M941.45 222.7V229.5M943.42 216.1V225.5M948.77 218.5V223.4M953.45 207.9V224.5M955.74 218.8V227.0M957.67 213.3V219.2M961.03 225.5V230.4" stroke="#18b8d0" stroke-width="0.9" fill="none"/><rect x="687.89" y="215.7" width="1.5" height="1.6" fill="#a8dc20"/><rect x="689.77" y="214.5" width="1.5" height="1.6" fill="#a8dc20"/><rect x="691.85" y="219.1" width="1.5" height="1.6" fill="#a8dc20"/><rect x="705.82" y="218.7" width="1.5" height="1.6" fill="#a8dc20"/><rect x="707.72" y="216.6" width="1.5" height="1.6" fill="#a8dc20"/><rect x="715.80" y="213.5" width="1.5" height="1.6" fill="#a8dc20"/><rect x="717.80" y="219.3" width="1.5" height="1.6" fill="#a8dc20"/><rect x="720.21" y="220.3" width="1.5" height="1.6" fill="#a8dc20"/><rect x="723.85" y="213.4" width="1.5" height="1.6" fill="#a8dc20"/><rect x="725.55" y="227.0" width="1.5" height="1.6" fill="#a8dc20"/><rect x="734.22" y="217.5" width="1.5" height="1.6" fill="#a8dc20"/><rect x="736.20" y="215.9" width="1.5" height="1.6" fill="#a8dc20"/><rect x="737.72" y="206.3" width="1.5" height="1.6" fill="#a8dc20"/><rect x="741.33" y="213.9" width="1.5" height="1.6" fill="#a8dc20"/><rect x="743.75" y="207.3" width="1.5" height="1.6" fill="#a8dc20"/><rect x="745.78" y="205.6" width="1.5" height="1.6" fill="#a8dc20"/><rect x="749.51" y="219.4" width="1.5" height="1.6" fill="#a8dc20"/><rect x="754.01" y="227.0" width="1.5" height="1.6" fill="#a8dc20"/><rect x="758.31" y="217.3" width="1.5" height="1.6" fill="#a8dc20"/><rect x="760.18" y="220.8" width="1.5" height="1.6" fill="#a8dc20"/><rect x="766.10" y="208.8" width="1.5" height="1.6" fill="#a8dc20"/><rect x="767.60" y="217.7" width="1.5" height="1.6" fill="#a8dc20"/><rect x="776.01" y="220.9" width="1.5" height="1.6" fill="#a8dc20"/><rect x="781.79" y="221.4" width="1.5" height="1.6" fill="#a8dc20"/><rect x="783.96" y="224.6" width="1.5" height="1.6" fill="#a8dc20"/><rect x="788.20" y="216.2" width="1.5" height="1.6" fill="#a8dc20"/><rect x="789.69" y="221.0" width="1.5" height="1.6" fill="#a8dc20"/><rect x="792.11" y="220.6" width="1.5" height="1.6" fill="#a8dc20"/><rect x="794.02" y="216.0" width="1.5" height="1.6" fill="#a8dc20"/><rect x="796.00" y="209.2" width="1.5" height="1.6" fill="#a8dc20"/><rect x="797.65" y="221.1" width="1.5" height="1.6" fill="#a8dc20"/><rect x="801.95" y="211.1" width="1.5" height="1.6" fill="#a8dc20"/><rect x="803.79" y="217.8" width="1.5" height="1.6" fill="#a8dc20"/><rect x="806.22" y="211.2" width="1.5" height="1.6" fill="#a8dc20"/><rect x="807.81" y="216.1" width="1.5" height="1.6" fill="#a8dc20"/><rect x="819.65" y="221.5" width="1.5" height="1.6" fill="#a8dc20"/><rect x="822.01" y="213.0" width="1.5" height="1.6" fill="#a8dc20"/><rect x="824.51" y="221.7" width="1.5" height="1.6" fill="#a8dc20"/><rect x="827.64" y="222.0" width="1.5" height="1.6" fill="#a8dc20"/><rect x="829.60" y="215.5" width="1.5" height="1.6" fill="#a8dc20"/><rect x="832.34" y="223.6" width="1.5" height="1.6" fill="#a8dc20"/><rect x="834.17" y="212.9" width="1.5" height="1.6" fill="#a8dc20"/><rect x="840.38" y="214.0" width="1.5" height="1.6" fill="#a8dc20"/><rect x="842.31" y="218.8" width="1.5" height="1.6" fill="#a8dc20"/><rect x="848.46" y="222.2" width="1.5" height="1.6" fill="#a8dc20"/><rect x="850.54" y="214.4" width="1.5" height="1.6" fill="#a8dc20"/><rect x="857.75" y="207.4" width="1.5" height="1.6" fill="#a8dc20"/><rect x="866.22" y="221.6" width="1.5" height="1.6" fill="#a8dc20"/><rect x="874.55" y="222.1" width="1.5" height="1.6" fill="#a8dc20"/><rect x="875.72" y="221.7" width="1.5" height="1.6" fill="#a8dc20"/><rect x="881.94" y="210.2" width="1.5" height="1.6" fill="#a8dc20"/><rect x="885.86" y="221.2" width="1.5" height="1.6" fill="#a8dc20"/><rect x="887.71" y="223.2" width="1.5" height="1.6" fill="#a8dc20"/><rect x="892.85" y="218.2" width="1.5" height="1.6" fill="#a8dc20"/><rect x="894.83" y="220.9" width="1.5" height="1.6" fill="#a8dc20"/><rect x="898.13" y="216.5" width="1.5" height="1.6" fill="#a8dc20"/><rect x="904.48" y="224.0" width="1.5" height="1.6" fill="#a8dc20"/><rect x="906.69" y="213.3" width="1.5" height="1.6" fill="#a8dc20"/><rect x="908.01" y="222.2" width="1.5" height="1.6" fill="#a8dc20"/><rect x="910.67" y="219.3" width="1.5" height="1.6" fill="#a8dc20"/><rect x="914.94" y="218.2" width="1.5" height="1.6" fill="#a8dc20"/><rect x="922.26" y="216.1" width="1.5" height="1.6" fill="#a8dc20"/><rect x="928.45" y="222.0" width="1.5" height="1.6" fill="#a8dc20"/><rect x="938.58" y="216.6" width="1.5" height="1.6" fill="#a8dc20"/><rect x="940.70" y="221.8" width="1.5" height="1.6" fill="#a8dc20"/><rect x="942.67" y="215.2" width="1.5" height="1.6" fill="#a8dc20"/><rect x="948.02" y="217.6" width="1.5" height="1.6" fill="#a8dc20"/><rect x="952.70" y="207.0" width="1.5" height="1.6" fill="#a8dc20"/><rect x="954.99" y="217.9" width="1.5" height="1.6" fill="#a8dc20"/><rect x="956.92" y="212.4" width="1.5" height="1.6" fill="#a8dc20"/><rect x="960.28" y="224.6" width="1.5" height="1.6" fill="#a8dc20"/><rect x="826.00" y="184.4" width="1.6" height="1.8" fill="#b0e030"/><rect x="896.25" y="190.4" width="1.6" height="1.8" fill="#b0e030"/><rect x="918.32" y="209.8" width="1.6" height="1.8" fill="#b0e030"/><rect x="966.50" y="187.5" width="1.6" height="1.8" fill="#b0e030"/><rect x="755.75" y="199.0" width="1.6" height="1.8" fill="#b0e030"/><rect x="709.58" y="210.0" width="1.6" height="1.8" fill="#b0e030"/><rect x="693.52" y="213.0" width="1.6" height="1.8" fill="#b0e030"/><path d="M803.4 223.1v1.3M847.4 219.3v1.3M863.3 222.0v1.3M801.7 221.2v1.3M752.1 219.3v1.3M756.0 225.3v1.3M804.8 216.9v1.3M780.2 220.7v1.3M805.8 223.5v1.3M843.3 222.6v1.3M845.6 221.9v1.3M716.1 224.2v1.3M908.4 225.0v1.3M954.9 224.3v1.3M726.0 224.1v1.3M740.5 225.8v1.3M818.8 218.0v1.3M938.4 218.8v1.3M860.2 223.2v1.3M687.7 216.9v1.3M876.2 222.5v1.3M790.6 223.1v1.3M901.0 221.2v1.3M778.0 223.6v1.3M903.6 221.7v1.3M841.6 216.3v1.3M850.4 219.1v1.3M790.0 218.6v1.3M916.1 224.5v1.3M735.9 221.8v1.3M937.6 217.5v1.3M756.4 225.4v1.3M951.8 225.5v1.3M962.8 225.9v1.3M957.6 225.7v1.3M794.4 225.7v1.3M783.6 225.7v1.3M950.8 220.2v1.3M887.5 216.9v1.3M968.0 225.1v1.3M898.3 224.5v1.3M727.1 221.7v1.3M941.8 220.7v1.3M712.2 219.3v1.3M718.2 216.0v1.3M705.1 219.5v1.3M808.8 223.3v1.3M763.5 211.6v1.3M889.6 218.0v1.3M842.8 215.6v1.3M808.8 221.9v1.3M927.7 217.3v1.3M756.2 223.5v1.3M710.8 225.2v1.3M917.2 220.2v1.3M693.3 218.9v1.3M845.3 216.3v1.3M709.3 223.3v1.3M960.3 222.9v1.3M690.7 217.5v1.3M833.2 219.5v1.3M923.1 224.2v1.3M819.5 223.1v1.3M903.9 225.6v1.3M827.8 218.4v1.3M873.0 216.9v1.3M861.0 223.0v1.3M805.8 224.2v1.3M890.5 222.4v1.3M808.8 217.4v1.3M939.7 216.8v1.3M734.1 225.1v1.3M782.4 224.9v1.3M921.7 222.9v1.3M708.9 222.6v1.3M740.9 222.3v1.3M726.4 225.8v1.3M865.3 225.7v1.3M903.5 225.9v1.3M880.5 224.0v1.3M697.4 223.6v1.3M869.4 224.5v1.3M897.3 221.6v1.3M816.0 225.8v1.3M818.9 221.8v1.3M861.2 223.8v1.3M691.3 225.2v1.3M724.2 224.0v1.3M871.0 224.2v1.3M769.9 223.0v1.3M939.2 221.0v1.3M767.0 222.0v1.3M717.0 222.6v1.3M942.0 223.5v1.3M841.2 216.5v1.3M958.5 222.5v1.3M726.8 225.2v1.3M795.6 225.9v1.3M754.0 225.1v1.3M691.6 224.5v1.3M746.7 225.1v1.3M753.6 218.1v1.3M773.5 224.8v1.3M881.8 222.5v1.3M935.7 224.9v1.3M810.8 219.7v1.3M716.1 218.2v1.3M847.1 218.4v1.3M764.8 220.2v1.3M797.0 222.7v1.3M793.5 222.2v1.3M879.1 220.5v1.3M868.5 222.8v1.3M861.3 224.8v1.3M715.0 216.8v1.3M792.1 225.2v1.3M802.1 224.3v1.3M688.4 225.5v1.3M846.0 224.7v1.3M895.8 225.4v1.3M720.1 222.4v1.3M783.1 222.8v1.3M916.4 223.2v1.3M722.2 225.7v1.3M757.9 222.2v1.3M734.0 225.4v1.3M909.1 224.0v1.3M933.2 219.6v1.3M944.5 222.5v1.3M846.2 220.3v1.3M940.7 224.4v1.3M815.4 224.0v1.3M882.2 220.3v1.3M869.8 221.2v1.3M694.6 221.6v1.3M836.6 223.3v1.3M811.7 220.5v1.3M882.9 223.1v1.3M885.6 224.7v1.3M699.3 219.4v1.3M888.4 224.0v1.3M839.4 220.2v1.3M923.1 218.7v1.3M764.1 224.0v1.3M801.1 224.1v1.3M771.3 220.8v1.3M934.2 222.8v1.3M827.2 219.4v1.3M794.3 219.3v1.3M775.7 216.0v1.3M859.2 223.2v1.3M966.6 225.2v1.3M867.1 220.4v1.3M798.2 223.7v1.3M742.6 223.4v1.3M828.4 224.4v1.3M950.1 225.5v1.3M809.2 225.2v1.3M845.6 213.7v1.3M748.2 225.8v1.3M754.7 222.9v1.3M757.9 220.5v1.3M775.4 223.5v1.3M806.8 223.8v1.3M925.0 220.3v1.3M886.6 225.4v1.3M711.5 223.0v1.3M718.4 218.9v1.3M714.3 223.2v1.3M899.7 223.0v1.3M737.6 225.0v1.3M735.7 219.8v1.3M781.3 225.8v1.3M928.3 223.7v1.3M935.3 224.4v1.3M782.0 222.2v1.3M968.0 224.4v1.3M706.7 225.0v1.3M698.4 219.2v1.3M956.5 221.4v1.3M801.6 224.1v1.3M805.8 225.5v1.3M951.2 219.0v1.3M878.8 224.1v1.3M778.1 224.7v1.3M794.2 224.5v1.3M735.1 225.8v1.3M714.0 219.1v1.3M871.3 223.5v1.3M719.6 221.8v1.3M773.4 217.1v1.3M698.3 223.4v1.3M935.1 223.3v1.3M871.7 225.7v1.3M738.1 222.3v1.3M887.2 216.4v1.3M707.3 222.6v1.3M867.5 216.8v1.3M773.4 217.5v1.3M865.9 223.1v1.3M759.2 222.5v1.3M815.6 219.9v1.3M800.8 225.4v1.3M854.8 223.8v1.3M815.8 217.9v1.3M812.4 223.4v1.3M753.1 226.0v1.3M889.4 218.8v1.3M759.5 218.7v1.3M912.6 224.3v1.3M822.7 222.9v1.3M863.7 216.1v1.3M883.4 219.9v1.3M745.4 224.3v1.3M694.0 220.9v1.3M924.0 223.3v1.3M933.2 219.3v1.3M857.4 225.1v1.3M703.6 224.5v1.3M770.0 220.1v1.3M791.4 225.4v1.3M742.0 221.9v1.3M954.7 220.3v1.3M732.2 224.8v1.3M958.1 222.5v1.3M918.2 224.0v1.3M853.5 215.2v1.3M834.6 223.3v1.3M779.4 222.7v1.3M691.3 217.8v1.3M849.4 222.4v1.3M823.0 220.9v1.3M818.2 223.5v1.3M687.9 223.4v1.3M960.2 225.7v1.3M735.3 223.0v1.3M829.9 223.5v1.3M716.0 221.6v1.3M804.7 221.3v1.3M945.8 220.6v1.3M744.9 225.8v1.3M948.9 224.1v1.3M792.2 222.9v1.3M713.7 224.2v1.3M844.0 217.4v1.3M907.8 223.2v1.3M891.5 221.2v1.3M688.0 222.1v1.3M806.9 222.8v1.3M740.7 225.3v1.3M735.7 217.8v1.3M819.2 219.1v1.3M768.5 218.4v1.3M883.7 222.1v1.3M859.4 219.2v1.3M857.1 224.5v1.3M942.5 224.0v1.3M870.3 223.3v1.3M812.1 212.9v1.3M883.0 225.8v1.3" stroke="#a8dc20" stroke-width="1.1" fill="none"/><path d="M687.3 253.94L687.8 254.14L688.3 254.31L688.8 254.44L689.3 254.49L689.8 254.48L690.3 254.40L690.8 254.25L691.3 254.07L691.8 253.87L692.3 253.68L692.8 253.52L693.3 253.41L693.8 253.36L694.3 253.38L694.8 253.45L695.3 253.57L695.8 253.71L696.3 253.85L696.8 253.96L697.3 254.03L697.8 254.03L698.3 253.97L698.8 253.84L699.3 253.67L699.8 253.46L700.3 253.24L700.8 253.04L701.3 252.87L701.8 252.77L702.3 252.74L702.8 252.77L703.3 252.87L703.8 253.03L704.3 253.20L704.8 253.38L705.3 253.53L705.8 253.61L706.3 253.60L706.8 253.47L707.3 253.20L707.8 252.78L708.3 252.25L708.8 251.67L709.3 251.11L709.8 250.71L710.3 250.53L710.8 250.63L711.3 250.99L711.8 251.55L712.3 252.19L712.8 252.83L713.3 253.38L713.8 253.82L714.3 254.12L714.8 254.29L715.3 254.35L715.8 254.31L716.3 254.20L716.8 254.05L717.3 253.88L717.8 253.72L718.3 253.59L718.8 253.51L719.3 253.50L719.8 253.54L720.3 253.64L720.8 253.78L721.3 253.94L721.8 254.09L722.3 254.21L722.8 254.28L723.3 254.29L723.8 254.23L724.3 254.10L724.8 253.92L725.3 253.70L725.8 253.47L726.3 253.26L726.8 253.09L727.3 252.97L727.8 252.92L728.3 252.94L728.8 253.02L729.3 253.14L729.8 253.30L730.3 253.45L730.8 253.59L731.3 253.67L731.8 253.71L732.3 253.68L732.8 253.59L733.3 253.45L733.8 253.28L734.3 253.11L734.8 252.96L735.3 252.85L735.8 252.80L736.3 252.82L736.8 252.91L737.3 253.06L737.8 253.26L738.3 253.48L738.8 253.71L739.3 253.90L739.8 254.05L740.3 254.14L740.8 254.16L741.3 254.11L741.8 254.01L742.3 253.87L742.8 253.73L743.3 253.59L743.8 253.49L744.3 253.44L744.8 253.46L745.3 253.54L745.8 253.67L746.3 253.84L746.8 254.02L747.3 254.20L747.8 254.35L748.3 254.44L748.8 254.47L749.3 254.42L749.8 254.31L750.3 254.14L750.8 253.93L751.3 253.71L751.8 253.47L752.3 253.21L752.8 252.86L753.3 252.30L753.8 251.35L754.3 249.84L754.8 247.76L755.3 245.37L755.8 243.21L756.3 241.95L756.8 242.03L757.3 243.42L757.8 245.66L758.3 248.07L758.8 250.10L759.3 251.47L759.8 252.23L760.3 252.56L760.8 252.65L761.3 252.67L761.8 252.70L762.3 252.77L762.8 252.91L763.3 253.09L763.8 253.29L764.3 253.49L764.8 253.67L765.3 253.81L765.8 253.88L766.3 253.89L766.8 253.84L767.3 253.74L767.8 253.60L768.3 253.46L768.8 253.34L769.3 253.26L769.8 253.23L770.3 253.27L770.8 253.37L771.3 253.52L771.8 253.72L772.3 253.93L772.8 254.14L773.3 254.31L773.8 254.43L774.3 254.48L774.8 254.46L775.3 254.38L775.8 254.23L776.3 254.05L776.8 253.86L777.3 253.68L777.8 253.53L778.3 253.44L778.8 253.41L779.3 253.44L779.8 253.53L780.3 253.66L780.8 253.80L781.3 253.94L781.8 254.04L782.3 254.10L782.8 254.09L783.3 254.02L783.8 253.88L784.3 253.69L784.8 253.48L785.3 253.25L785.8 253.05L786.3 252.89L786.8 252.80L787.3 252.77L787.8 252.81L788.3 252.92L788.8 253.07L789.3 253.24L789.8 253.42L790.3 253.57L790.8 253.67L791.3 253.72L791.8 253.70L792.3 253.63L792.8 253.51L793.3 253.36L793.8 253.21L794.3 253.08L794.8 252.99L795.3 252.96L795.8 253.00L796.3 253.11L796.8 253.28L797.3 253.49L797.8 253.71L798.3 253.93L798.8 254.12L799.3 254.26L799.8 254.33L800.3 254.33L800.8 254.27L801.3 254.15L801.8 253.99L802.3 253.83L802.8 253.68L803.3 253.57L803.8 253.51L804.3 253.51L804.8 253.57L805.3 253.69L805.8 253.84L806.3 254.00L806.8 254.16L807.3 254.28L807.8 254.34L808.3 254.34L808.8 254.27L809.3 254.14L809.8 253.95L810.3 253.73L810.8 253.50L811.3 253.29L811.8 253.13L812.3 253.02L812.8 252.98L813.3 253.00L813.8 253.09L814.3 253.22L814.8 253.37L815.3 253.52L815.8 253.64L816.3 253.71L816.8 253.72L817.3 253.68L817.8 253.57L818.3 253.42L818.8 253.24L819.3 253.06L819.8 252.91L820.3 252.80L820.8 252.76L821.3 252.78L821.8 252.86L822.3 252.96L822.8 253.01L823.3 252.86L823.8 252.33L824.3 251.21L824.8 249.36L825.3 246.91L825.8 244.31L826.3 242.27L826.8 241.42L827.3 242.05L827.8 243.91L828.3 246.39L828.8 248.82L829.3 250.76L829.8 252.10L830.3 252.93L830.8 253.44L831.3 253.77L831.8 254.03L832.3 254.23L832.8 254.38L833.3 254.47L833.8 254.49L834.3 254.44L834.8 254.32L835.3 254.15L835.8 253.94L836.3 253.73L836.8 253.54L837.3 253.38L837.8 253.28L838.3 253.24L838.8 253.27L839.3 253.36L839.8 253.48L840.3 253.62L840.8 253.75L841.3 253.85L841.8 253.90L842.3 253.89L842.8 253.82L843.3 253.68L843.8 253.50L844.3 253.30L844.8 253.09L845.3 252.91L845.8 252.78L846.3 252.71L846.8 252.71L847.3 252.79L847.8 252.92L848.3 253.10L848.8 253.30L849.3 253.49L849.8 253.66L850.3 253.78L850.8 253.83L851.3 253.83L851.8 253.76L852.3 253.65L852.8 253.51L853.3 253.37L853.8 253.25L854.3 253.18L854.8 253.17L855.3 253.22L855.8 253.33L856.3 253.50L856.8 253.71L857.3 253.93L857.8 254.13L858.3 254.30L858.8 254.42L859.3 254.46L859.8 254.44L860.3 254.34L860.8 254.20L861.3 254.02L861.8 253.84L862.3 253.67L862.8 253.54L863.3 253.46L863.8 253.45L864.3 253.50L864.8 253.60L865.3 253.74L865.8 253.89L866.3 254.02L866.8 254.12L867.3 254.17L867.8 254.15L868.3 254.06L868.8 253.92L869.3 253.72L869.8 253.50L870.3 253.27L870.8 253.08L871.3 252.92L871.8 252.83L872.3 252.81L872.8 252.86L873.3 252.97L873.8 253.12L874.3 253.29L874.8 253.45L875.3 253.59L875.8 253.68L876.3 253.70L876.8 253.67L877.3 253.58L877.8 253.44L878.3 253.29L878.8 253.13L879.3 253.00L879.8 252.92L880.3 252.90L880.8 252.95L881.3 253.07L881.8 253.25L882.3 253.46L882.8 253.69L883.3 253.91L883.8 254.09L884.3 254.22L884.8 254.28L885.3 254.27L885.8 254.20L886.3 254.08L886.8 253.93L887.3 253.77L887.8 253.63L888.3 253.54L888.8 253.49L889.3 253.51L889.8 253.59L890.3 253.73L890.8 253.89L891.3 254.06L891.8 254.20L892.3 254.29L892.8 254.27L893.3 254.05L893.8 253.50L894.3 252.47L894.8 250.83L895.3 248.59L895.8 246.05L896.3 243.75L896.8 242.33L897.3 242.25L897.8 243.49L898.3 245.63L898.8 248.04L899.3 250.19L899.8 251.78L900.3 252.79L900.8 253.36L901.3 253.63L901.8 253.71L902.3 253.67L902.8 253.55L903.3 253.39L903.8 253.21L904.3 253.02L904.8 252.87L905.3 252.77L905.8 252.73L906.3 252.76L906.8 252.87L907.3 253.03L907.8 253.23L908.3 253.45L908.8 253.66L909.3 253.83L909.8 253.96L910.3 254.02L910.8 254.01L911.3 253.94L911.8 253.83L912.3 253.70L912.8 253.56L913.3 253.44L913.8 253.36L914.3 253.34L914.8 253.36L915.3 253.41L915.8 253.42L916.3 253.31L916.8 253.02L917.3 252.50L917.8 251.81L918.3 251.10L918.8 250.60L919.3 250.47L919.8 250.74L920.3 251.30L920.8 251.95L921.3 252.50L921.8 252.88L922.3 253.08L922.8 253.19L923.3 253.25L923.8 253.33L924.3 253.44L924.8 253.57L925.3 253.71L925.8 253.84L926.3 253.93L926.8 253.97L927.3 253.94L927.8 253.85L928.3 253.70L928.8 253.51L929.3 253.30L929.8 253.09L930.3 252.91L930.8 252.78L931.3 252.72L931.8 252.73L932.3 252.81L932.8 252.94L933.3 253.12L933.8 253.31L934.3 253.49L934.8 253.64L935.3 253.74L935.8 253.77L936.3 253.72L936.8 253.58L937.3 253.35L937.8 253.01L938.3 252.58L938.8 252.06L939.3 251.50L939.8 250.97L940.3 250.56L940.8 250.38L941.3 250.48L941.8 250.87L942.3 251.47L942.8 252.18L943.3 252.88L943.8 253.45L944.3 253.86L944.8 254.08L945.3 254.14L945.8 254.08L946.3 253.95L946.8 253.79L947.3 253.65L947.8 253.54L948.3 253.48L948.8 253.49L949.3 253.55L949.8 253.66L950.3 253.80L950.8 253.93L951.3 254.02L951.8 254.05L952.3 253.97L952.8 253.76L953.3 253.40L953.8 252.88L954.3 252.23L954.8 251.47L955.3 250.68L955.8 249.94L956.3 249.33L956.8 248.93L957.3 248.76L957.8 248.79L958.3 248.92L958.8 249.00L959.3 248.90L959.8 248.59L960.3 248.16L960.8 247.82L961.3 247.77L961.8 248.06L962.3 248.55L962.8 248.94L963.3 248.94L963.8 248.37L964.3 247.21L964.8 245.59L965.3 243.74L965.8 241.94L966.3 240.48L966.8 239.59L967.3 239.44L967.8 240.05L968.3 241.35" stroke="#ffffff" stroke-width="1.3" fill="none" stroke-linejoin="round"/></svg>
<span class="t" style="top:78.36px;font-size:7.2px;color:#e4e4e4;left:687.30px;">Rng 398.1072 mV</span>
<span class="t" style="top:86.86px;font-size:7.2px;color:#e4e4e4;right:339.30px;">5</span>
<span class="t" style="top:95.26px;font-size:7.2px;color:#e4e4e4;right:339.30px;">%</span>
<span class="t" style="top:143.16px;font-size:7.2px;color:#e4e4e4;right:339.30px;">LinMag</span>
<span class="t" style="top:190.86px;font-size:7.2px;color:#e4e4e4;right:339.30px;">500</span>
<span class="t" style="top:200.06px;font-size:7.2px;color:#e4e4e4;right:339.30px;">m%</span>
<span class="t" style="top:208.86px;font-size:7.2px;color:#e4e4e4;right:339.30px;">/div</span>
<span class="t" style="top:255.66px;font-size:7.2px;color:#e4e4e4;right:339.30px;">0</span>
<span class="t" style="top:264.06px;font-size:7.2px;color:#e4e4e4;right:339.30px;">%</span>
<span class="t" style="top:88.86px;font-size:7.2px;color:#e4e4e4;right:57.30px;transform:scaleX(0.8994);transform-origin:100% 0;">CAL?</span>
<span class="t" style="top:274.06px;font-size:7.2px;color:#e4e4e4;left:687.30px;">Start 0  sym</span>
<span class="t" style="top:274.06px;font-size:7.2px;color:#e4e4e4;right:55.90px;">Stop 139  sym</span>
<svg width="1024" height="601"><ellipse cx="827.6" cy="220.3" rx="29.6" ry="72.3" fill="none" stroke="#e81010" stroke-width="1.4"/><ellipse cx="905.4" cy="220.3" rx="29.6" ry="72.3" fill="none" stroke="#e81010" stroke-width="1.4"/></svg>
<svg width="1024" height="601"><path d="M67.30 324.8V510.2" stroke="#4a4a4a" stroke-width="0.7"/><path d="M39.2 343.34H320.2" stroke="#4a4a4a" stroke-width="0.7"/><path d="M95.40 324.8V510.2" stroke="#4a4a4a" stroke-width="0.7"/><path d="M39.2 361.88H320.2" stroke="#4a4a4a" stroke-width="0.7"/><path d="M123.50 324.8V510.2" stroke="#4a4a4a" stroke-width="0.7"/><path d="M39.2 380.42H320.2" stroke="#4a4a4a" stroke-width="0.7"/><path d="M151.60 324.8V510.2" stroke="#4a4a4a" stroke-width="0.7"/><path d="M39.2 398.96H320.2" stroke="#4a4a4a" stroke-width="0.7"/><path d="M179.70 324.8V510.2" stroke="#4a4a4a" stroke-width="0.7"/><path d="M39.2 417.50H320.2" stroke="#4a4a4a" stroke-width="0.7"/><path d="M207.80 324.8V510.2" stroke="#4a4a4a" stroke-width="0.7"/><path d="M39.2 436.04H320.2" stroke="#4a4a4a" stroke-width="0.7"/><path d="M235.90 324.8V510.2" stroke="#4a4a4a" stroke-width="0.7"/><path d="M39.2 454.58H320.2" stroke="#4a4a4a" stroke-width="0.7"/><path d="M264.00 324.8V510.2" stroke="#4a4a4a" stroke-width="0.7"/><path d="M39.2 473.12H320.2" stroke="#4a4a4a" stroke-width="0.7"/><path d="M292.10 324.8V510.2" stroke="#4a4a4a" stroke-width="0.7"/><path d="M39.2 491.66H320.2" stroke="#4a4a4a" stroke-width="0.7"/><rect x="39.2" y="324.8" width="281.0" height="185.39999999999998" fill="none" stroke="#5e5e5e" stroke-width="1.3"/></svg>
<svg width="1024" height="601"><path d="M39.2 447.0L39.7 448.2L40.2 449.4L40.7 449.7L41.2 449.3L41.7 448.1L42.2 448.4L42.7 447.7L43.2 446.6L43.7 447.5L44.2 449.0L44.7 448.3L45.2 447.7L45.7 446.8L46.2 447.9L46.7 447.4L47.2 448.0L47.7 448.5L48.2 445.5L48.7 447.9L49.2 446.4L49.7 447.0L50.2 446.6L50.7 449.2L51.2 448.7L51.7 448.5L52.2 447.2L52.7 446.4L53.2 447.6L53.7 448.2L54.2 447.9L54.7 448.8L55.2 447.6L55.7 450.0L56.2 448.7L56.7 450.2L57.2 448.3L57.7 447.7L58.2 447.1L58.7 448.9L59.2 449.1L59.7 446.8L60.2 443.8L60.7 440.8L61.2 437.9L61.7 434.9L62.2 431.9L62.7 428.9L63.2 425.9L63.7 422.9L64.2 420.0L64.7 417.0L65.2 414.0L65.7 412.3L66.2 410.6L66.7 408.8L67.2 407.1L67.7 405.4L68.2 403.7L68.7 401.9L69.2 400.2L69.7 398.5L70.2 396.8L70.7 395.0L71.2 390.3L71.7 381.2L72.2 372.0L72.7 362.8L73.2 353.7L73.7 348.5L74.2 349.1L74.7 349.2L75.2 349.8L75.7 349.6L76.2 348.9L76.7 347.9L77.2 348.6L77.7 348.2L78.2 349.9L78.7 350.3L79.2 348.6L79.7 349.1L80.2 349.4L80.7 348.8L81.2 347.8L81.7 347.9L82.2 349.5L82.7 348.7L83.2 348.9L83.7 349.1L84.2 348.3L84.7 348.8L85.2 348.0L85.7 349.9L86.2 349.7L86.7 349.1L87.2 348.4L87.7 347.8L88.2 347.5L88.7 348.6L89.2 347.8L89.7 348.4L90.2 345.5L90.7 345.8L91.2 346.7L91.7 349.5L92.2 349.0L92.7 349.7L93.2 347.9L93.7 348.2L94.2 349.2L94.7 349.5L95.2 348.3L95.7 350.5L96.2 349.2L96.7 348.0L97.2 349.0L97.7 347.9L98.2 348.6L98.7 348.5L99.2 347.6L99.7 348.7L100.2 349.9L100.7 348.0L101.2 348.6L101.7 349.3L102.2 350.1L102.7 348.3L103.2 348.7L103.7 347.4L104.2 349.8L104.7 350.1L105.2 348.5L105.7 348.1L106.2 349.4L106.7 349.2L107.2 349.3L107.7 347.3L108.2 348.6L108.7 348.0L109.2 346.9L109.7 350.0L110.2 349.8L110.7 348.9L111.2 349.3L111.7 349.7L112.2 349.1L112.7 349.2L113.2 349.7L113.7 349.7L114.2 349.5L114.7 348.1L115.2 348.7L115.7 348.1L116.2 349.4L116.7 349.6L117.2 347.6L117.7 346.7L118.2 348.6L118.7 350.1L119.2 349.9L119.7 347.9L120.2 344.7L120.7 348.4L121.2 347.3L121.7 349.4L122.2 350.8L122.7 349.3L123.2 348.6L123.7 351.1L124.2 348.9L124.7 348.3L125.2 348.4L125.7 347.5L126.2 349.3L126.7 347.3L127.2 348.1L127.7 348.1L128.2 349.1L128.7 347.9L129.2 348.4L129.7 349.5L130.2 348.3L130.7 347.8L131.2 347.7L131.7 348.5L132.2 348.2L132.7 348.7L133.2 349.6L133.7 348.5L134.2 349.7L134.7 349.3L135.2 350.2L135.7 350.0L136.2 349.0L136.7 347.7L137.2 348.7L137.7 346.5L138.2 349.5L138.7 347.9L139.2 349.1L139.7 348.1L140.2 350.5L140.7 349.0L141.2 349.0L141.7 348.6L142.2 349.8L142.7 347.9L143.2 349.4L143.7 349.7L144.2 350.4L144.7 347.1L145.2 347.0L145.7 347.5L146.2 349.6L146.7 349.4L147.2 346.5L147.7 348.9L148.2 349.3L148.7 349.1L149.2 349.0L149.7 348.9L150.2 348.3L150.7 348.6L151.2 348.7L151.7 348.7L152.2 347.8L152.7 347.9L153.2 347.8L153.7 349.4L154.2 346.9L154.7 349.3L155.2 349.1L155.7 350.7L156.2 347.6L156.7 349.4L157.2 348.7L157.7 348.3L158.2 348.5L158.7 349.8L159.2 348.0L159.7 347.3L160.2 349.0L160.7 348.3L161.2 347.5L161.7 348.2L162.2 349.1L162.7 348.4L163.2 348.0L163.7 348.9L164.2 348.5L164.7 346.9L165.2 347.2L165.7 348.9L166.2 347.3L166.7 347.0L167.2 349.2L167.7 348.9L168.2 349.6L168.7 349.2L169.2 350.5L169.7 347.7L170.2 348.8L170.7 347.4L171.2 347.5L171.7 349.0L172.2 349.5L172.7 349.0L173.2 345.2L173.7 345.1L174.2 348.6L174.7 349.2L175.2 348.9L175.7 348.9L176.2 349.5L176.7 349.0L177.2 349.9L177.7 346.7L178.2 351.9L178.7 349.4L179.2 347.7L179.7 348.8L180.2 348.9L180.7 349.9L181.2 350.3L181.7 348.4L182.2 350.1L182.7 347.0L183.2 350.1L183.7 348.9L184.2 349.2L184.7 350.1L185.2 349.9L185.7 349.2L186.2 349.0L186.7 348.4L187.2 350.0L187.7 348.6L188.2 350.8L188.7 345.5L189.2 350.5L189.7 349.8L190.2 347.8L190.7 348.0L191.2 347.8L191.7 348.5L192.2 347.0L192.7 350.0L193.2 348.4L193.7 347.8L194.2 348.8L194.7 348.9L195.2 349.6L195.7 350.1L196.2 347.3L196.7 347.8L197.2 347.8L197.7 346.2L198.2 349.1L198.7 350.0L199.2 349.6L199.7 348.4L200.2 349.7L200.7 347.5L201.2 349.0L201.7 349.5L202.2 349.0L202.7 347.0L203.2 348.2L203.7 348.0L204.2 349.3L204.7 347.5L205.2 349.5L205.7 350.2L206.2 349.7L206.7 347.9L207.2 349.4L207.7 349.1L208.2 349.0L208.7 347.8L209.2 349.3L209.7 346.6L210.2 349.0L210.7 351.1L211.2 349.6L211.7 349.7L212.2 349.0L212.7 350.3L213.2 349.6L213.7 348.8L214.2 349.0L214.7 346.6L215.2 349.5L215.7 348.6L216.2 348.6L216.7 349.2L217.2 348.2L217.7 349.2L218.2 348.1L218.7 349.9L219.2 348.5L219.7 349.3L220.2 349.5L220.7 349.2L221.2 350.6L221.7 348.0L222.2 348.8L222.7 350.2L223.2 347.5L223.7 348.7L224.2 349.7L224.7 349.0L225.2 348.9L225.7 349.3L226.2 346.2L226.7 349.1L227.2 347.2L227.7 349.1L228.2 347.8L228.7 349.8L229.2 348.9L229.7 348.6L230.2 347.6L230.7 348.7L231.2 350.5L231.7 348.5L232.2 348.8L232.7 348.8L233.2 349.9L233.7 349.1L234.2 349.3L234.7 348.1L235.2 349.0L235.7 348.4L236.2 348.5L236.7 350.4L237.2 349.8L237.7 350.4L238.2 347.5L238.7 348.4L239.2 348.2L239.7 346.7L240.2 349.0L240.7 349.2L241.2 348.1L241.7 348.4L242.2 348.1L242.7 347.5L243.2 348.7L243.7 346.8L244.2 349.4L244.7 348.2L245.2 349.0L245.7 349.3L246.2 349.5L246.7 348.1L247.2 348.8L247.7 348.5L248.2 345.3L248.7 347.3L249.2 347.4L249.7 347.8L250.2 348.8L250.7 349.3L251.2 348.8L251.7 346.8L252.2 349.4L252.7 349.8L253.2 348.7L253.7 349.3L254.2 348.7L254.7 349.6L255.2 348.5L255.7 349.6L256.2 347.7L256.7 348.1L257.2 349.0L257.7 348.5L258.2 347.8L258.7 348.2L259.2 349.0L259.7 349.6L260.2 347.7L260.7 349.2L261.2 348.4L261.7 346.1L262.2 348.6L262.7 350.1L263.2 348.6L263.7 348.6L264.2 349.9L264.7 350.0L265.2 350.5L265.7 349.5L266.2 349.0L266.7 349.8L267.2 348.6L267.7 348.6L268.2 346.2L268.7 348.5L269.2 347.8L269.7 351.3L270.2 348.7L270.7 347.1L271.2 348.0L271.7 348.8L272.2 349.9L272.7 349.4L273.2 348.3L273.7 348.5L274.2 349.0L274.7 347.8L275.2 348.6L275.7 350.1L276.2 348.5L276.7 348.6L277.2 348.8L277.7 349.9L278.2 348.7L278.7 348.2L279.2 350.0L279.7 348.7L280.2 350.5L280.7 349.8L281.2 346.9L281.7 349.2L282.2 348.7L282.7 346.2L283.2 347.9L283.7 349.1L284.2 348.8L284.7 349.6L285.2 349.0L285.7 347.9L286.2 353.7L286.7 362.8L287.2 372.0L287.7 381.2L288.2 390.3L288.7 395.0L289.2 396.8L289.7 398.5L290.2 400.2L290.7 401.9L291.2 403.7L291.7 405.4L292.2 407.1L292.7 408.8L293.2 410.6L293.7 412.3L294.2 414.0L294.7 417.0L295.2 420.0L295.7 422.9L296.2 425.9L296.7 428.9L297.2 431.9L297.7 434.9L298.2 437.9L298.7 440.8L299.2 443.8L299.7 446.8L300.2 447.7L300.7 448.2L301.2 446.5L301.7 449.6L302.2 447.6L302.7 447.9L303.2 446.5L303.7 446.4L304.2 447.1L304.7 448.8L305.2 447.0L305.7 449.1L306.2 448.3L306.7 447.1L307.2 449.9L307.7 447.9L308.2 446.3L308.7 448.5L309.2 446.7L309.7 447.7L310.2 448.0L310.7 446.4L311.2 449.0L311.7 448.6L312.2 449.2L312.7 447.8L313.2 448.8L313.7 448.0L314.2 448.8L314.7 447.9L315.2 447.2L315.7 448.3L316.2 447.8L316.7 450.0L317.2 447.7L317.7 448.7L318.2 447.5L318.7 449.9L319.2 448.0L319.7 447.3L320.2 447.9L320.2 510.2L319.7 510.2L319.2 510.2L318.7 510.2L318.2 510.2L317.7 510.2L317.2 510.2L316.7 510.2L316.2 510.2L315.7 510.2L315.2 510.2L314.7 510.2L314.2 510.2L313.7 510.2L313.2 510.2L312.7 510.2L312.2 510.2L311.7 510.2L311.2 510.2L310.7 510.2L310.2 510.2L309.7 510.2L309.2 510.2L308.7 510.2L308.2 510.2L307.7 510.2L307.2 510.2L306.7 510.2L306.2 510.2L305.7 510.2L305.2 510.2L304.7 510.2L304.2 510.2L303.7 510.2L303.2 510.2L302.7 510.2L302.2 510.2L301.7 510.2L301.2 510.2L300.7 510.2L300.2 510.2L299.7 510.2L299.2 510.2L298.7 510.2L298.2 510.2L297.7 510.2L297.2 510.2L296.7 510.2L296.2 510.2L295.7 486.3L295.2 489.1L294.7 490.7L294.2 490.5L293.7 488.7L293.2 488.8L292.7 485.9L292.2 488.0L291.7 489.4L291.2 491.6L290.7 485.6L290.2 493.6L289.7 467.1L289.2 456.6L288.7 491.7L288.2 486.1L287.7 489.9L287.2 450.0L286.7 450.0L286.2 450.0L285.7 415.2L285.2 418.5L284.7 413.7L284.2 436.3L283.7 419.6L283.2 414.7L282.7 434.8L282.2 425.5L281.7 457.5L281.2 420.1L280.7 418.3L280.2 418.2L279.7 422.4L279.2 421.6L278.7 446.0L278.2 416.5L277.7 417.1L277.2 416.2L276.7 414.0L276.2 438.2L275.7 420.0L275.2 417.5L274.7 435.1L274.2 422.6L273.7 424.3L273.2 419.9L272.7 424.3L272.2 416.3L271.7 416.9L271.2 440.9L270.7 414.2L270.2 433.9L269.7 418.9L269.2 427.3L268.7 415.1L268.2 414.6L267.7 422.2L267.2 416.8L266.7 441.4L266.2 437.6L265.7 413.3L265.2 412.9L264.7 415.8L264.2 409.1L263.7 409.2L263.2 415.2L262.7 422.6L262.2 411.5L261.7 419.2L261.2 417.6L260.7 417.4L260.2 414.2L259.7 418.4L259.2 419.3L258.7 432.4L258.2 416.2L257.7 411.8L257.2 419.0L256.7 411.9L256.2 453.1L255.7 411.2L255.2 414.7L254.7 427.7L254.2 430.0L253.7 421.8L253.2 419.5L252.7 424.2L252.2 425.1L251.7 424.8L251.2 419.4L250.7 414.0L250.2 414.1L249.7 416.7L249.2 414.2L248.7 418.8L248.2 414.8L247.7 417.1L247.2 417.4L246.7 419.3L246.2 424.3L245.7 426.0L245.2 421.7L244.7 418.0L244.2 420.4L243.7 413.5L243.2 417.7L242.7 417.7L242.2 424.3L241.7 422.6L241.2 413.3L240.7 415.3L240.2 414.6L239.7 425.4L239.2 415.8L238.7 417.8L238.2 414.0L237.7 416.2L237.2 413.5L236.7 409.7L236.2 416.8L235.7 410.2L235.2 425.1L234.7 414.6L234.2 411.8L233.7 418.8L233.2 432.2L232.7 415.8L232.2 423.3L231.7 415.9L231.2 420.2L230.7 413.1L230.2 429.8L229.7 454.7L229.2 410.8L228.7 417.5L228.2 412.2L227.7 433.5L227.2 415.9L226.7 434.9L226.2 418.0L225.7 417.9L225.2 426.6L224.7 422.4L224.2 428.4L223.7 436.4L223.2 430.7L222.7 432.6L222.2 417.3L221.7 445.9L221.2 424.0L220.7 422.0L220.2 428.7L219.7 423.6L219.2 426.7L218.7 427.4L218.2 418.8L217.7 428.2L217.2 424.6L216.7 454.0L216.2 415.1L215.7 413.4L215.2 414.6L214.7 413.1L214.2 412.3L213.7 451.0L213.2 415.7L212.7 416.0L212.2 416.7L211.7 415.1L211.2 418.8L210.7 415.2L210.2 420.4L209.7 413.1L209.2 411.2L208.7 424.6L208.2 434.4L207.7 411.5L207.2 418.2L206.7 412.8L206.2 417.0L205.7 456.0L205.2 413.8L204.7 420.0L204.2 415.4L203.7 427.6L203.2 421.4L202.7 426.9L202.2 416.1L201.7 411.9L201.2 427.5L200.7 411.6L200.2 412.5L199.7 426.6L199.2 413.6L198.7 417.2L198.2 418.5L197.7 421.5L197.2 426.8L196.7 420.8L196.2 421.5L195.7 416.2L195.2 425.4L194.7 419.8L194.2 419.8L193.7 412.7L193.2 415.2L192.7 414.4L192.2 418.8L191.7 425.9L191.2 418.2L190.7 418.6L190.2 424.3L189.7 421.2L189.2 448.2L188.7 441.6L188.2 414.7L187.7 411.7L187.2 416.2L186.7 412.4L186.2 444.1L185.7 433.2L185.2 419.4L184.7 415.7L184.2 420.0L183.7 422.2L183.2 415.8L182.7 419.3L182.2 415.7L181.7 413.4L181.2 411.9L180.7 414.0L180.2 436.1L179.7 426.2L179.2 424.7L178.7 416.9L178.2 420.8L177.7 412.5L177.2 413.7L176.7 415.7L176.2 437.8L175.7 416.8L175.2 414.4L174.7 451.8L174.2 419.5L173.7 443.6L173.2 421.3L172.7 416.2L172.2 416.7L171.7 412.7L171.2 413.5L170.7 416.9L170.2 421.7L169.7 423.9L169.2 419.2L168.7 447.6L168.2 416.5L167.7 419.5L167.2 421.6L166.7 426.7L166.2 412.2L165.7 412.5L165.2 425.6L164.7 418.2L164.2 416.9L163.7 417.0L163.2 416.7L162.7 421.8L162.2 418.7L161.7 419.8L161.2 416.1L160.7 417.4L160.2 423.9L159.7 418.8L159.2 411.8L158.7 426.8L158.2 410.7L157.7 424.1L157.2 414.9L156.7 426.1L156.2 420.7L155.7 418.6L155.2 414.7L154.7 425.4L154.2 451.7L153.7 422.7L153.2 414.7L152.7 409.7L152.2 410.0L151.7 432.9L151.2 415.4L150.7 421.7L150.2 412.2L149.7 419.4L149.2 414.8L148.7 420.2L148.2 420.3L147.7 434.2L147.2 418.9L146.7 420.5L146.2 417.5L145.7 411.2L145.2 433.9L144.7 411.8L144.2 411.4L143.7 416.2L143.2 418.1L142.7 416.1L142.2 421.9L141.7 420.1L141.2 438.3L140.7 440.5L140.2 454.9L139.7 447.7L139.2 425.0L138.7 427.1L138.2 416.0L137.7 414.8L137.2 457.4L136.7 413.5L136.2 421.4L135.7 446.8L135.2 437.6L134.7 419.7L134.2 420.8L133.7 416.5L133.2 416.8L132.7 421.4L132.2 418.0L131.7 414.2L131.2 415.2L130.7 409.7L130.2 435.2L129.7 430.3L129.2 416.9L128.7 415.6L128.2 420.8L127.7 418.0L127.2 421.1L126.7 414.7L126.2 414.3L125.7 412.2L125.2 421.5L124.7 410.1L124.2 416.8L123.7 412.3L123.2 409.3L122.7 415.9L122.2 415.9L121.7 447.9L121.2 415.7L120.7 419.6L120.2 416.1L119.7 419.9L119.2 416.2L118.7 416.2L118.2 416.0L117.7 412.4L117.2 413.6L116.7 412.6L116.2 429.3L115.7 433.6L115.2 428.4L114.7 416.3L114.2 444.5L113.7 418.8L113.2 435.7L112.7 423.6L112.2 430.6L111.7 416.0L111.2 431.9L110.7 413.9L110.2 414.2L109.7 430.2L109.2 426.8L108.7 416.2L108.2 419.5L107.7 419.6L107.2 418.2L106.7 418.1L106.2 417.0L105.7 420.7L105.2 417.3L104.7 429.3L104.2 412.0L103.7 414.4L103.2 427.8L102.7 409.2L102.2 409.7L101.7 428.6L101.2 435.9L100.7 436.4L100.2 414.3L99.7 417.2L99.2 416.0L98.7 415.4L98.2 430.6L97.7 412.9L97.2 413.1L96.7 408.9L96.2 441.1L95.7 414.4L95.2 416.8L94.7 425.2L94.2 421.7L93.7 413.7L93.2 439.3L92.7 416.0L92.2 437.6L91.7 417.6L91.2 420.8L90.7 419.9L90.2 413.1L89.7 413.1L89.2 424.0L88.7 431.8L88.2 418.7L87.7 429.3L87.2 437.5L86.7 417.1L86.2 420.9L85.7 439.6L85.2 419.5L84.7 417.9L84.2 433.5L83.7 430.6L83.2 433.9L82.7 413.9L82.2 430.0L81.7 415.7L81.2 421.7L80.7 433.9L80.2 435.5L79.7 427.0L79.2 419.5L78.7 417.7L78.2 419.5L77.7 416.5L77.2 414.3L76.7 414.8L76.2 412.7L75.7 410.8L75.2 446.5L74.7 411.8L74.2 409.8L73.7 426.4L73.2 418.0L72.7 450.0L72.2 450.0L71.7 491.5L71.2 487.3L70.7 490.1L70.2 455.2L69.7 462.1L69.2 490.3L68.7 490.9L68.2 492.2L67.7 489.4L67.2 489.1L66.7 486.0L66.2 486.4L65.7 491.1L65.2 490.7L64.7 491.2L64.2 493.2L63.7 492.5L63.2 510.2L62.7 510.2L62.2 510.2L61.7 510.2L61.2 510.2L60.7 510.2L60.2 510.2L59.7 510.2L59.2 510.2L58.7 510.2L58.2 510.2L57.7 510.2L57.2 510.2L56.7 510.2L56.2 510.2L55.7 510.2L55.2 510.2L54.7 510.2L54.2 510.2L53.7 510.2L53.2 510.2L52.7 510.2L52.2 510.2L51.7 510.2L51.2 510.2L50.7 510.2L50.2 510.2L49.7 510.2L49.2 510.2L48.7 510.2L48.2 510.2L47.7 510.2L47.2 510.2L46.7 510.2L46.2 510.2L45.7 510.2L45.2 510.2L44.7 510.2L44.2 510.2L43.7 510.2L43.2 510.2L42.7 510.2L42.2 510.2L41.7 510.2L41.2 510.2L40.7 510.2L40.2 510.2L39.7 510.2L39.2 510.2Z" fill="#3cff00"/></svg>
<span class="t" style="top:316.16px;font-size:7.2px;color:#e4e4e4;left:39.20px;">Rng 2 dBm</span>
<span class="t" style="top:325.26px;font-size:7.2px;color:#e4e4e4;right:987.40px;">-36</span>
<span class="t" style="top:334.06px;font-size:7.2px;color:#e4e4e4;right:987.40px;">dBm</span>
<span class="t" style="top:381.46px;font-size:7.2px;color:#e4e4e4;right:987.40px;">LogMag</span>
<span class="t" style="top:428.86px;font-size:7.2px;color:#e4e4e4;right:987.40px;">10</span>
<span class="t" style="top:438.06px;font-size:7.2px;color:#e4e4e4;right:987.40px;">dB</span>
<span class="t" style="top:446.86px;font-size:7.2px;color:#e4e4e4;right:987.40px;">/div</span>
<span class="t" style="top:493.86px;font-size:7.2px;color:#e4e4e4;right:987.40px;">-136</span>
<span class="t" style="top:502.96px;font-size:7.2px;color:#e4e4e4;right:987.40px;">dBm</span>
<span class="t" style="top:326.86px;font-size:7.2px;color:#e4e4e4;right:705.40px;transform:scaleX(0.8994);transform-origin:100% 0;">CAL?</span>
<span class="t" style="top:511.96px;font-size:7.2px;color:#e4e4e4;left:39.20px;">Center 3.6 GHz</span>
<span class="t" style="top:511.96px;font-size:7.2px;color:#e4e4e4;right:704.00px;">Span 24 MHz</span>
<span class="t" style="top:521.36px;font-size:7.2px;color:#e4e4e4;left:39.20px;">Res BW 381.937  Hz</span>
<span class="t" style="top:521.36px;font-size:7.2px;color:#e4e4e4;right:704.00px;">TimeLen 10 mSec</span>
<div class="b" style="left:330px;top:313px;width:308px;height:216.4px;overflow:hidden;">
<span class="t" style="left:4.60px;top:17.56px;font-size:7.2px;color:#e21256;">EVM</span>
<span class="t" style="left:102.60px;top:17.56px;font-size:7.2px;color:#e21256;">=</span>
<span class="t" style="left:110.20px;top:17.56px;font-size:7.2px;color:#e21256;">511.77</span>
<span class="t" style="right:135.00px;top:17.56px;font-size:7.2px;color:#e21256;">m%rms</span>
<span class="t" style="left:177.40px;top:17.56px;font-size:7.2px;color:#e21256;">at</span>
<span class="t" style="left:189.80px;top:17.56px;font-size:7.2px;color:#e21256;transform:scaleX(1.0389);transform-origin:0 0;">EVMWindow End</span>
<span class="t" style="left:4.60px;top:26.56px;font-size:7.2px;color:#e21256;">EVM Pk</span>
<span class="t" style="left:102.60px;top:26.56px;font-size:7.2px;color:#e21256;">=</span>
<span class="t" style="left:110.20px;top:26.56px;font-size:7.2px;color:#e21256;">2.3130</span>
<span class="t" style="right:137.60px;top:26.56px;font-size:7.2px;color:#e21256;">%</span>
<span class="t" style="left:177.40px;top:26.56px;font-size:7.2px;color:#e21256;">at</span>
<span class="t" style="left:189.80px;top:26.56px;font-size:7.2px;color:#e21256;">sym  69,</span>
<span class="t" style="left:223.30px;top:26.56px;font-size:7.2px;color:#e21256;">subcar</span>
<span class="t" style="left:252.60px;top:26.56px;font-size:7.2px;color:#e21256;">286</span>
<span class="t" style="left:4.60px;top:35.56px;font-size:7.2px;color:#e21256;">Data EVM</span>
<span class="t" style="left:102.60px;top:35.56px;font-size:7.2px;color:#e21256;">=</span>
<span class="t" style="left:110.20px;top:35.56px;font-size:7.2px;color:#e21256;">517.44</span>
<span class="t" style="right:135.00px;top:35.56px;font-size:7.2px;color:#e21256;">m%rms</span>
<span class="t" style="left:6.40px;top:44.56px;font-size:7.2px;color:#e21256;">- 3GPP-defined QPSK EVM</span>
<span class="t" style="left:102.60px;top:44.56px;font-size:7.2px;color:#e21256;">=</span>
<div class="b" style="left:110.39999999999998px;top:48.00px;width:6.6px;height:0.8px;background:#e21256;"></div>
<span class="t" style="left:6.40px;top:53.56px;font-size:7.2px;color:#e21256;">- 3GPP-defined 16QAM EVM</span>
<span class="t" style="left:102.60px;top:53.56px;font-size:7.2px;color:#e21256;">=</span>
<div class="b" style="left:110.39999999999998px;top:57.00px;width:6.6px;height:0.8px;background:#e21256;"></div>
<span class="t" style="left:6.40px;top:62.56px;font-size:7.2px;color:#e21256;">- 3GPP-defined 64QAM EVM</span>
<span class="t" style="left:102.60px;top:62.56px;font-size:7.2px;color:#e21256;">=</span>
<span class="t" style="left:110.20px;top:62.56px;font-size:7.2px;color:#e21256;">517.30</span>
<span class="t" style="right:135.00px;top:62.56px;font-size:7.2px;color:#e21256;">m%rms</span>
<span class="t" style="left:4.60px;top:71.56px;font-size:7.2px;color:#e21256;">RS EVM</span>
<span class="t" style="left:102.60px;top:71.56px;font-size:7.2px;color:#e21256;">=</span>
<span class="t" style="left:110.20px;top:71.56px;font-size:7.2px;color:#e21256;">496.96</span>
<span class="t" style="right:135.00px;top:71.56px;font-size:7.2px;color:#e21256;">m%rms</span>
<span class="t" style="left:4.60px;top:80.56px;font-size:7.2px;color:#e21256;">Channel Power</span>
<span class="t" style="left:102.60px;top:80.56px;font-size:7.2px;color:#e21256;">=</span>
<span class="t" style="left:110.00px;top:80.56px;font-size:7.2px;color:#e21256;">-10.477</span>
<span class="t" style="right:137.00px;top:80.56px;font-size:7.2px;color:#e21256;">dBm</span>
<span class="t" style="left:4.60px;top:89.56px;font-size:7.2px;color:#e21256;">RS Tx. Power (Avg)</span>
<span class="t" style="left:102.60px;top:89.56px;font-size:7.2px;color:#e21256;">=</span>
<span class="t" style="left:110.00px;top:89.56px;font-size:7.2px;color:#e21256;">-41.26</span>
<span class="t" style="right:137.00px;top:89.56px;font-size:7.2px;color:#e21256;">dBm</span>
<span class="t" style="left:4.60px;top:98.56px;font-size:7.2px;color:#e21256;">OFDM Sym. Tx. Power</span>
<span class="t" style="left:102.60px;top:98.56px;font-size:7.2px;color:#e21256;">=</span>
<span class="t" style="left:110.00px;top:98.56px;font-size:7.2px;color:#e21256;">-10.438</span>
<span class="t" style="right:137.00px;top:98.56px;font-size:7.2px;color:#e21256;">dBm</span>
<span class="t" style="left:4.60px;top:107.56px;font-size:7.2px;color:#e21256;">RS Rx. Power (Avg)</span>
<span class="t" style="left:102.60px;top:107.56px;font-size:7.2px;color:#e21256;">=</span>
<span class="t" style="left:110.00px;top:107.56px;font-size:7.2px;color:#e21256;">-41.26</span>
<span class="t" style="right:137.00px;top:107.56px;font-size:7.2px;color:#e21256;">dBm</span>
<span class="t" style="left:4.60px;top:116.56px;font-size:7.2px;color:#e21256;">RSSI</span>
<span class="t" style="left:102.60px;top:116.56px;font-size:7.2px;color:#e21256;">=</span>
<span class="t" style="left:110.00px;top:116.56px;font-size:7.2px;color:#e21256;">-10.475</span>
<span class="t" style="right:137.00px;top:116.56px;font-size:7.2px;color:#e21256;">dBm</span>
<span class="t" style="left:4.60px;top:125.56px;font-size:7.2px;color:#e21256;">RS Rx. Quality</span>
<span class="t" style="left:102.60px;top:125.56px;font-size:7.2px;color:#e21256;">=</span>
<span class="t" style="left:110.00px;top:125.56px;font-size:7.2px;color:#e21256;">-10.784</span>
<span class="t" style="right:139.00px;top:125.56px;font-size:7.2px;color:#e21256;">dB</span>
<span class="t" style="left:4.60px;top:139.16px;font-size:7.2px;color:#e21256;">Freq Err</span>
<span class="t" style="left:102.60px;top:139.16px;font-size:7.2px;color:#e21256;">=</span>
<span class="t" style="left:110.00px;top:139.16px;font-size:7.2px;color:#e21256;">-47.626</span>
<span class="t" style="right:136.50px;top:139.16px;font-size:7.2px;color:#e21256;">mHz</span>
<span class="t" style="left:4.60px;top:148.06px;font-size:7.2px;color:#e21256;">SyncCorr</span>
<span class="t" style="left:102.60px;top:148.06px;font-size:7.2px;color:#e21256;">=</span>
<span class="t" style="left:110.20px;top:148.06px;font-size:7.2px;color:#e21256;">99.984</span>
<span class="t" style="right:137.60px;top:148.06px;font-size:7.2px;color:#e21256;">%</span>
<span class="t" style="left:177.40px;top:148.06px;font-size:7.2px;color:#e21256;">using</span>
<span class="t" style="left:202.60px;top:148.06px;font-size:7.2px;color:#e21256;">P-SS</span>
<span class="t" style="left:4.60px;top:156.96px;font-size:7.2px;color:#e21256;">Common Tracking Error</span>
<span class="t" style="left:102.60px;top:156.96px;font-size:7.2px;color:#e21256;">=</span>
<span class="t" style="left:110.20px;top:156.96px;font-size:7.2px;color:#e21256;">703.15</span>
<span class="t" style="right:135.00px;top:156.96px;font-size:7.2px;color:#e21256;">m%rms</span>
<span class="t" style="left:4.60px;top:165.86px;font-size:7.2px;color:#e21256;">SymClk Err</span>
<span class="t" style="left:102.60px;top:165.86px;font-size:7.2px;color:#e21256;">=</span>
<span class="t" style="left:110.20px;top:165.86px;font-size:7.2px;color:#e21256;">0.00015</span>
<span class="t" style="right:136.50px;top:165.86px;font-size:7.2px;color:#e21256;">ppm</span>
<span class="t" style="left:4.60px;top:174.76px;font-size:7.2px;color:#e21256;">Time Offset</span>
<span class="t" style="left:102.60px;top:174.76px;font-size:7.2px;color:#e21256;">=</span>
<span class="t" style="left:110.20px;top:174.76px;font-size:7.2px;color:#e21256;">2.3733</span>
<span class="t" style="right:137.50px;top:174.76px;font-size:7.2px;color:#e21256;">msec</span>
<span class="t" style="left:4.60px;top:183.66px;font-size:7.2px;color:#e21256;">IQ Offset</span>
<span class="t" style="left:102.60px;top:183.66px;font-size:7.2px;color:#e21256;">=</span>
<span class="t" style="left:110.00px;top:183.66px;font-size:7.2px;color:#e21256;">-59.48</span>
<span class="t" style="right:139.00px;top:183.66px;font-size:7.2px;color:#e21256;">dB</span>
<span class="t" style="left:4.60px;top:192.56px;font-size:7.2px;color:#e21256;">IQ Gain Imbalance</span>
<span class="t" style="left:102.60px;top:192.56px;font-size:7.2px;color:#e21256;">=</span>
<span class="t" style="left:110.00px;top:192.56px;font-size:7.2px;color:#e21256;">-0.003</span>
<span class="t" style="right:139.00px;top:192.56px;font-size:7.2px;color:#e21256;">dB</span>
<span class="t" style="left:4.60px;top:201.46px;font-size:7.2px;color:#e21256;">IQ Quad. Error</span>
<span class="t" style="left:102.60px;top:201.46px;font-size:7.2px;color:#e21256;">=</span>
<span class="t" style="left:110.00px;top:201.46px;font-size:7.2px;color:#e21256;">-13.887</span>
<span class="t" style="right:136.50px;top:201.46px;font-size:7.2px;color:#e21256;">mdeg</span>
<span class="t" style="left:4.60px;top:210.36px;font-size:7.2px;color:#e21256;">IQ Timing Skew</span>
<span class="t" style="left:102.60px;top:210.36px;font-size:7.2px;color:#e21256;">=</span>
<span class="t" style="left:110.00px;top:210.36px;font-size:7.2px;color:#e21256;">-1.7904</span>
<span class="t" style="right:137.50px;top:210.36px;font-size:7.2px;color:#e21256;">nsec</span>
<div class="b" style="left:4.5px;top:135.0px;width:301px;height:1px;background:#e21256;"></div>
</div>
<span class="t" style="top:509.66px;font-size:7.2px;color:#e4e4e4;right:392.00px;transform:scaleX(0.9216);transform-origin:100% 0;">CAL?</span>
<div class="b" style="left:638.40px;top:313.00px;width:9.60px;height:218.00px;background:#ffffff;"></div>
<div class="b" style="left:639.30px;top:323.00px;width:7.80px;height:10.40px;background:#cdcdcd;"></div>
<svg width="1024" height="601" fill="none" stroke="#303030" stroke-width="0.9"><path d="M641.2 320l2 -2 2 2M641.2 524.6l2 2 2 -2"/></svg>
<span class="t" style="top:331.16px;font-size:7.2px;color:#d418d4;left:660.80px;">Channel</span>
<span class="t" style="top:331.16px;font-size:7.2px;color:#d418d4;left:731.80px;">EVM(%rms)</span>
<span class="t" style="top:331.16px;font-size:7.2px;color:#d418d4;left:782.00px;">Power(dB)</span>
<span class="t" style="top:331.16px;font-size:7.2px;color:#d418d4;left:832.00px;">Mod.Fmt.</span>
<span class="t" style="top:331.16px;font-size:7.2px;color:#d418d4;left:882.20px;">Num.RB</span>
<div class="b" style="left:657.00px;top:342.80px;width:312.00px;height:1.00px;background:#d418d4;"></div>
<span class="t" style="top:349.16px;font-size:7.2px;color:#c822c8;left:660.80px;">P-SS</span>
<span class="t" style="top:349.16px;font-size:7.2px;color:#c822c8;left:731.80px;">0.46785</span>
<span class="t" style="top:349.16px;font-size:7.2px;color:#c822c8;left:782.00px;">0.00216</span>
<span class="t" style="top:349.16px;font-size:7.2px;color:#c822c8;left:832.00px;">Z-Chu</span>
<span class="t" style="top:349.16px;font-size:7.2px;color:#c822c8;left:882.20px;">12</span>
<span class="t" style="top:358.16px;font-size:7.2px;color:#3078e6;left:660.80px;">S-SS</span>
<span class="t" style="top:358.16px;font-size:7.2px;color:#3078e6;left:731.80px;">0.52561</span>
<span class="t" style="top:358.16px;font-size:7.2px;color:#3078e6;left:782.00px;">0.00406</span>
<span class="t" style="top:358.16px;font-size:7.2px;color:#3078e6;left:832.00px;">BPSK</span>
<span class="t" style="top:358.16px;font-size:7.2px;color:#3078e6;left:882.20px;">12</span>
<span class="t" style="top:367.16px;font-size:7.2px;color:#34c80c;left:660.80px;">PBCH</span>
<span class="t" style="top:367.16px;font-size:7.2px;color:#34c80c;left:731.80px;">0.45574</span>
<span class="t" style="top:367.16px;font-size:7.2px;color:#34c80c;left:782.00px;">0.00408</span>
<span class="t" style="top:367.16px;font-size:7.2px;color:#34c80c;left:832.00px;">QPSK</span>
<span class="t" style="top:367.16px;font-size:7.2px;color:#34c80c;left:882.20px;">6</span>
<span class="t" style="top:376.16px;font-size:7.2px;color:#8420e0;left:660.80px;">PCFICH</span>
<span class="t" style="top:376.16px;font-size:7.2px;color:#8420e0;left:731.80px;">0.45326</span>
<span class="t" style="top:376.16px;font-size:7.2px;color:#8420e0;left:782.00px;">-0.00218</span>
<span class="t" style="top:376.16px;font-size:7.2px;color:#8420e0;left:832.00px;">QPSK</span>
<span class="t" style="top:376.16px;font-size:7.2px;color:#8420e0;left:882.20px;">40</span>
<span class="t" style="top:385.16px;font-size:7.2px;color:#dc1434;left:660.80px;">PHICH</span>
<span class="t" style="top:385.16px;font-size:7.2px;color:#dc1434;left:731.80px;">0.38494</span>
<span class="t" style="top:385.16px;font-size:7.2px;color:#dc1434;left:782.00px;">0.00004</span>
<span class="t" style="top:385.16px;font-size:7.2px;color:#dc1434;left:832.00px;">BPSK (CDM)</span>
<span class="t" style="top:385.16px;font-size:7.2px;color:#dc1434;left:882.20px;">60</span>
<span class="t" style="top:394.16px;font-size:7.2px;color:#c8c828;left:660.80px;">PDCCH</span>
<span class="t" style="top:394.16px;font-size:7.2px;color:#c8c828;left:731.80px;">0.43662</span>
<span class="t" style="top:394.16px;font-size:7.2px;color:#c8c828;left:782.00px;">1.195</span>
<span class="t" style="top:394.16px;font-size:7.2px;color:#c8c828;left:832.00px;">QPSK</span>
<span class="t" style="top:394.16px;font-size:7.2px;color:#c8c828;left:882.20px;">950</span>
<span class="t" style="top:403.16px;font-size:7.2px;color:#1cb4d4;left:660.80px;">C-RS</span>
<span class="t" style="top:403.16px;font-size:7.2px;color:#1cb4d4;left:731.80px;">0.49696</span>
<span class="t" style="top:403.16px;font-size:7.2px;color:#1cb4d4;left:782.00px;">0</span>
<span class="t" style="top:403.16px;font-size:7.2px;color:#1cb4d4;left:832.00px;">QPSK</span>
<span class="t" style="top:403.16px;font-size:7.2px;color:#1cb4d4;left:882.20px;">2000</span>
<span class="t" style="top:412.16px;font-size:7.2px;color:#9c0c3c;left:660.80px;">PDSCH_QPSK</span>
<div class="b" style="left:732.00px;top:415.60px;width:6.40px;height:0.80px;background:#9c0c3c;"></div>
<div class="b" style="left:782.20px;top:415.60px;width:6.40px;height:0.80px;background:#9c0c3c;"></div>
<span class="t" style="top:412.16px;font-size:7.2px;color:#9c0c3c;left:832.00px;">QPSK</span>
<div class="b" style="left:882.40px;top:415.60px;width:6.40px;height:0.80px;background:#9c0c3c;"></div>
<span class="t" style="top:421.16px;font-size:7.2px;color:#b07410;left:660.80px;">PDSCH_16QAM</span>
<div class="b" style="left:732.00px;top:424.60px;width:6.40px;height:0.80px;background:#b07410;"></div>
<div class="b" style="left:782.20px;top:424.60px;width:6.40px;height:0.80px;background:#b07410;"></div>
<span class="t" style="top:421.16px;font-size:7.2px;color:#b07410;left:832.00px;">16QAM</span>
<div class="b" style="left:882.40px;top:424.60px;width:6.40px;height:0.80px;background:#b07410;"></div>
<span class="t" style="top:430.16px;font-size:7.2px;color:#8cb41c;left:660.80px;">PDSCH_64QAM</span>
<span class="t" style="top:430.16px;font-size:7.2px;color:#8cb41c;left:731.80px;">0.51744</span>
<span class="t" style="top:430.16px;font-size:7.2px;color:#8cb41c;left:782.00px;">-0.00260</span>
<span class="t" style="top:430.16px;font-size:7.2px;color:#8cb41c;left:832.00px;">64QAM</span>
<span class="t" style="top:430.16px;font-size:7.2px;color:#8cb41c;left:882.20px;">2000</span>
<span class="t" style="top:439.16px;font-size:7.2px;color:#8a8a8a;left:660.80px;">Non-alloc</span>
<div class="b" style="left:732.00px;top:442.60px;width:6.40px;height:0.80px;background:#8a8a8a;"></div>
<div class="b" style="left:782.20px;top:442.60px;width:6.40px;height:0.80px;background:#8a8a8a;"></div>
<div class="b" style="left:832.20px;top:442.60px;width:6.40px;height:0.80px;background:#8a8a8a;"></div>
<div class="b" style="left:882.40px;top:442.60px;width:6.40px;height:0.80px;background:#8a8a8a;"></div>
<span class="t" style="top:509.66px;font-size:7.2px;color:#e4e4e4;right:57.60px;transform:scaleX(0.9216);transform-origin:100% 0;">CAL?</span>
<svg width="1024" height="601"><path d="M5 535.5H973" stroke="#505056" stroke-width="0.8" stroke-dasharray="1.2 1.2"/><defs><pattern id="gr" width="2.4" height="3.6" patternUnits="userSpaceOnUse"><rect x="0" y="0" width="1" height="1" fill="#5c5c62"/><rect x="1.2" y="1.3" width="1" height="1" fill="#5c5c62"/><rect x="0" y="2.6" width="1" height="1" fill="#5c5c62"/></pattern></defs><rect x="36" y="539.8" width="908" height="3.6" fill="url(#gr)"/><path d="M946 540.6h4.4l-2.2 2.2z" fill="#e0e0e0"/><path d="M955.6 539h3M956.3 539v3.4M957.9 539v3.4M955 542.4h4.2M957.1 542.4v2.6" stroke="#d8d8d8" stroke-width="0.7" fill="none"/><path d="M965.2 539l4.4 4.4M969.6 539l-4.4 4.4" stroke="#e8e8e8" stroke-width="0.9"/></svg>
<span class="t" style="top:537.47px;font-size:7.3px;color:#f0f0f0;left:7.60px;transform:scaleX(0.9407);transform-origin:0 0;">Markers</span>
<div class="b" style="left:5.00px;top:547.40px;width:968.20px;height:31.80px;background:#000;border:1.2px solid #c4c4c4;border-right-color:#8a8a8a;border-bottom-color:#8a8a8a;"></div>
<div class="b" style="left:1.00px;top:584.00px;width:976.00px;height:13.60px;background:#0e7ad3;"></div>
<span class="t" style="top:587.37px;font-size:7.3px;color:#f0f8ff;left:9.90px;transform:scaleX(0.9347);transform-origin:0 0;">Measurement paused</span>
<div class="b" style="left:878.00px;top:585.00px;width:1.20px;height:12.60px;background:#69aee6;"></div>
<div class="b" style="left:922.60px;top:585.00px;width:1.20px;height:12.60px;background:#69aee6;"></div>
<span class="t" style="top:587.57px;font-size:7.3px;color:#cfe6fa;left:890.00px;transform:scaleX(0.7963);transform-origin:0 0;">INT REF</span>
<div class="b" style="left:929.80px;top:586.20px;width:40.80px;height:8.80px;background:#000;"></div>
<span class="t" style="top:587.37px;font-size:7.3px;color:#e8d818;left:931.20px;transform:scaleX(0.8670);transform-origin:0 0;">CAL: Needed</span>
<div class="t" style="left:996.6px;top:573.3px;width:30px;height:16px;font-size:16px;color:#0c0c0c;-webkit-text-stroke:0.35px #0c0c0c;transform:rotate(-90deg);transform-origin:50% 50%;text-align:center;">014</div>
</div></body></html>
